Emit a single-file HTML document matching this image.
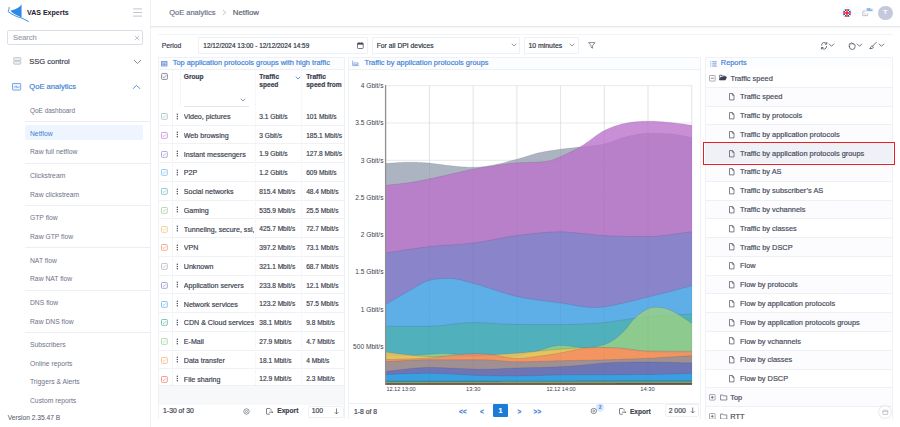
<!DOCTYPE html>
<html><head><meta charset="utf-8">
<style>
*{box-sizing:border-box;margin:0;padding:0}
html,body{width:900px;height:427px;overflow:hidden;background:#fff;font-family:"Liberation Sans",sans-serif;color:#3b3f4f}
.a{position:absolute;white-space:nowrap}
.side{position:absolute;z-index:2;left:0;top:0;width:151.2px;height:427px;background:#fff;border-right:1.2px solid #eeeff2}
.si{position:absolute;white-space:nowrap;left:30px;font-size:6.75px;color:#6e7386;line-height:8px;-webkit-text-stroke:0px}
.div{position:absolute;left:25px;width:125px;height:1px;background:#eceef5}
.hdr{position:absolute;left:150px;top:0;width:750px;height:26px;background:#fff;box-shadow:0 1px 0 rgba(0,0,0,0.05),0 2px 1px rgba(0,0,0,0.035)}
.panel{position:absolute;background:#fff;border:1px solid #eff1f7}
.ph{position:absolute;left:0;top:0;right:0;height:12px;background:#fcfdff;border-bottom:1px solid #edf0f6}
.pt{position:absolute;white-space:nowrap;font-size:7.4px;color:#3e7fd6;line-height:9px;margin-top:-0.8px}
.row{position:absolute;left:0;width:187px;height:18.75px;border-bottom:1px solid #f0f2f7}
.cb{position:absolute;left:4px;width:6px;height:6px;border:0.9px solid;border-radius:1px}
.cell{position:absolute;white-space:nowrap;font-size:7.3px;color:#3b3f4f;line-height:9px}
.rr{position:absolute;left:0;width:187px;height:18.78px;border-bottom:1px solid #eef0f5}
.rt{position:absolute;white-space:nowrap;left:34.5px;top:4.5px;font-size:7.42px;color:#464a5a;line-height:9px}
.fi{position:absolute;left:24px;top:5px;width:4.4px;height:6px;border:0.8px solid #4a4e5c;border-radius:0.5px 1.5px 0.5px 0.5px}
svg text{font-family:"Liberation Sans",sans-serif}
body div{-webkit-text-stroke:0.18px currentColor}
</style></head><body>

<!-- SIDEBAR -->
<div class="side">
  <svg class="a" style="left:0;top:0" width="34" height="26" viewBox="0 0 34 26">
    <path d="M21.5 4.1C20.2 7.4 15.8 9.6 11 10.4L10.3 10.6C12.5 13.4 16.2 15.6 21.6 17.4Z" fill="#2c8ae6"/>
    <path d="M9.2 7.1C9.2 9 8.8 10.5 8 11.5C11.8 14.6 16.8 16.9 21.8 18.1L28.8 21.6" fill="none" stroke="#2c8ae6" stroke-width="1" opacity="0.9"/>
  </svg>
  <div class="a" style="left:27px;top:8px;font-size:7.05px;font-weight:bold;color:#1e2130;line-height:9px;-webkit-text-stroke:0">VAS Experts</div>
  <svg class="a" style="left:132px;top:7px" width="11" height="11"><path d="M1 1.9h9M1 5.5h9M1 9.1h9" stroke="#b4b8c4" stroke-width="0.8"/></svg>
  <div class="a" style="left:7.2px;top:30.2px;width:135.8px;height:14.6px;border:1px solid #d9dee9;border-radius:2px"></div>
  <div class="a" style="left:13px;top:33px;font-size:7.5px;color:#9ca1b2;line-height:9px">Search</div>
  <svg class="a" style="left:134px;top:35px" width="6" height="6"><path d="M0.8 0.8L5.2 5.2M5.2 0.8L0.8 5.2" stroke="#a8acb8" stroke-width="0.7"/></svg>

  <svg class="a" style="left:12.5px;top:57px" width="9" height="8"><rect x="0.6" y="0.6" width="7.2" height="3" rx="0.9" fill="#eceef2" stroke="#b0b4be" stroke-width="0.7"/><rect x="0.6" y="4.2" width="7.2" height="3" rx="0.9" fill="#eceef2" stroke="#b0b4be" stroke-width="0.7"/></svg>
  <div class="a" style="left:29.3px;top:57.2px;font-size:7.5px;color:#3d4152;line-height:9px">SSG control</div>
  <svg class="a" style="left:133px;top:59px" width="9" height="6"><path d="M1 1L4.5 4.5L8 1" fill="none" stroke="#7d8292" stroke-width="0.9"/></svg>

  <svg class="a" style="left:12.2px;top:82.6px" width="10" height="8"><rect x="0.5" y="0.5" width="8.2" height="6.6" rx="0.5" fill="#eef4fd" stroke="#5b93de" stroke-width="0.8"/><path d="M1.8 4h1.7l0.7-1.2 0.9 2.2 0.8-1h1.8" fill="none" stroke="#5b93de" stroke-width="0.65"/></svg>
  <div class="a" style="left:29.3px;top:81.8px;font-size:7.6px;color:#3e7fd6;line-height:9px">QoE analytics</div>
  <svg class="a" style="left:131.5px;top:84px" width="9" height="6"><path d="M1 4.8L4.5 1.3L8 4.8" fill="none" stroke="#3e7fd6" stroke-width="0.9"/></svg>

  <div class="si" style="top:106.9px;font-size:6.45px">QoE dashboard</div>
  <div class="div" style="top:120.7px"></div>
  <div class="a" style="left:24.6px;top:125.4px;width:118.4px;height:14.6px;background:#eef5fe;border-radius:2px"></div>
  <div class="si" style="top:129.6px;color:#3e7fd6">Netflow</div>
  <div class="si" style="top:148.4px">Raw full netflow</div>
  <div class="div" style="top:162.9px"></div>
  <div class="si" style="top:171.9px">Clickstream</div>
  <div class="si" style="top:190.6px">Raw clickstream</div>
  <div class="div" style="top:205.1px"></div>
  <div class="si" style="top:214.0px">GTP flow</div>
  <div class="si" style="top:232.7px">Raw GTP flow</div>
  <div class="div" style="top:247.2px"></div>
  <div class="si" style="top:256.6px">NAT flow</div>
  <div class="si" style="top:275.4px">Raw NAT flow</div>
  <div class="div" style="top:289.9px"></div>
  <div class="si" style="top:298.8px">DNS flow</div>
  <div class="si" style="top:317.6px">Raw DNS flow</div>
  <div class="div" style="top:332.1px"></div>
  <div class="si" style="top:340.8px">Subscribers</div>
  <div class="si" style="top:359.6px">Online reports</div>
  <div class="si" style="top:378.3px">Triggers &amp; Alerts</div>
  <div class="si" style="top:397.1px">Custom reports</div>
  <div class="a" style="left:7.7px;top:413.7px;font-size:6.65px;color:#585d6e;line-height:8px;-webkit-text-stroke:0.05px currentColor">Version 2.35.47 B</div>
</div>

<!-- HEADER -->
<div class="hdr">
  <div class="a" style="left:19.2px;top:7.9px;font-size:7.5px;color:#6b7084;line-height:9px">QoE analytics</div>
  <svg class="a" style="left:72px;top:9px" width="5" height="7"><path d="M1 1L3.8 3.5L1 6" fill="none" stroke="#a8acb8" stroke-width="0.7"/></svg>
  <div class="a" style="left:82.8px;top:7.9px;font-size:7.85px;color:#5a5f72;line-height:9px">Netflow</div>
  <!-- flag -->
  <svg class="a" style="left:691px;top:7px" width="12" height="12" viewBox="0 0 12 12">
    <circle cx="6" cy="6" r="5.4" fill="#fff" stroke="#f0f1f5" stroke-width="0.6"/>
    <defs><clipPath id="fc"><circle cx="6" cy="6" r="3.9"/></clipPath></defs>
    <g clip-path="url(#fc)"><rect width="12" height="12" fill="#3a4aa0"/>
    <path d="M0 0L12 12M12 0L0 12" stroke="#fff" stroke-width="1"/>
    <path d="M6 0V12M0 6H12" stroke="#fff" stroke-width="1.8"/>
    <path d="M6 0V12M0 6H12" stroke="#e0202c" stroke-width="1.3"/></g>
  </svg>
  <svg class="a" style="left:711px;top:7px" width="15" height="11" viewBox="0 0 15 11">
    <path d="M4.6 4.1H2.3a0.5 0.5 0 0 0-0.5 0.5V8.2a0.5 0.5 0 0 0 0.5 0.5H6.2a0.5 0.5 0 0 0 0.5-0.5V6.6" fill="none" stroke="#a3a8b6" stroke-width="0.75"/>
    <path d="M3 6.4L4.2 7.2L5.4 6.4" fill="none" stroke="#a3a8b6" stroke-width="0.55"/>
    <rect x="4.2" y="1.2" width="8.6" height="3.4" rx="1.7" fill="#d8e9fc"/>
    <text x="8.5" y="4" font-size="3.2" fill="#3f8be0" text-anchor="middle" font-weight="bold">99+</text>
  </svg>
  <div class="a" style="left:728.2px;top:5.7px;width:14.6px;height:14.6px;border-radius:50%;background:#c4cadb"></div>
  <div class="a" style="left:733.4px;top:9.2px;font-size:5.8px;font-weight:bold;color:#fff;line-height:7px">T</div>
</div>

<!-- TOOLBAR -->
<div class="a" style="left:157.8px;top:33.5px;width:735px;height:1px;background:#f2f4f9"></div>
<div class="a" style="left:161.7px;top:42.3px;font-size:6.75px;color:#3b3f4f;line-height:8px">Period</div>
<div class="a" style="left:198.3px;top:37.3px;width:170px;height:16.3px;border:1px solid #eef0f6;border-radius:1px"></div>
<div class="a" style="left:203.3px;top:42.3px;font-size:6.44px;color:#2f3342;line-height:8px">12/12/2024 13:00 - 12/12/2024 14:59</div>
<svg class="a" style="left:357px;top:42px" width="7" height="7"><rect x="0.5" y="1.1" width="5.7" height="5.4" rx="0.7" fill="#fff" stroke="#4a4f62" stroke-width="0.75"/><rect x="0.5" y="1.1" width="5.7" height="1.5" fill="#3a3f55"/><path d="M2 0.2v1.5M4.7 0.2v1.5" stroke="#3a3f55" stroke-width="0.8"/></svg>
<div class="a" style="left:372.2px;top:37.3px;width:148.2px;height:16.3px;border:1px solid #eef0f6;border-radius:1px"></div>
<div class="a" style="left:376.7px;top:42.3px;font-size:6.79px;color:#2f3342;line-height:8px">For all DPI devices</div>
<svg class="a" style="left:510.5px;top:43px" width="6" height="4"><path d="M0.7 0.7L3 3L5.3 0.7" fill="none" stroke="#6a6e7c" stroke-width="0.7"/></svg>
<div class="a" style="left:524.4px;top:37.3px;width:54.5px;height:16.3px;border:1px solid #eef0f6;border-radius:1px"></div>
<div class="a" style="left:528.4px;top:42.3px;font-size:6.91px;color:#2f3342;line-height:8px">10 minutes</div>
<svg class="a" style="left:569px;top:43px" width="6" height="4"><path d="M0.7 0.7L3 3L5.3 0.7" fill="none" stroke="#6a6e7c" stroke-width="0.7"/></svg>
<svg class="a" style="left:588px;top:42px" width="8" height="7"><path d="M0.6 0.6H7L4.6 3.5V6.2L3 5.3V3.5Z" fill="none" stroke="#5a5e6c" stroke-width="0.7"/></svg>
<!-- right toolbar icons -->
<svg class="a" style="left:815px;top:36px" width="75" height="20" viewBox="0 0 75 20">
  <g fill="none" stroke="#4e5262" stroke-width="0.8" stroke-linecap="round">
    <path d="M6.6 9.2A2.7 2.7 0 0 1 11.5 7.6M11.6 10.4A2.7 2.7 0 0 1 6.7 12"/>
    <path d="M11.8 6.5V8.1H10.2M6.4 13.1V11.5H8"/>
    <path d="M14.2 8L16.5 10.3L18.8 8"/>
    <path d="M34.3 10.4V8.3a0.75 0.75 0 0 1 1.5 0V7.6a0.75 0.75 0 0 1 1.5 0v0.5a0.75 0.75 0 0 1 1.5 0v0.8a0.75 0.75 0 0 1 1.3 0V10.6a2.9 2.9 0 0 1-2.9 2.9H37.2A2.9 2.9 0 0 1 34.3 10.6Z"/>
    <path d="M42.2 8L44.5 10.3L46.8 8"/>
    <path d="M55.2 12.6C55.4 11.2 56.1 10.2 57.1 10.2C57.9 10.2 58.5 10.8 58.3 11.5C57.8 12.4 56.5 12.8 55.2 12.6Z"/>
    <path d="M57.6 10.1L61.2 6.4"/>
    <path d="M64.2 8L66.5 10.3L68.8 8"/>
  </g>
</svg>
<!-- LEFT TABLE PANEL -->
<div class="panel" style="left:157.5px;top:56.7px;width:187.3px;height:362px;overflow:hidden;border-bottom:none">
  <div class="ph"></div>
  <svg class="a" style="left:2.9px;top:3.2px" width="7" height="6"><rect x="0.4" y="0.4" width="5.6" height="4.6" fill="#dfe6fb" stroke="#5a86d6" stroke-width="0.7"/><path d="M0.4 1.9h5.6M3.2 1.9v3.1M0.4 3.4h5.6" stroke="#5a86d6" stroke-width="0.6"/></svg>
  <div class="pt" style="left:14.2px;top:1.5px">Top application protocols groups with high traffic</div>
  <!-- header -->
  <svg class="a" style="left:2.6px;top:15.4px" width="8" height="8"><rect x="0.6" y="0.6" width="5.8" height="5.8" rx="0.8" fill="#fff" stroke="#6e7280" stroke-width="0.8"/><path d="M1.8 3.6L3.1 4.8L5.3 2.2" fill="none" stroke="#6e7280" stroke-width="0.7"/></svg>
  <div class="a" style="left:13.8px;top:11.5px;width:0;height:316px;border-left:0.8px dotted #e8ebf2"></div>
  <div class="a" style="left:21.1px;top:11.5px;width:0;height:37px;border-left:0.8px dotted #e8ebf2"></div>
  <div class="a" style="left:96.2px;top:11.5px;width:0;height:316px;border-left:0.8px dotted #eef0f5"></div>
  <div class="a" style="left:142.6px;top:11.5px;width:0;height:316px;border-left:0.8px dotted #eef0f5"></div>
  <div class="a" style="left:186px;top:11.5px;width:0;height:316px;border-left:0.8px dotted #eef0f5"></div>
  <div class="cell" style="left:25.3px;top:14.8px;font-weight:bold;font-size:6.6px">Group</div>
  <svg class="a" style="left:81.6px;top:40.4px" width="6" height="4"><path d="M0.7 0.7L3 3L5.3 0.7" fill="none" stroke="#6a6e7c" stroke-width="0.7"/></svg>
  <div class="a" style="left:25.3px;top:48.3px;width:65px;height:1px;background:#dfe4ee"></div>
  <div class="cell" style="left:100.8px;top:15.4px;font-weight:bold;font-size:6.6px;line-height:7.9px">Traffic<br>speed</div>
  <svg class="a" style="left:136.6px;top:18.8px" width="6" height="4"><path d="M0.7 0.7L3 3L5.3 0.7" fill="none" stroke="#3e7fd6" stroke-width="0.8"/></svg>
  <div class="cell" style="left:147.7px;top:15.4px;font-weight:bold;font-size:6.6px;line-height:7.9px">Traffic<br>speed from</div>
  <div class="row" style="top:49.10px"><svg class="a" style="left:2.9px;top:6.4px" width="7" height="7"><g opacity="0.75"><rect x="0.5" y="0.5" width="5.8" height="5.8" rx="0.8" fill="#fff" stroke="#8ea8b4" stroke-width="0.8"/><path d="M1.8 3.5L2.9 4.5L4.9 2.3" fill="none" stroke="#8ea8b4" stroke-width="0.7"/></g></svg><svg class="a" style="left:17.3px;top:5.8px" width="3" height="8"><circle cx="1.3" cy="1.2" r="0.75" fill="#4a4e5c"/><circle cx="1.3" cy="3.5" r="0.75" fill="#4a4e5c"/><circle cx="1.3" cy="5.8" r="0.75" fill="#4a4e5c"/></svg><div class="cell" style="left:25.3px;top:6.4px;width:70.5px;overflow:hidden;font-size:7.1px">Video, pictures</div><div class="cell" style="left:100.8px;top:5.2px;font-size:6.6px">3.1 Gbit/s</div><div class="cell" style="left:147.7px;top:5.2px;font-size:6.6px">101 Mbit/s</div></div>
<div class="row" style="top:67.85px"><svg class="a" style="left:2.9px;top:6.4px" width="7" height="7"><g opacity="0.75"><rect x="0.5" y="0.5" width="5.8" height="5.8" rx="0.8" fill="#fff" stroke="#b75fc9" stroke-width="0.8"/><path d="M1.8 3.5L2.9 4.5L4.9 2.3" fill="none" stroke="#b75fc9" stroke-width="0.7"/></g></svg><svg class="a" style="left:17.3px;top:5.8px" width="3" height="8"><circle cx="1.3" cy="1.2" r="0.75" fill="#4a4e5c"/><circle cx="1.3" cy="3.5" r="0.75" fill="#4a4e5c"/><circle cx="1.3" cy="5.8" r="0.75" fill="#4a4e5c"/></svg><div class="cell" style="left:25.3px;top:6.4px;width:70.5px;overflow:hidden;font-size:7.1px">Web browsing</div><div class="cell" style="left:100.8px;top:5.2px;font-size:6.6px">3 Gbit/s</div><div class="cell" style="left:147.7px;top:5.2px;font-size:6.6px">185.1 Mbit/s</div></div>
<div class="row" style="top:86.60px"><svg class="a" style="left:2.9px;top:6.4px" width="7" height="7"><g opacity="0.75"><rect x="0.5" y="0.5" width="5.8" height="5.8" rx="0.8" fill="#fff" stroke="#7b76c4" stroke-width="0.8"/><path d="M1.8 3.5L2.9 4.5L4.9 2.3" fill="none" stroke="#7b76c4" stroke-width="0.7"/></g></svg><svg class="a" style="left:17.3px;top:5.8px" width="3" height="8"><circle cx="1.3" cy="1.2" r="0.75" fill="#4a4e5c"/><circle cx="1.3" cy="3.5" r="0.75" fill="#4a4e5c"/><circle cx="1.3" cy="5.8" r="0.75" fill="#4a4e5c"/></svg><div class="cell" style="left:25.3px;top:6.4px;width:70.5px;overflow:hidden;font-size:7.1px">Instant messengers</div><div class="cell" style="left:100.8px;top:5.2px;font-size:6.6px">1.9 Gbit/s</div><div class="cell" style="left:147.7px;top:5.2px;font-size:6.6px">127.8 Mbit/s</div></div>
<div class="row" style="top:105.35px"><svg class="a" style="left:2.9px;top:6.4px" width="7" height="7"><g opacity="0.75"><rect x="0.5" y="0.5" width="5.8" height="5.8" rx="0.8" fill="#fff" stroke="#4ba8e8" stroke-width="0.8"/><path d="M1.8 3.5L2.9 4.5L4.9 2.3" fill="none" stroke="#4ba8e8" stroke-width="0.7"/></g></svg><svg class="a" style="left:17.3px;top:5.8px" width="3" height="8"><circle cx="1.3" cy="1.2" r="0.75" fill="#4a4e5c"/><circle cx="1.3" cy="3.5" r="0.75" fill="#4a4e5c"/><circle cx="1.3" cy="5.8" r="0.75" fill="#4a4e5c"/></svg><div class="cell" style="left:25.3px;top:6.4px;width:70.5px;overflow:hidden;font-size:7.1px">P2P</div><div class="cell" style="left:100.8px;top:5.2px;font-size:6.6px">1.2 Gbit/s</div><div class="cell" style="left:147.7px;top:5.2px;font-size:6.6px">609 Mbit/s</div></div>
<div class="row" style="top:124.10px"><svg class="a" style="left:2.9px;top:6.4px" width="7" height="7"><g opacity="0.75"><rect x="0.5" y="0.5" width="5.8" height="5.8" rx="0.8" fill="#fff" stroke="#40aab6" stroke-width="0.8"/><path d="M1.8 3.5L2.9 4.5L4.9 2.3" fill="none" stroke="#40aab6" stroke-width="0.7"/></g></svg><svg class="a" style="left:17.3px;top:5.8px" width="3" height="8"><circle cx="1.3" cy="1.2" r="0.75" fill="#4a4e5c"/><circle cx="1.3" cy="3.5" r="0.75" fill="#4a4e5c"/><circle cx="1.3" cy="5.8" r="0.75" fill="#4a4e5c"/></svg><div class="cell" style="left:25.3px;top:6.4px;width:70.5px;overflow:hidden;font-size:7.1px">Social networks</div><div class="cell" style="left:100.8px;top:5.2px;font-size:6.6px">815.4 Mbit/s</div><div class="cell" style="left:147.7px;top:5.2px;font-size:6.6px">48.4 Mbit/s</div></div>
<div class="row" style="top:142.85px"><svg class="a" style="left:2.9px;top:6.4px" width="7" height="7"><g opacity="0.75"><rect x="0.5" y="0.5" width="5.8" height="5.8" rx="0.8" fill="#fff" stroke="#82c47e" stroke-width="0.8"/><path d="M1.8 3.5L2.9 4.5L4.9 2.3" fill="none" stroke="#82c47e" stroke-width="0.7"/></g></svg><svg class="a" style="left:17.3px;top:5.8px" width="3" height="8"><circle cx="1.3" cy="1.2" r="0.75" fill="#4a4e5c"/><circle cx="1.3" cy="3.5" r="0.75" fill="#4a4e5c"/><circle cx="1.3" cy="5.8" r="0.75" fill="#4a4e5c"/></svg><div class="cell" style="left:25.3px;top:6.4px;width:70.5px;overflow:hidden;font-size:7.1px">Gaming</div><div class="cell" style="left:100.8px;top:5.2px;font-size:6.6px">535.9 Mbit/s</div><div class="cell" style="left:147.7px;top:5.2px;font-size:6.6px">25.5 Mbit/s</div></div>
<div class="row" style="top:161.60px"><svg class="a" style="left:2.9px;top:6.4px" width="7" height="7"><g opacity="0.75"><rect x="0.5" y="0.5" width="5.8" height="5.8" rx="0.8" fill="#fff" stroke="#e9b54c" stroke-width="0.8"/><path d="M1.8 3.5L2.9 4.5L4.9 2.3" fill="none" stroke="#e9b54c" stroke-width="0.7"/></g></svg><svg class="a" style="left:17.3px;top:5.8px" width="3" height="8"><circle cx="1.3" cy="1.2" r="0.75" fill="#4a4e5c"/><circle cx="1.3" cy="3.5" r="0.75" fill="#4a4e5c"/><circle cx="1.3" cy="5.8" r="0.75" fill="#4a4e5c"/></svg><div class="cell" style="left:25.3px;top:6.4px;width:70.5px;overflow:hidden;font-size:7.1px">Tunneling, secure, ssl,</div><div class="cell" style="left:100.8px;top:5.2px;font-size:6.6px">425.7 Mbit/s</div><div class="cell" style="left:147.7px;top:5.2px;font-size:6.6px">72.7 Mbit/s</div></div>
<div class="row" style="top:180.35px"><svg class="a" style="left:2.9px;top:6.4px" width="7" height="7"><g opacity="0.75"><rect x="0.5" y="0.5" width="5.8" height="5.8" rx="0.8" fill="#fff" stroke="#f0784a" stroke-width="0.8"/><path d="M1.8 3.5L2.9 4.5L4.9 2.3" fill="none" stroke="#f0784a" stroke-width="0.7"/></g></svg><svg class="a" style="left:17.3px;top:5.8px" width="3" height="8"><circle cx="1.3" cy="1.2" r="0.75" fill="#4a4e5c"/><circle cx="1.3" cy="3.5" r="0.75" fill="#4a4e5c"/><circle cx="1.3" cy="5.8" r="0.75" fill="#4a4e5c"/></svg><div class="cell" style="left:25.3px;top:6.4px;width:70.5px;overflow:hidden;font-size:7.1px">VPN</div><div class="cell" style="left:100.8px;top:5.2px;font-size:6.6px">397.2 Mbit/s</div><div class="cell" style="left:147.7px;top:5.2px;font-size:6.6px">73.1 Mbit/s</div></div>
<div class="row" style="top:199.10px"><svg class="a" style="left:2.9px;top:6.4px" width="7" height="7"><g opacity="0.75"><rect x="0.5" y="0.5" width="5.8" height="5.8" rx="0.8" fill="#fff" stroke="#9e9bab" stroke-width="0.8"/><path d="M1.8 3.5L2.9 4.5L4.9 2.3" fill="none" stroke="#9e9bab" stroke-width="0.7"/></g></svg><svg class="a" style="left:17.3px;top:5.8px" width="3" height="8"><circle cx="1.3" cy="1.2" r="0.75" fill="#4a4e5c"/><circle cx="1.3" cy="3.5" r="0.75" fill="#4a4e5c"/><circle cx="1.3" cy="5.8" r="0.75" fill="#4a4e5c"/></svg><div class="cell" style="left:25.3px;top:6.4px;width:70.5px;overflow:hidden;font-size:7.1px">Unknown</div><div class="cell" style="left:100.8px;top:5.2px;font-size:6.6px">321.1 Mbit/s</div><div class="cell" style="left:147.7px;top:5.2px;font-size:6.6px">68.7 Mbit/s</div></div>
<div class="row" style="top:217.85px"><svg class="a" style="left:2.9px;top:6.4px" width="7" height="7"><g opacity="0.75"><rect x="0.5" y="0.5" width="5.8" height="5.8" rx="0.8" fill="#fff" stroke="#6a70ba" stroke-width="0.8"/><path d="M1.8 3.5L2.9 4.5L4.9 2.3" fill="none" stroke="#6a70ba" stroke-width="0.7"/></g></svg><svg class="a" style="left:17.3px;top:5.8px" width="3" height="8"><circle cx="1.3" cy="1.2" r="0.75" fill="#4a4e5c"/><circle cx="1.3" cy="3.5" r="0.75" fill="#4a4e5c"/><circle cx="1.3" cy="5.8" r="0.75" fill="#4a4e5c"/></svg><div class="cell" style="left:25.3px;top:6.4px;width:70.5px;overflow:hidden;font-size:7.1px">Application servers</div><div class="cell" style="left:100.8px;top:5.2px;font-size:6.6px">233.8 Mbit/s</div><div class="cell" style="left:147.7px;top:5.2px;font-size:6.6px">12.1 Mbit/s</div></div>
<div class="row" style="top:236.60px"><svg class="a" style="left:2.9px;top:6.4px" width="7" height="7"><g opacity="0.75"><rect x="0.5" y="0.5" width="5.8" height="5.8" rx="0.8" fill="#fff" stroke="#3a9fe2" stroke-width="0.8"/><path d="M1.8 3.5L2.9 4.5L4.9 2.3" fill="none" stroke="#3a9fe2" stroke-width="0.7"/></g></svg><svg class="a" style="left:17.3px;top:5.8px" width="3" height="8"><circle cx="1.3" cy="1.2" r="0.75" fill="#4a4e5c"/><circle cx="1.3" cy="3.5" r="0.75" fill="#4a4e5c"/><circle cx="1.3" cy="5.8" r="0.75" fill="#4a4e5c"/></svg><div class="cell" style="left:25.3px;top:6.4px;width:70.5px;overflow:hidden;font-size:7.1px">Network services</div><div class="cell" style="left:100.8px;top:5.2px;font-size:6.6px">123.2 Mbit/s</div><div class="cell" style="left:147.7px;top:5.2px;font-size:6.6px">57.5 Mbit/s</div></div>
<div class="row" style="top:255.35px"><svg class="a" style="left:2.9px;top:6.4px" width="7" height="7"><g opacity="0.75"><rect x="0.5" y="0.5" width="5.8" height="5.8" rx="0.8" fill="#fff" stroke="#2e9a8e" stroke-width="0.8"/><path d="M1.8 3.5L2.9 4.5L4.9 2.3" fill="none" stroke="#2e9a8e" stroke-width="0.7"/></g></svg><svg class="a" style="left:17.3px;top:5.8px" width="3" height="8"><circle cx="1.3" cy="1.2" r="0.75" fill="#4a4e5c"/><circle cx="1.3" cy="3.5" r="0.75" fill="#4a4e5c"/><circle cx="1.3" cy="5.8" r="0.75" fill="#4a4e5c"/></svg><div class="cell" style="left:25.3px;top:6.4px;width:70.5px;overflow:hidden;font-size:7.1px">CDN &amp; Cloud services</div><div class="cell" style="left:100.8px;top:5.2px;font-size:6.6px">38.1 Mbit/s</div><div class="cell" style="left:147.7px;top:5.2px;font-size:6.6px">9.8 Mbit/s</div></div>
<div class="row" style="top:274.10px"><svg class="a" style="left:2.9px;top:6.4px" width="7" height="7"><g opacity="0.75"><rect x="0.5" y="0.5" width="5.8" height="5.8" rx="0.8" fill="#fff" stroke="#80c47b" stroke-width="0.8"/><path d="M1.8 3.5L2.9 4.5L4.9 2.3" fill="none" stroke="#80c47b" stroke-width="0.7"/></g></svg><svg class="a" style="left:17.3px;top:5.8px" width="3" height="8"><circle cx="1.3" cy="1.2" r="0.75" fill="#4a4e5c"/><circle cx="1.3" cy="3.5" r="0.75" fill="#4a4e5c"/><circle cx="1.3" cy="5.8" r="0.75" fill="#4a4e5c"/></svg><div class="cell" style="left:25.3px;top:6.4px;width:70.5px;overflow:hidden;font-size:7.1px">E-Mail</div><div class="cell" style="left:100.8px;top:5.2px;font-size:6.6px">27.9 Mbit/s</div><div class="cell" style="left:147.7px;top:5.2px;font-size:6.6px">4.7 Mbit/s</div></div>
<div class="row" style="top:292.85px"><svg class="a" style="left:2.9px;top:6.4px" width="7" height="7"><g opacity="0.75"><rect x="0.5" y="0.5" width="5.8" height="5.8" rx="0.8" fill="#fff" stroke="#f0a052" stroke-width="0.8"/><path d="M1.8 3.5L2.9 4.5L4.9 2.3" fill="none" stroke="#f0a052" stroke-width="0.7"/></g></svg><svg class="a" style="left:17.3px;top:5.8px" width="3" height="8"><circle cx="1.3" cy="1.2" r="0.75" fill="#4a4e5c"/><circle cx="1.3" cy="3.5" r="0.75" fill="#4a4e5c"/><circle cx="1.3" cy="5.8" r="0.75" fill="#4a4e5c"/></svg><div class="cell" style="left:25.3px;top:6.4px;width:70.5px;overflow:hidden;font-size:7.1px">Data transfer</div><div class="cell" style="left:100.8px;top:5.2px;font-size:6.6px">18.1 Mbit/s</div><div class="cell" style="left:147.7px;top:5.2px;font-size:6.6px">4 Mbit/s</div></div>
<div class="row" style="top:311.60px"><svg class="a" style="left:2.9px;top:6.4px" width="7" height="7"><g opacity="0.75"><rect x="0.5" y="0.5" width="5.8" height="5.8" rx="0.8" fill="#fff" stroke="#ea5a4c" stroke-width="0.8"/><path d="M1.8 3.5L2.9 4.5L4.9 2.3" fill="none" stroke="#ea5a4c" stroke-width="0.7"/></g></svg><svg class="a" style="left:17.3px;top:5.8px" width="3" height="8"><circle cx="1.3" cy="1.2" r="0.75" fill="#4a4e5c"/><circle cx="1.3" cy="3.5" r="0.75" fill="#4a4e5c"/><circle cx="1.3" cy="5.8" r="0.75" fill="#4a4e5c"/></svg><div class="cell" style="left:25.3px;top:6.4px;width:70.5px;overflow:hidden;font-size:7.1px">File sharing</div><div class="cell" style="left:100.8px;top:5.2px;font-size:6.6px">12.9 Mbit/s</div><div class="cell" style="left:147.7px;top:5.2px;font-size:6.6px">2.3 Mbit/s</div></div>
  <div class="a" style="left:0;top:327.6px;width:187px;height:19.6px;background:#f7f8fa;border-top:1px solid #eef0f5"></div>
  <div class="a" style="left:4.6px;top:349.8px;font-size:6.8px;color:#3b3f4f;line-height:8px">1-30 of 30</div>
  <svg class="a" style="left:84.5px;top:350.7px" width="7" height="7"><circle cx="3.5" cy="3.5" r="2.7" fill="none" stroke="#777b88" stroke-width="0.8"/><circle cx="3.5" cy="3.5" r="1" fill="none" stroke="#777b88" stroke-width="0.7"/></svg>
  <svg class="a" style="left:107.3px;top:350.8px" width="8" height="7"><path d="M3.9 0.5H1a0.5 0.5 0 0 0-0.5 0.5V5.7a0.5 0.5 0 0 0 0.5 0.5H3.8M3.9 0.5L5.2 1.8V2.6M3.1 4.2H6.8M6 3.4L6.8 4.2L6 5" fill="none" stroke="#4a4e5c" stroke-width="0.7"/></svg>
  <div class="a" style="left:118.7px;top:349.6px;font-size:6.7px;font-weight:bold;color:#3b3f4f;line-height:8px">Export</div>
  <div class="a" style="left:149.2px;top:347.9px;width:36.7px;height:12.6px;border:1px solid #edf0f5;border-radius:2px"></div>
  <div class="a" style="left:153.2px;top:349.8px;font-size:6.8px;color:#3b3f4f;line-height:8px">100</div>
  <svg class="a" style="left:175.5px;top:350.2px" width="5" height="7"><path d="M2.5 0.5V6M0.7 4.2L2.5 6L4.3 4.2" fill="none" stroke="#4a4e5c" stroke-width="0.7"/></svg>
</div>

<!-- CHART PANEL -->
<div class="panel" style="left:348.3px;top:56.7px;width:353.1px;height:362px;overflow:hidden;border-bottom:none">
  <div class="ph"></div>
  <svg class="a" style="left:3px;top:2.3px" width="8" height="7"><path d="M0.7 0.6V5.6H6.7" fill="none" stroke="#6a8bd8" stroke-width="0.7"/><path d="M1.9 4.6V3.2L3.4 2.4L4.6 3.2L6 2.6V4.6Z" fill="#dfe6fb" stroke="#6a8bd8" stroke-width="0.55"/></svg>
  <div class="pt" style="left:15.1px;top:1.5px">Traffic by application protocols groups</div>
  <div class="a" style="left:0;top:345.4px;width:353px;height:1px;background:#eef0f5"></div>
  <div class="a" style="left:4.7px;top:350px;font-size:6.8px;color:#3b3f4f;line-height:8px">1-8 of 8</div>
</div>
<svg class="a" style="left:0;top:0" width="900" height="427" viewBox="0 0 900 427">
  <rect x="386" y="85.7" width="306" height="298.3" fill="#fff"/>
  <line x1="386" y1="85.7" x2="692" y2="85.7" stroke="#e3e3e3" stroke-width="0.8"/>
<line x1="386" y1="123.0" x2="692" y2="123.0" stroke="#e3e3e3" stroke-width="0.8"/>
<line x1="386" y1="160.3" x2="692" y2="160.3" stroke="#e3e3e3" stroke-width="0.8"/>
<line x1="386" y1="197.6" x2="692" y2="197.6" stroke="#e3e3e3" stroke-width="0.8"/>
<line x1="386" y1="234.9" x2="692" y2="234.9" stroke="#e3e3e3" stroke-width="0.8"/>
<line x1="386" y1="272.2" x2="692" y2="272.2" stroke="#e3e3e3" stroke-width="0.8"/>
<line x1="386" y1="309.4" x2="692" y2="309.4" stroke="#e3e3e3" stroke-width="0.8"/>
<line x1="386" y1="346.7" x2="692" y2="346.7" stroke="#e3e3e3" stroke-width="0.8"/>
<line x1="429.4" y1="85.7" x2="429.4" y2="384" stroke="#e3e3e3" stroke-width="0.8"/>
<line x1="473.1" y1="85.7" x2="473.1" y2="384" stroke="#e3e3e3" stroke-width="0.8"/>
<line x1="516.9" y1="85.7" x2="516.9" y2="384" stroke="#e3e3e3" stroke-width="0.8"/>
<line x1="560.6" y1="85.7" x2="560.6" y2="384" stroke="#e3e3e3" stroke-width="0.8"/>
<line x1="604.3" y1="85.7" x2="604.3" y2="384" stroke="#e3e3e3" stroke-width="0.8"/>
<line x1="648.0" y1="85.7" x2="648.0" y2="384" stroke="#e3e3e3" stroke-width="0.8"/>
<line x1="691.8" y1="85.7" x2="691.8" y2="384" stroke="#e3e3e3" stroke-width="0.8"/>
  <path d="M386.0 384.8 L386.0 163.40 L387.0 163.35 L388.0 163.29 L389.0 163.23 L390.0 163.17 L391.0 163.11 L392.0 163.04 L393.0 162.98 L394.0 162.91 L395.0 162.84 L396.0 162.78 L397.0 162.71 L398.0 162.65 L399.0 162.59 L400.0 162.53 L401.0 162.47 L402.0 162.42 L403.0 162.37 L404.0 162.33 L405.0 162.29 L406.0 162.26 L407.0 162.24 L408.0 162.22 L409.0 162.20 L410.0 162.20 L411.0 162.20 L412.0 162.21 L413.0 162.23 L414.0 162.25 L415.0 162.27 L416.0 162.30 L417.0 162.34 L418.0 162.38 L419.0 162.42 L420.0 162.47 L421.0 162.53 L422.0 162.58 L423.0 162.65 L424.0 162.71 L425.0 162.78 L426.0 162.86 L427.0 162.94 L428.0 163.02 L429.0 163.10 L430.0 163.19 L431.0 163.29 L432.0 163.40 L433.0 163.51 L434.0 163.63 L435.0 163.76 L436.0 163.89 L437.0 164.02 L438.0 164.16 L439.0 164.30 L440.0 164.44 L441.0 164.58 L442.0 164.72 L443.0 164.86 L444.0 164.99 L445.0 165.13 L446.0 165.25 L447.0 165.37 L448.0 165.49 L449.0 165.60 L450.0 165.70 L451.0 165.80 L452.0 165.90 L453.0 165.99 L454.0 166.09 L455.0 166.19 L456.0 166.29 L457.0 166.38 L458.0 166.48 L459.0 166.57 L460.0 166.65 L461.0 166.74 L462.0 166.82 L463.0 166.89 L464.0 166.96 L465.0 167.03 L466.0 167.09 L467.0 167.14 L468.0 167.19 L469.0 167.23 L470.0 167.26 L471.0 167.28 L472.0 167.30 L473.0 167.30 L474.0 167.29 L475.0 167.27 L476.0 167.24 L477.0 167.20 L478.0 167.14 L479.0 167.07 L480.0 166.99 L481.0 166.90 L482.0 166.80 L483.0 166.69 L484.0 166.58 L485.0 166.45 L486.0 166.31 L487.0 166.17 L488.0 166.02 L489.0 165.86 L490.0 165.70 L491.0 165.53 L492.0 165.35 L493.0 165.16 L494.0 164.96 L495.0 164.76 L496.0 164.55 L497.0 164.33 L498.0 164.11 L499.0 163.88 L500.0 163.64 L501.0 163.40 L502.0 163.16 L503.0 162.91 L504.0 162.66 L505.0 162.40 L506.0 162.14 L507.0 161.88 L508.0 161.62 L509.0 161.35 L510.0 161.09 L511.0 160.82 L512.0 160.55 L513.0 160.28 L514.0 160.02 L515.0 159.75 L516.0 159.48 L517.0 159.22 L518.0 158.95 L519.0 158.67 L520.0 158.38 L521.0 158.09 L522.0 157.79 L523.0 157.49 L524.0 157.18 L525.0 156.88 L526.0 156.57 L527.0 156.26 L528.0 155.95 L529.0 155.64 L530.0 155.33 L531.0 155.03 L532.0 154.73 L533.0 154.43 L534.0 154.14 L535.0 153.86 L536.0 153.59 L537.0 153.33 L538.0 153.07 L539.0 152.83 L540.0 152.60 L541.0 152.38 L542.0 152.17 L543.0 151.97 L544.0 151.77 L545.0 151.59 L546.0 151.41 L547.0 151.24 L548.0 151.07 L549.0 150.91 L550.0 150.75 L551.0 150.60 L552.0 150.45 L553.0 150.31 L554.0 150.16 L555.0 150.02 L556.0 149.89 L557.0 149.75 L558.0 149.61 L559.0 149.48 L560.0 149.34 L561.0 149.20 L562.0 149.06 L563.0 148.93 L564.0 148.81 L565.0 148.68 L566.0 148.56 L567.0 148.45 L568.0 148.33 L569.0 148.22 L570.0 148.11 L571.0 148.00 L572.0 147.90 L573.0 147.79 L574.0 147.68 L575.0 147.57 L576.0 147.46 L577.0 147.35 L578.0 147.24 L579.0 147.12 L580.0 147.00 L581.0 146.88 L582.0 146.77 L583.0 146.67 L584.0 146.57 L585.0 146.47 L586.0 146.38 L587.0 146.28 L588.0 146.19 L589.0 146.10 L590.0 146.01 L591.0 145.91 L592.0 145.81 L593.0 145.71 L594.0 145.60 L595.0 145.49 L596.0 145.37 L597.0 145.24 L598.0 145.10 L599.0 144.95 L600.0 144.79 L601.0 144.62 L602.0 144.43 L603.0 144.23 L604.0 144.01 L605.0 143.78 L606.0 143.52 L607.0 143.24 L608.0 142.93 L609.0 142.60 L610.0 142.26 L611.0 141.91 L612.0 141.54 L613.0 141.16 L614.0 140.78 L615.0 140.39 L616.0 140.01 L617.0 139.63 L618.0 139.25 L619.0 138.88 L620.0 138.53 L621.0 138.18 L622.0 137.85 L623.0 137.55 L624.0 137.26 L625.0 137.00 L626.0 136.75 L627.0 136.51 L628.0 136.27 L629.0 136.03 L630.0 135.80 L631.0 135.57 L632.0 135.35 L633.0 135.13 L634.0 134.93 L635.0 134.73 L636.0 134.54 L637.0 134.36 L638.0 134.19 L639.0 134.03 L640.0 133.88 L641.0 133.75 L642.0 133.62 L643.0 133.52 L644.0 133.42 L645.0 133.34 L646.0 133.28 L647.0 133.24 L648.0 133.21 L649.0 133.20 L650.0 133.20 L651.0 133.20 L652.0 133.20 L653.0 133.20 L654.0 133.21 L655.0 133.21 L656.0 133.22 L657.0 133.23 L658.0 133.24 L659.0 133.25 L660.0 133.27 L661.0 133.29 L662.0 133.32 L663.0 133.35 L664.0 133.38 L665.0 133.42 L666.0 133.47 L667.0 133.51 L668.0 133.57 L669.0 133.63 L670.0 133.70 L671.0 133.78 L672.0 133.88 L673.0 133.99 L674.0 134.12 L675.0 134.26 L676.0 134.41 L677.0 134.58 L678.0 134.75 L679.0 134.94 L680.0 135.13 L681.0 135.32 L682.0 135.52 L683.0 135.73 L684.0 135.93 L685.0 136.14 L686.0 136.34 L687.0 136.55 L688.0 136.75 L689.0 136.95 L690.0 137.14 L691.0 137.32 L692.0 137.50 L692.0 384.8 Z" fill="#98a1b1" fill-opacity="0.8"/>
<path d="M386.0 163.40 L387.0 163.35 L388.0 163.29 L389.0 163.23 L390.0 163.17 L391.0 163.11 L392.0 163.04 L393.0 162.98 L394.0 162.91 L395.0 162.84 L396.0 162.78 L397.0 162.71 L398.0 162.65 L399.0 162.59 L400.0 162.53 L401.0 162.47 L402.0 162.42 L403.0 162.37 L404.0 162.33 L405.0 162.29 L406.0 162.26 L407.0 162.24 L408.0 162.22 L409.0 162.20 L410.0 162.20 L411.0 162.20 L412.0 162.21 L413.0 162.23 L414.0 162.25 L415.0 162.27 L416.0 162.30 L417.0 162.34 L418.0 162.38 L419.0 162.42 L420.0 162.47 L421.0 162.53 L422.0 162.58 L423.0 162.65 L424.0 162.71 L425.0 162.78 L426.0 162.86 L427.0 162.94 L428.0 163.02 L429.0 163.10 L430.0 163.19 L431.0 163.29 L432.0 163.40 L433.0 163.51 L434.0 163.63 L435.0 163.76 L436.0 163.89 L437.0 164.02 L438.0 164.16 L439.0 164.30 L440.0 164.44 L441.0 164.58 L442.0 164.72 L443.0 164.86 L444.0 164.99 L445.0 165.13 L446.0 165.25 L447.0 165.37 L448.0 165.49 L449.0 165.60 L450.0 165.70 L451.0 165.80 L452.0 165.90 L453.0 165.99 L454.0 166.09 L455.0 166.19 L456.0 166.29 L457.0 166.38 L458.0 166.48 L459.0 166.57 L460.0 166.65 L461.0 166.74 L462.0 166.82 L463.0 166.89 L464.0 166.96 L465.0 167.03 L466.0 167.09 L467.0 167.14 L468.0 167.19 L469.0 167.23 L470.0 167.26 L471.0 167.28 L472.0 167.30 L473.0 167.30 L474.0 167.29 L475.0 167.27 L476.0 167.24 L477.0 167.20 L478.0 167.14 L479.0 167.07 L480.0 166.99 L481.0 166.90 L482.0 166.80 L483.0 166.69 L484.0 166.58 L485.0 166.45 L486.0 166.31 L487.0 166.17 L488.0 166.02 L489.0 165.86 L490.0 165.70 L491.0 165.53 L492.0 165.35 L493.0 165.16 L494.0 164.96 L495.0 164.76 L496.0 164.55 L497.0 164.33 L498.0 164.11 L499.0 163.88 L500.0 163.64 L501.0 163.40 L502.0 163.16 L503.0 162.91 L504.0 162.66 L505.0 162.40 L506.0 162.14 L507.0 161.88 L508.0 161.62 L509.0 161.35 L510.0 161.09 L511.0 160.82 L512.0 160.55 L513.0 160.28 L514.0 160.02 L515.0 159.75 L516.0 159.48 L517.0 159.22 L518.0 158.95 L519.0 158.67 L520.0 158.38 L521.0 158.09 L522.0 157.79 L523.0 157.49 L524.0 157.18 L525.0 156.88 L526.0 156.57 L527.0 156.26 L528.0 155.95 L529.0 155.64 L530.0 155.33 L531.0 155.03 L532.0 154.73 L533.0 154.43 L534.0 154.14 L535.0 153.86 L536.0 153.59 L537.0 153.33 L538.0 153.07 L539.0 152.83 L540.0 152.60 L541.0 152.38 L542.0 152.17 L543.0 151.97 L544.0 151.77 L545.0 151.59 L546.0 151.41 L547.0 151.24 L548.0 151.07 L549.0 150.91 L550.0 150.75 L551.0 150.60 L552.0 150.45 L553.0 150.31 L554.0 150.16 L555.0 150.02 L556.0 149.89 L557.0 149.75 L558.0 149.61 L559.0 149.48 L560.0 149.34 L561.0 149.20 L562.0 149.06 L563.0 148.93 L564.0 148.81 L565.0 148.68 L566.0 148.56 L567.0 148.45 L568.0 148.33 L569.0 148.22 L570.0 148.11 L571.0 148.00 L572.0 147.90 L573.0 147.79 L574.0 147.68 L575.0 147.57 L576.0 147.46 L577.0 147.35 L578.0 147.24 L579.0 147.12 L580.0 147.00 L581.0 146.88 L582.0 146.77 L583.0 146.67 L584.0 146.57 L585.0 146.47 L586.0 146.38 L587.0 146.28 L588.0 146.19 L589.0 146.10 L590.0 146.01 L591.0 145.91 L592.0 145.81 L593.0 145.71 L594.0 145.60 L595.0 145.49 L596.0 145.37 L597.0 145.24 L598.0 145.10 L599.0 144.95 L600.0 144.79 L601.0 144.62 L602.0 144.43 L603.0 144.23 L604.0 144.01 L605.0 143.78 L606.0 143.52 L607.0 143.24 L608.0 142.93 L609.0 142.60 L610.0 142.26 L611.0 141.91 L612.0 141.54 L613.0 141.16 L614.0 140.78 L615.0 140.39 L616.0 140.01 L617.0 139.63 L618.0 139.25 L619.0 138.88 L620.0 138.53 L621.0 138.18 L622.0 137.85 L623.0 137.55 L624.0 137.26 L625.0 137.00 L626.0 136.75 L627.0 136.51 L628.0 136.27 L629.0 136.03 L630.0 135.80 L631.0 135.57 L632.0 135.35 L633.0 135.13 L634.0 134.93 L635.0 134.73 L636.0 134.54 L637.0 134.36 L638.0 134.19 L639.0 134.03 L640.0 133.88 L641.0 133.75 L642.0 133.62 L643.0 133.52 L644.0 133.42 L645.0 133.34 L646.0 133.28 L647.0 133.24 L648.0 133.21 L649.0 133.20 L650.0 133.20 L651.0 133.20 L652.0 133.20 L653.0 133.20 L654.0 133.21 L655.0 133.21 L656.0 133.22 L657.0 133.23 L658.0 133.24 L659.0 133.25 L660.0 133.27 L661.0 133.29 L662.0 133.32 L663.0 133.35 L664.0 133.38 L665.0 133.42 L666.0 133.47 L667.0 133.51 L668.0 133.57 L669.0 133.63 L670.0 133.70 L671.0 133.78 L672.0 133.88 L673.0 133.99 L674.0 134.12 L675.0 134.26 L676.0 134.41 L677.0 134.58 L678.0 134.75 L679.0 134.94 L680.0 135.13 L681.0 135.32 L682.0 135.52 L683.0 135.73 L684.0 135.93 L685.0 136.14 L686.0 136.34 L687.0 136.55 L688.0 136.75 L689.0 136.95 L690.0 137.14 L691.0 137.32 L692.0 137.50" fill="none" stroke="rgba(40,40,60,0.22)" stroke-width="0.6"/>
<path d="M386.0 384.8 L386.0 185.30 L387.0 185.18 L388.0 185.07 L389.0 184.96 L390.0 184.85 L391.0 184.74 L392.0 184.64 L393.0 184.53 L394.0 184.43 L395.0 184.32 L396.0 184.22 L397.0 184.11 L398.0 184.00 L399.0 183.89 L400.0 183.78 L401.0 183.67 L402.0 183.55 L403.0 183.44 L404.0 183.31 L405.0 183.19 L406.0 183.06 L407.0 182.93 L408.0 182.79 L409.0 182.65 L410.0 182.50 L411.0 182.35 L412.0 182.19 L413.0 182.03 L414.0 181.86 L415.0 181.69 L416.0 181.52 L417.0 181.34 L418.0 181.16 L419.0 180.97 L420.0 180.78 L421.0 180.59 L422.0 180.40 L423.0 180.20 L424.0 180.01 L425.0 179.81 L426.0 179.61 L427.0 179.41 L428.0 179.20 L429.0 179.00 L430.0 178.79 L431.0 178.58 L432.0 178.37 L433.0 178.16 L434.0 177.94 L435.0 177.72 L436.0 177.49 L437.0 177.27 L438.0 177.04 L439.0 176.81 L440.0 176.58 L441.0 176.35 L442.0 176.12 L443.0 175.89 L444.0 175.66 L445.0 175.43 L446.0 175.20 L447.0 174.98 L448.0 174.75 L449.0 174.52 L450.0 174.30 L451.0 174.08 L452.0 173.85 L453.0 173.62 L454.0 173.39 L455.0 173.16 L456.0 172.93 L457.0 172.70 L458.0 172.47 L459.0 172.24 L460.0 172.01 L461.0 171.78 L462.0 171.55 L463.0 171.32 L464.0 171.10 L465.0 170.88 L466.0 170.65 L467.0 170.44 L468.0 170.22 L469.0 170.01 L470.0 169.80 L471.0 169.60 L472.0 169.40 L473.0 169.20 L474.0 169.01 L475.0 168.82 L476.0 168.64 L477.0 168.46 L478.0 168.29 L479.0 168.12 L480.0 167.95 L481.0 167.78 L482.0 167.62 L483.0 167.46 L484.0 167.31 L485.0 167.15 L486.0 167.00 L487.0 166.85 L488.0 166.70 L489.0 166.55 L490.0 166.40 L491.0 166.25 L492.0 166.10 L493.0 165.95 L494.0 165.80 L495.0 165.66 L496.0 165.51 L497.0 165.36 L498.0 165.21 L499.0 165.07 L500.0 164.92 L501.0 164.78 L502.0 164.63 L503.0 164.50 L504.0 164.36 L505.0 164.22 L506.0 164.09 L507.0 163.96 L508.0 163.83 L509.0 163.71 L510.0 163.59 L511.0 163.48 L512.0 163.36 L513.0 163.26 L514.0 163.15 L515.0 163.06 L516.0 162.96 L517.0 162.87 L518.0 162.80 L519.0 162.73 L520.0 162.67 L521.0 162.61 L522.0 162.57 L523.0 162.53 L524.0 162.50 L525.0 162.47 L526.0 162.44 L527.0 162.41 L528.0 162.39 L529.0 162.37 L530.0 162.35 L531.0 162.32 L532.0 162.30 L533.0 162.27 L534.0 162.23 L535.0 162.20 L536.0 162.15 L537.0 162.10 L538.0 162.04 L539.0 161.98 L540.0 161.90 L541.0 161.82 L542.0 161.75 L543.0 161.68 L544.0 161.60 L545.0 161.51 L546.0 161.41 L547.0 161.28 L548.0 161.12 L549.0 160.93 L550.0 160.70 L551.0 160.43 L552.0 160.13 L553.0 159.80 L554.0 159.44 L555.0 159.06 L556.0 158.66 L557.0 158.24 L558.0 157.82 L559.0 157.38 L560.0 156.94 L561.0 156.50 L562.0 156.06 L563.0 155.61 L564.0 155.16 L565.0 154.70 L566.0 154.24 L567.0 153.78 L568.0 153.31 L569.0 152.83 L570.0 152.34 L571.0 151.85 L572.0 151.35 L573.0 150.84 L574.0 150.32 L575.0 149.79 L576.0 149.26 L577.0 148.71 L578.0 148.15 L579.0 147.58 L580.0 147.00 L581.0 146.40 L582.0 145.77 L583.0 145.13 L584.0 144.46 L585.0 143.77 L586.0 143.07 L587.0 142.36 L588.0 141.64 L589.0 140.91 L590.0 140.17 L591.0 139.44 L592.0 138.70 L593.0 137.96 L594.0 137.23 L595.0 136.51 L596.0 135.80 L597.0 135.10 L598.0 134.41 L599.0 133.75 L600.0 133.10 L601.0 132.47 L602.0 131.87 L603.0 131.30 L604.0 130.76 L605.0 130.25 L606.0 129.76 L607.0 129.28 L608.0 128.83 L609.0 128.39 L610.0 127.98 L611.0 127.57 L612.0 127.19 L613.0 126.82 L614.0 126.46 L615.0 126.12 L616.0 125.79 L617.0 125.48 L618.0 125.18 L619.0 124.89 L620.0 124.62 L621.0 124.35 L622.0 124.10 L623.0 123.86 L624.0 123.62 L625.0 123.40 L626.0 123.19 L627.0 122.99 L628.0 122.80 L629.0 122.63 L630.0 122.47 L631.0 122.32 L632.0 122.18 L633.0 122.05 L634.0 121.93 L635.0 121.83 L636.0 121.73 L637.0 121.64 L638.0 121.56 L639.0 121.50 L640.0 121.43 L641.0 121.38 L642.0 121.34 L643.0 121.30 L644.0 121.27 L645.0 121.24 L646.0 121.22 L647.0 121.21 L648.0 121.20 L649.0 121.20 L650.0 121.20 L651.0 121.22 L652.0 121.24 L653.0 121.27 L654.0 121.30 L655.0 121.34 L656.0 121.39 L657.0 121.44 L658.0 121.50 L659.0 121.57 L660.0 121.64 L661.0 121.71 L662.0 121.79 L663.0 121.87 L664.0 121.95 L665.0 122.04 L666.0 122.13 L667.0 122.22 L668.0 122.31 L669.0 122.41 L670.0 122.50 L671.0 122.60 L672.0 122.70 L673.0 122.81 L674.0 122.92 L675.0 123.04 L676.0 123.16 L677.0 123.28 L678.0 123.41 L679.0 123.54 L680.0 123.68 L681.0 123.81 L682.0 123.95 L683.0 124.08 L684.0 124.22 L685.0 124.36 L686.0 124.50 L687.0 124.63 L688.0 124.77 L689.0 124.91 L690.0 125.04 L691.0 125.17 L692.0 125.30 L692.0 384.8 Z" fill="#bb73cc" fill-opacity="0.8"/>
<path d="M386.0 185.30 L387.0 185.18 L388.0 185.07 L389.0 184.96 L390.0 184.85 L391.0 184.74 L392.0 184.64 L393.0 184.53 L394.0 184.43 L395.0 184.32 L396.0 184.22 L397.0 184.11 L398.0 184.00 L399.0 183.89 L400.0 183.78 L401.0 183.67 L402.0 183.55 L403.0 183.44 L404.0 183.31 L405.0 183.19 L406.0 183.06 L407.0 182.93 L408.0 182.79 L409.0 182.65 L410.0 182.50 L411.0 182.35 L412.0 182.19 L413.0 182.03 L414.0 181.86 L415.0 181.69 L416.0 181.52 L417.0 181.34 L418.0 181.16 L419.0 180.97 L420.0 180.78 L421.0 180.59 L422.0 180.40 L423.0 180.20 L424.0 180.01 L425.0 179.81 L426.0 179.61 L427.0 179.41 L428.0 179.20 L429.0 179.00 L430.0 178.79 L431.0 178.58 L432.0 178.37 L433.0 178.16 L434.0 177.94 L435.0 177.72 L436.0 177.49 L437.0 177.27 L438.0 177.04 L439.0 176.81 L440.0 176.58 L441.0 176.35 L442.0 176.12 L443.0 175.89 L444.0 175.66 L445.0 175.43 L446.0 175.20 L447.0 174.98 L448.0 174.75 L449.0 174.52 L450.0 174.30 L451.0 174.08 L452.0 173.85 L453.0 173.62 L454.0 173.39 L455.0 173.16 L456.0 172.93 L457.0 172.70 L458.0 172.47 L459.0 172.24 L460.0 172.01 L461.0 171.78 L462.0 171.55 L463.0 171.32 L464.0 171.10 L465.0 170.88 L466.0 170.65 L467.0 170.44 L468.0 170.22 L469.0 170.01 L470.0 169.80 L471.0 169.60 L472.0 169.40 L473.0 169.20 L474.0 169.01 L475.0 168.82 L476.0 168.64 L477.0 168.46 L478.0 168.29 L479.0 168.12 L480.0 167.95 L481.0 167.78 L482.0 167.62 L483.0 167.46 L484.0 167.31 L485.0 167.15 L486.0 167.00 L487.0 166.85 L488.0 166.70 L489.0 166.55 L490.0 166.40 L491.0 166.25 L492.0 166.10 L493.0 165.95 L494.0 165.80 L495.0 165.66 L496.0 165.51 L497.0 165.36 L498.0 165.21 L499.0 165.07 L500.0 164.92 L501.0 164.78 L502.0 164.63 L503.0 164.50 L504.0 164.36 L505.0 164.22 L506.0 164.09 L507.0 163.96 L508.0 163.83 L509.0 163.71 L510.0 163.59 L511.0 163.48 L512.0 163.36 L513.0 163.26 L514.0 163.15 L515.0 163.06 L516.0 162.96 L517.0 162.87 L518.0 162.80 L519.0 162.73 L520.0 162.67 L521.0 162.61 L522.0 162.57 L523.0 162.53 L524.0 162.50 L525.0 162.47 L526.0 162.44 L527.0 162.41 L528.0 162.39 L529.0 162.37 L530.0 162.35 L531.0 162.32 L532.0 162.30 L533.0 162.27 L534.0 162.23 L535.0 162.20 L536.0 162.15 L537.0 162.10 L538.0 162.04 L539.0 161.98 L540.0 161.90 L541.0 161.82 L542.0 161.75 L543.0 161.68 L544.0 161.60 L545.0 161.51 L546.0 161.41 L547.0 161.28 L548.0 161.12 L549.0 160.93 L550.0 160.70 L551.0 160.43 L552.0 160.13 L553.0 159.80 L554.0 159.44 L555.0 159.06 L556.0 158.66 L557.0 158.24 L558.0 157.82 L559.0 157.38 L560.0 156.94 L561.0 156.50 L562.0 156.06 L563.0 155.61 L564.0 155.16 L565.0 154.70 L566.0 154.24 L567.0 153.78 L568.0 153.31 L569.0 152.83 L570.0 152.34 L571.0 151.85 L572.0 151.35 L573.0 150.84 L574.0 150.32 L575.0 149.79 L576.0 149.26 L577.0 148.71 L578.0 148.15 L579.0 147.58 L580.0 147.00 L581.0 146.40 L582.0 145.77 L583.0 145.13 L584.0 144.46 L585.0 143.77 L586.0 143.07 L587.0 142.36 L588.0 141.64 L589.0 140.91 L590.0 140.17 L591.0 139.44 L592.0 138.70 L593.0 137.96 L594.0 137.23 L595.0 136.51 L596.0 135.80 L597.0 135.10 L598.0 134.41 L599.0 133.75 L600.0 133.10 L601.0 132.47 L602.0 131.87 L603.0 131.30 L604.0 130.76 L605.0 130.25 L606.0 129.76 L607.0 129.28 L608.0 128.83 L609.0 128.39 L610.0 127.98 L611.0 127.57 L612.0 127.19 L613.0 126.82 L614.0 126.46 L615.0 126.12 L616.0 125.79 L617.0 125.48 L618.0 125.18 L619.0 124.89 L620.0 124.62 L621.0 124.35 L622.0 124.10 L623.0 123.86 L624.0 123.62 L625.0 123.40 L626.0 123.19 L627.0 122.99 L628.0 122.80 L629.0 122.63 L630.0 122.47 L631.0 122.32 L632.0 122.18 L633.0 122.05 L634.0 121.93 L635.0 121.83 L636.0 121.73 L637.0 121.64 L638.0 121.56 L639.0 121.50 L640.0 121.43 L641.0 121.38 L642.0 121.34 L643.0 121.30 L644.0 121.27 L645.0 121.24 L646.0 121.22 L647.0 121.21 L648.0 121.20 L649.0 121.20 L650.0 121.20 L651.0 121.22 L652.0 121.24 L653.0 121.27 L654.0 121.30 L655.0 121.34 L656.0 121.39 L657.0 121.44 L658.0 121.50 L659.0 121.57 L660.0 121.64 L661.0 121.71 L662.0 121.79 L663.0 121.87 L664.0 121.95 L665.0 122.04 L666.0 122.13 L667.0 122.22 L668.0 122.31 L669.0 122.41 L670.0 122.50 L671.0 122.60 L672.0 122.70 L673.0 122.81 L674.0 122.92 L675.0 123.04 L676.0 123.16 L677.0 123.28 L678.0 123.41 L679.0 123.54 L680.0 123.68 L681.0 123.81 L682.0 123.95 L683.0 124.08 L684.0 124.22 L685.0 124.36 L686.0 124.50 L687.0 124.63 L688.0 124.77 L689.0 124.91 L690.0 125.04 L691.0 125.17 L692.0 125.30" fill="none" stroke="rgba(40,40,60,0.22)" stroke-width="0.6"/>
<path d="M386.0 384.8 L386.0 252.90 L387.0 252.76 L388.0 252.61 L389.0 252.46 L390.0 252.31 L391.0 252.16 L392.0 252.01 L393.0 251.86 L394.0 251.71 L395.0 251.56 L396.0 251.40 L397.0 251.25 L398.0 251.10 L399.0 250.94 L400.0 250.79 L401.0 250.63 L402.0 250.48 L403.0 250.33 L404.0 250.17 L405.0 250.02 L406.0 249.87 L407.0 249.71 L408.0 249.56 L409.0 249.41 L410.0 249.26 L411.0 249.11 L412.0 248.96 L413.0 248.82 L414.0 248.67 L415.0 248.53 L416.0 248.38 L417.0 248.24 L418.0 248.10 L419.0 247.96 L420.0 247.83 L421.0 247.69 L422.0 247.56 L423.0 247.43 L424.0 247.30 L425.0 247.18 L426.0 247.05 L427.0 246.93 L428.0 246.82 L429.0 246.70 L430.0 246.59 L431.0 246.48 L432.0 246.38 L433.0 246.28 L434.0 246.18 L435.0 246.09 L436.0 246.00 L437.0 245.92 L438.0 245.84 L439.0 245.76 L440.0 245.68 L441.0 245.60 L442.0 245.53 L443.0 245.46 L444.0 245.39 L445.0 245.32 L446.0 245.25 L447.0 245.19 L448.0 245.12 L449.0 245.05 L450.0 244.99 L451.0 244.92 L452.0 244.86 L453.0 244.79 L454.0 244.72 L455.0 244.65 L456.0 244.58 L457.0 244.51 L458.0 244.44 L459.0 244.37 L460.0 244.29 L461.0 244.21 L462.0 244.13 L463.0 244.05 L464.0 243.96 L465.0 243.87 L466.0 243.77 L467.0 243.68 L468.0 243.57 L469.0 243.47 L470.0 243.36 L471.0 243.24 L472.0 243.12 L473.0 243.00 L474.0 242.87 L475.0 242.73 L476.0 242.59 L477.0 242.45 L478.0 242.30 L479.0 242.14 L480.0 241.98 L481.0 241.82 L482.0 241.65 L483.0 241.48 L484.0 241.30 L485.0 241.13 L486.0 240.95 L487.0 240.76 L488.0 240.58 L489.0 240.39 L490.0 240.20 L491.0 240.02 L492.0 239.82 L493.0 239.63 L494.0 239.44 L495.0 239.25 L496.0 239.06 L497.0 238.87 L498.0 238.68 L499.0 238.48 L500.0 238.30 L501.0 238.11 L502.0 237.92 L503.0 237.74 L504.0 237.55 L505.0 237.37 L506.0 237.20 L507.0 237.02 L508.0 236.85 L509.0 236.68 L510.0 236.52 L511.0 236.36 L512.0 236.20 L513.0 236.05 L514.0 235.91 L515.0 235.77 L516.0 235.63 L517.0 235.50 L518.0 235.37 L519.0 235.25 L520.0 235.12 L521.0 234.99 L522.0 234.87 L523.0 234.74 L524.0 234.62 L525.0 234.50 L526.0 234.37 L527.0 234.25 L528.0 234.13 L529.0 234.02 L530.0 233.90 L531.0 233.79 L532.0 233.67 L533.0 233.56 L534.0 233.46 L535.0 233.35 L536.0 233.25 L537.0 233.14 L538.0 233.05 L539.0 232.95 L540.0 232.86 L541.0 232.77 L542.0 232.68 L543.0 232.60 L544.0 232.52 L545.0 232.44 L546.0 232.37 L547.0 232.30 L548.0 232.23 L549.0 232.17 L550.0 232.12 L551.0 232.06 L552.0 232.01 L553.0 231.97 L554.0 231.93 L555.0 231.90 L556.0 231.87 L557.0 231.84 L558.0 231.82 L559.0 231.81 L560.0 231.80 L561.0 231.80 L562.0 231.81 L563.0 231.83 L564.0 231.86 L565.0 231.90 L566.0 231.95 L567.0 232.02 L568.0 232.09 L569.0 232.17 L570.0 232.25 L571.0 232.35 L572.0 232.44 L573.0 232.55 L574.0 232.65 L575.0 232.76 L576.0 232.87 L577.0 232.98 L578.0 233.09 L579.0 233.20 L580.0 233.30 L581.0 233.41 L582.0 233.51 L583.0 233.61 L584.0 233.70 L585.0 233.79 L586.0 233.89 L587.0 233.99 L588.0 234.09 L589.0 234.19 L590.0 234.30 L591.0 234.41 L592.0 234.52 L593.0 234.63 L594.0 234.73 L595.0 234.84 L596.0 234.94 L597.0 235.05 L598.0 235.15 L599.0 235.24 L600.0 235.33 L601.0 235.42 L602.0 235.50 L603.0 235.57 L604.0 235.64 L605.0 235.70 L606.0 235.75 L607.0 235.81 L608.0 235.86 L609.0 235.90 L610.0 235.95 L611.0 235.99 L612.0 236.03 L613.0 236.07 L614.0 236.10 L615.0 236.14 L616.0 236.17 L617.0 236.20 L618.0 236.23 L619.0 236.25 L620.0 236.28 L621.0 236.30 L622.0 236.32 L623.0 236.34 L624.0 236.36 L625.0 236.38 L626.0 236.39 L627.0 236.41 L628.0 236.42 L629.0 236.43 L630.0 236.44 L631.0 236.45 L632.0 236.46 L633.0 236.47 L634.0 236.47 L635.0 236.48 L636.0 236.48 L637.0 236.49 L638.0 236.49 L639.0 236.49 L640.0 236.49 L641.0 236.50 L642.0 236.50 L643.0 236.50 L644.0 236.50 L645.0 236.50 L646.0 236.50 L647.0 236.50 L648.0 236.50 L649.0 236.50 L650.0 236.48 L651.0 236.46 L652.0 236.42 L653.0 236.38 L654.0 236.33 L655.0 236.28 L656.0 236.21 L657.0 236.14 L658.0 236.06 L659.0 235.97 L660.0 235.88 L661.0 235.79 L662.0 235.68 L663.0 235.57 L664.0 235.46 L665.0 235.34 L666.0 235.22 L667.0 235.10 L668.0 234.97 L669.0 234.84 L670.0 234.70 L671.0 234.56 L672.0 234.42 L673.0 234.28 L674.0 234.14 L675.0 233.99 L676.0 233.85 L677.0 233.70 L678.0 233.56 L679.0 233.41 L680.0 233.27 L681.0 233.12 L682.0 232.98 L683.0 232.84 L684.0 232.70 L685.0 232.57 L686.0 232.43 L687.0 232.30 L688.0 232.17 L689.0 232.05 L690.0 231.93 L691.0 231.81 L692.0 231.70 L692.0 384.8 Z" fill="#7e86cb" fill-opacity="0.8"/>
<path d="M386.0 252.90 L387.0 252.76 L388.0 252.61 L389.0 252.46 L390.0 252.31 L391.0 252.16 L392.0 252.01 L393.0 251.86 L394.0 251.71 L395.0 251.56 L396.0 251.40 L397.0 251.25 L398.0 251.10 L399.0 250.94 L400.0 250.79 L401.0 250.63 L402.0 250.48 L403.0 250.33 L404.0 250.17 L405.0 250.02 L406.0 249.87 L407.0 249.71 L408.0 249.56 L409.0 249.41 L410.0 249.26 L411.0 249.11 L412.0 248.96 L413.0 248.82 L414.0 248.67 L415.0 248.53 L416.0 248.38 L417.0 248.24 L418.0 248.10 L419.0 247.96 L420.0 247.83 L421.0 247.69 L422.0 247.56 L423.0 247.43 L424.0 247.30 L425.0 247.18 L426.0 247.05 L427.0 246.93 L428.0 246.82 L429.0 246.70 L430.0 246.59 L431.0 246.48 L432.0 246.38 L433.0 246.28 L434.0 246.18 L435.0 246.09 L436.0 246.00 L437.0 245.92 L438.0 245.84 L439.0 245.76 L440.0 245.68 L441.0 245.60 L442.0 245.53 L443.0 245.46 L444.0 245.39 L445.0 245.32 L446.0 245.25 L447.0 245.19 L448.0 245.12 L449.0 245.05 L450.0 244.99 L451.0 244.92 L452.0 244.86 L453.0 244.79 L454.0 244.72 L455.0 244.65 L456.0 244.58 L457.0 244.51 L458.0 244.44 L459.0 244.37 L460.0 244.29 L461.0 244.21 L462.0 244.13 L463.0 244.05 L464.0 243.96 L465.0 243.87 L466.0 243.77 L467.0 243.68 L468.0 243.57 L469.0 243.47 L470.0 243.36 L471.0 243.24 L472.0 243.12 L473.0 243.00 L474.0 242.87 L475.0 242.73 L476.0 242.59 L477.0 242.45 L478.0 242.30 L479.0 242.14 L480.0 241.98 L481.0 241.82 L482.0 241.65 L483.0 241.48 L484.0 241.30 L485.0 241.13 L486.0 240.95 L487.0 240.76 L488.0 240.58 L489.0 240.39 L490.0 240.20 L491.0 240.02 L492.0 239.82 L493.0 239.63 L494.0 239.44 L495.0 239.25 L496.0 239.06 L497.0 238.87 L498.0 238.68 L499.0 238.48 L500.0 238.30 L501.0 238.11 L502.0 237.92 L503.0 237.74 L504.0 237.55 L505.0 237.37 L506.0 237.20 L507.0 237.02 L508.0 236.85 L509.0 236.68 L510.0 236.52 L511.0 236.36 L512.0 236.20 L513.0 236.05 L514.0 235.91 L515.0 235.77 L516.0 235.63 L517.0 235.50 L518.0 235.37 L519.0 235.25 L520.0 235.12 L521.0 234.99 L522.0 234.87 L523.0 234.74 L524.0 234.62 L525.0 234.50 L526.0 234.37 L527.0 234.25 L528.0 234.13 L529.0 234.02 L530.0 233.90 L531.0 233.79 L532.0 233.67 L533.0 233.56 L534.0 233.46 L535.0 233.35 L536.0 233.25 L537.0 233.14 L538.0 233.05 L539.0 232.95 L540.0 232.86 L541.0 232.77 L542.0 232.68 L543.0 232.60 L544.0 232.52 L545.0 232.44 L546.0 232.37 L547.0 232.30 L548.0 232.23 L549.0 232.17 L550.0 232.12 L551.0 232.06 L552.0 232.01 L553.0 231.97 L554.0 231.93 L555.0 231.90 L556.0 231.87 L557.0 231.84 L558.0 231.82 L559.0 231.81 L560.0 231.80 L561.0 231.80 L562.0 231.81 L563.0 231.83 L564.0 231.86 L565.0 231.90 L566.0 231.95 L567.0 232.02 L568.0 232.09 L569.0 232.17 L570.0 232.25 L571.0 232.35 L572.0 232.44 L573.0 232.55 L574.0 232.65 L575.0 232.76 L576.0 232.87 L577.0 232.98 L578.0 233.09 L579.0 233.20 L580.0 233.30 L581.0 233.41 L582.0 233.51 L583.0 233.61 L584.0 233.70 L585.0 233.79 L586.0 233.89 L587.0 233.99 L588.0 234.09 L589.0 234.19 L590.0 234.30 L591.0 234.41 L592.0 234.52 L593.0 234.63 L594.0 234.73 L595.0 234.84 L596.0 234.94 L597.0 235.05 L598.0 235.15 L599.0 235.24 L600.0 235.33 L601.0 235.42 L602.0 235.50 L603.0 235.57 L604.0 235.64 L605.0 235.70 L606.0 235.75 L607.0 235.81 L608.0 235.86 L609.0 235.90 L610.0 235.95 L611.0 235.99 L612.0 236.03 L613.0 236.07 L614.0 236.10 L615.0 236.14 L616.0 236.17 L617.0 236.20 L618.0 236.23 L619.0 236.25 L620.0 236.28 L621.0 236.30 L622.0 236.32 L623.0 236.34 L624.0 236.36 L625.0 236.38 L626.0 236.39 L627.0 236.41 L628.0 236.42 L629.0 236.43 L630.0 236.44 L631.0 236.45 L632.0 236.46 L633.0 236.47 L634.0 236.47 L635.0 236.48 L636.0 236.48 L637.0 236.49 L638.0 236.49 L639.0 236.49 L640.0 236.49 L641.0 236.50 L642.0 236.50 L643.0 236.50 L644.0 236.50 L645.0 236.50 L646.0 236.50 L647.0 236.50 L648.0 236.50 L649.0 236.50 L650.0 236.48 L651.0 236.46 L652.0 236.42 L653.0 236.38 L654.0 236.33 L655.0 236.28 L656.0 236.21 L657.0 236.14 L658.0 236.06 L659.0 235.97 L660.0 235.88 L661.0 235.79 L662.0 235.68 L663.0 235.57 L664.0 235.46 L665.0 235.34 L666.0 235.22 L667.0 235.10 L668.0 234.97 L669.0 234.84 L670.0 234.70 L671.0 234.56 L672.0 234.42 L673.0 234.28 L674.0 234.14 L675.0 233.99 L676.0 233.85 L677.0 233.70 L678.0 233.56 L679.0 233.41 L680.0 233.27 L681.0 233.12 L682.0 232.98 L683.0 232.84 L684.0 232.70 L685.0 232.57 L686.0 232.43 L687.0 232.30 L688.0 232.17 L689.0 232.05 L690.0 231.93 L691.0 231.81 L692.0 231.70" fill="none" stroke="rgba(40,40,60,0.22)" stroke-width="0.6"/>
<path d="M386.0 384.8 L386.0 304.30 L387.0 303.72 L388.0 303.13 L389.0 302.54 L390.0 301.95 L391.0 301.36 L392.0 300.76 L393.0 300.17 L394.0 299.58 L395.0 298.98 L396.0 298.39 L397.0 297.80 L398.0 297.21 L399.0 296.62 L400.0 296.03 L401.0 295.44 L402.0 294.86 L403.0 294.27 L404.0 293.69 L405.0 293.12 L406.0 292.55 L407.0 291.98 L408.0 291.41 L409.0 290.85 L410.0 290.30 L411.0 289.74 L412.0 289.16 L413.0 288.57 L414.0 287.97 L415.0 287.37 L416.0 286.76 L417.0 286.16 L418.0 285.56 L419.0 284.97 L420.0 284.40 L421.0 283.84 L422.0 283.30 L423.0 282.78 L424.0 282.30 L425.0 281.84 L426.0 281.42 L427.0 281.04 L428.0 280.70 L429.0 280.40 L430.0 280.14 L431.0 279.91 L432.0 279.70 L433.0 279.51 L434.0 279.34 L435.0 279.19 L436.0 279.06 L437.0 278.95 L438.0 278.85 L439.0 278.77 L440.0 278.71 L441.0 278.65 L442.0 278.61 L443.0 278.57 L444.0 278.54 L445.0 278.53 L446.0 278.51 L447.0 278.51 L448.0 278.50 L449.0 278.50 L450.0 278.50 L451.0 278.52 L452.0 278.56 L453.0 278.64 L454.0 278.74 L455.0 278.87 L456.0 279.02 L457.0 279.19 L458.0 279.38 L459.0 279.58 L460.0 279.81 L461.0 280.05 L462.0 280.29 L463.0 280.55 L464.0 280.82 L465.0 281.10 L466.0 281.38 L467.0 281.66 L468.0 281.94 L469.0 282.22 L470.0 282.50 L471.0 282.77 L472.0 283.04 L473.0 283.30 L474.0 283.56 L475.0 283.82 L476.0 284.10 L477.0 284.37 L478.0 284.66 L479.0 284.95 L480.0 285.25 L481.0 285.55 L482.0 285.85 L483.0 286.16 L484.0 286.47 L485.0 286.79 L486.0 287.11 L487.0 287.43 L488.0 287.76 L489.0 288.09 L490.0 288.41 L491.0 288.74 L492.0 289.07 L493.0 289.41 L494.0 289.74 L495.0 290.07 L496.0 290.40 L497.0 290.73 L498.0 291.05 L499.0 291.38 L500.0 291.70 L501.0 292.02 L502.0 292.34 L503.0 292.66 L504.0 292.97 L505.0 293.27 L506.0 293.58 L507.0 293.87 L508.0 294.17 L509.0 294.45 L510.0 294.73 L511.0 295.01 L512.0 295.28 L513.0 295.54 L514.0 295.79 L515.0 296.03 L516.0 296.27 L517.0 296.50 L518.0 296.72 L519.0 296.93 L520.0 297.14 L521.0 297.34 L522.0 297.54 L523.0 297.73 L524.0 297.92 L525.0 298.10 L526.0 298.27 L527.0 298.44 L528.0 298.61 L529.0 298.77 L530.0 298.93 L531.0 299.08 L532.0 299.23 L533.0 299.38 L534.0 299.52 L535.0 299.66 L536.0 299.80 L537.0 299.94 L538.0 300.07 L539.0 300.20 L540.0 300.33 L541.0 300.46 L542.0 300.58 L543.0 300.71 L544.0 300.83 L545.0 300.96 L546.0 301.08 L547.0 301.20 L548.0 301.32 L549.0 301.44 L550.0 301.57 L551.0 301.69 L552.0 301.81 L553.0 301.94 L554.0 302.07 L555.0 302.19 L556.0 302.32 L557.0 302.45 L558.0 302.59 L559.0 302.72 L560.0 302.86 L561.0 303.00 L562.0 303.15 L563.0 303.30 L564.0 303.46 L565.0 303.62 L566.0 303.79 L567.0 303.96 L568.0 304.14 L569.0 304.32 L570.0 304.50 L571.0 304.68 L572.0 304.86 L573.0 305.04 L574.0 305.22 L575.0 305.40 L576.0 305.58 L577.0 305.75 L578.0 305.92 L579.0 306.08 L580.0 306.24 L581.0 306.40 L582.0 306.54 L583.0 306.68 L584.0 306.81 L585.0 306.93 L586.0 307.04 L587.0 307.14 L588.0 307.23 L589.0 307.31 L590.0 307.38 L591.0 307.43 L592.0 307.47 L593.0 307.49 L594.0 307.50 L595.0 307.49 L596.0 307.47 L597.0 307.44 L598.0 307.40 L599.0 307.34 L600.0 307.27 L601.0 307.18 L602.0 307.08 L603.0 306.97 L604.0 306.84 L605.0 306.70 L606.0 306.55 L607.0 306.39 L608.0 306.22 L609.0 306.05 L610.0 305.88 L611.0 305.70 L612.0 305.51 L613.0 305.32 L614.0 305.12 L615.0 304.92 L616.0 304.72 L617.0 304.51 L618.0 304.29 L619.0 304.08 L620.0 303.86 L621.0 303.63 L622.0 303.40 L623.0 303.17 L624.0 302.94 L625.0 302.70 L626.0 302.46 L627.0 302.22 L628.0 301.98 L629.0 301.74 L630.0 301.49 L631.0 301.24 L632.0 300.99 L633.0 300.74 L634.0 300.49 L635.0 300.24 L636.0 299.99 L637.0 299.74 L638.0 299.48 L639.0 299.23 L640.0 298.98 L641.0 298.73 L642.0 298.48 L643.0 298.23 L644.0 297.98 L645.0 297.73 L646.0 297.49 L647.0 297.24 L648.0 297.00 L649.0 296.76 L650.0 296.51 L651.0 296.27 L652.0 296.02 L653.0 295.78 L654.0 295.53 L655.0 295.28 L656.0 295.03 L657.0 294.78 L658.0 294.53 L659.0 294.27 L660.0 294.02 L661.0 293.76 L662.0 293.51 L663.0 293.25 L664.0 292.99 L665.0 292.73 L666.0 292.48 L667.0 292.22 L668.0 291.96 L669.0 291.70 L670.0 291.44 L671.0 291.18 L672.0 290.91 L673.0 290.65 L674.0 290.39 L675.0 290.13 L676.0 289.87 L677.0 289.60 L678.0 289.34 L679.0 289.08 L680.0 288.82 L681.0 288.56 L682.0 288.30 L683.0 288.03 L684.0 287.77 L685.0 287.51 L686.0 287.25 L687.0 286.99 L688.0 286.73 L689.0 286.47 L690.0 286.21 L691.0 285.96 L692.0 285.70 L692.0 384.8 Z" fill="#53b8ef" fill-opacity="0.8"/>
<path d="M386.0 304.30 L387.0 303.72 L388.0 303.13 L389.0 302.54 L390.0 301.95 L391.0 301.36 L392.0 300.76 L393.0 300.17 L394.0 299.58 L395.0 298.98 L396.0 298.39 L397.0 297.80 L398.0 297.21 L399.0 296.62 L400.0 296.03 L401.0 295.44 L402.0 294.86 L403.0 294.27 L404.0 293.69 L405.0 293.12 L406.0 292.55 L407.0 291.98 L408.0 291.41 L409.0 290.85 L410.0 290.30 L411.0 289.74 L412.0 289.16 L413.0 288.57 L414.0 287.97 L415.0 287.37 L416.0 286.76 L417.0 286.16 L418.0 285.56 L419.0 284.97 L420.0 284.40 L421.0 283.84 L422.0 283.30 L423.0 282.78 L424.0 282.30 L425.0 281.84 L426.0 281.42 L427.0 281.04 L428.0 280.70 L429.0 280.40 L430.0 280.14 L431.0 279.91 L432.0 279.70 L433.0 279.51 L434.0 279.34 L435.0 279.19 L436.0 279.06 L437.0 278.95 L438.0 278.85 L439.0 278.77 L440.0 278.71 L441.0 278.65 L442.0 278.61 L443.0 278.57 L444.0 278.54 L445.0 278.53 L446.0 278.51 L447.0 278.51 L448.0 278.50 L449.0 278.50 L450.0 278.50 L451.0 278.52 L452.0 278.56 L453.0 278.64 L454.0 278.74 L455.0 278.87 L456.0 279.02 L457.0 279.19 L458.0 279.38 L459.0 279.58 L460.0 279.81 L461.0 280.05 L462.0 280.29 L463.0 280.55 L464.0 280.82 L465.0 281.10 L466.0 281.38 L467.0 281.66 L468.0 281.94 L469.0 282.22 L470.0 282.50 L471.0 282.77 L472.0 283.04 L473.0 283.30 L474.0 283.56 L475.0 283.82 L476.0 284.10 L477.0 284.37 L478.0 284.66 L479.0 284.95 L480.0 285.25 L481.0 285.55 L482.0 285.85 L483.0 286.16 L484.0 286.47 L485.0 286.79 L486.0 287.11 L487.0 287.43 L488.0 287.76 L489.0 288.09 L490.0 288.41 L491.0 288.74 L492.0 289.07 L493.0 289.41 L494.0 289.74 L495.0 290.07 L496.0 290.40 L497.0 290.73 L498.0 291.05 L499.0 291.38 L500.0 291.70 L501.0 292.02 L502.0 292.34 L503.0 292.66 L504.0 292.97 L505.0 293.27 L506.0 293.58 L507.0 293.87 L508.0 294.17 L509.0 294.45 L510.0 294.73 L511.0 295.01 L512.0 295.28 L513.0 295.54 L514.0 295.79 L515.0 296.03 L516.0 296.27 L517.0 296.50 L518.0 296.72 L519.0 296.93 L520.0 297.14 L521.0 297.34 L522.0 297.54 L523.0 297.73 L524.0 297.92 L525.0 298.10 L526.0 298.27 L527.0 298.44 L528.0 298.61 L529.0 298.77 L530.0 298.93 L531.0 299.08 L532.0 299.23 L533.0 299.38 L534.0 299.52 L535.0 299.66 L536.0 299.80 L537.0 299.94 L538.0 300.07 L539.0 300.20 L540.0 300.33 L541.0 300.46 L542.0 300.58 L543.0 300.71 L544.0 300.83 L545.0 300.96 L546.0 301.08 L547.0 301.20 L548.0 301.32 L549.0 301.44 L550.0 301.57 L551.0 301.69 L552.0 301.81 L553.0 301.94 L554.0 302.07 L555.0 302.19 L556.0 302.32 L557.0 302.45 L558.0 302.59 L559.0 302.72 L560.0 302.86 L561.0 303.00 L562.0 303.15 L563.0 303.30 L564.0 303.46 L565.0 303.62 L566.0 303.79 L567.0 303.96 L568.0 304.14 L569.0 304.32 L570.0 304.50 L571.0 304.68 L572.0 304.86 L573.0 305.04 L574.0 305.22 L575.0 305.40 L576.0 305.58 L577.0 305.75 L578.0 305.92 L579.0 306.08 L580.0 306.24 L581.0 306.40 L582.0 306.54 L583.0 306.68 L584.0 306.81 L585.0 306.93 L586.0 307.04 L587.0 307.14 L588.0 307.23 L589.0 307.31 L590.0 307.38 L591.0 307.43 L592.0 307.47 L593.0 307.49 L594.0 307.50 L595.0 307.49 L596.0 307.47 L597.0 307.44 L598.0 307.40 L599.0 307.34 L600.0 307.27 L601.0 307.18 L602.0 307.08 L603.0 306.97 L604.0 306.84 L605.0 306.70 L606.0 306.55 L607.0 306.39 L608.0 306.22 L609.0 306.05 L610.0 305.88 L611.0 305.70 L612.0 305.51 L613.0 305.32 L614.0 305.12 L615.0 304.92 L616.0 304.72 L617.0 304.51 L618.0 304.29 L619.0 304.08 L620.0 303.86 L621.0 303.63 L622.0 303.40 L623.0 303.17 L624.0 302.94 L625.0 302.70 L626.0 302.46 L627.0 302.22 L628.0 301.98 L629.0 301.74 L630.0 301.49 L631.0 301.24 L632.0 300.99 L633.0 300.74 L634.0 300.49 L635.0 300.24 L636.0 299.99 L637.0 299.74 L638.0 299.48 L639.0 299.23 L640.0 298.98 L641.0 298.73 L642.0 298.48 L643.0 298.23 L644.0 297.98 L645.0 297.73 L646.0 297.49 L647.0 297.24 L648.0 297.00 L649.0 296.76 L650.0 296.51 L651.0 296.27 L652.0 296.02 L653.0 295.78 L654.0 295.53 L655.0 295.28 L656.0 295.03 L657.0 294.78 L658.0 294.53 L659.0 294.27 L660.0 294.02 L661.0 293.76 L662.0 293.51 L663.0 293.25 L664.0 292.99 L665.0 292.73 L666.0 292.48 L667.0 292.22 L668.0 291.96 L669.0 291.70 L670.0 291.44 L671.0 291.18 L672.0 290.91 L673.0 290.65 L674.0 290.39 L675.0 290.13 L676.0 289.87 L677.0 289.60 L678.0 289.34 L679.0 289.08 L680.0 288.82 L681.0 288.56 L682.0 288.30 L683.0 288.03 L684.0 287.77 L685.0 287.51 L686.0 287.25 L687.0 286.99 L688.0 286.73 L689.0 286.47 L690.0 286.21 L691.0 285.96 L692.0 285.70" fill="none" stroke="rgba(40,40,60,0.22)" stroke-width="0.6"/>
<path d="M386.0 384.8 L386.0 326.30 L387.0 326.30 L388.0 326.30 L389.0 326.30 L390.0 326.30 L391.0 326.30 L392.0 326.30 L393.0 326.30 L394.0 326.30 L395.0 326.30 L396.0 326.30 L397.0 326.30 L398.0 326.30 L399.0 326.30 L400.0 326.30 L401.0 326.30 L402.0 326.30 L403.0 326.30 L404.0 326.30 L405.0 326.30 L406.0 326.30 L407.0 326.30 L408.0 326.30 L409.0 326.30 L410.0 326.30 L411.0 326.30 L412.0 326.30 L413.0 326.30 L414.0 326.30 L415.0 326.30 L416.0 326.30 L417.0 326.30 L418.0 326.30 L419.0 326.30 L420.0 326.30 L421.0 326.30 L422.0 326.30 L423.0 326.30 L424.0 326.30 L425.0 326.30 L426.0 326.30 L427.0 326.30 L428.0 326.30 L429.0 326.30 L430.0 326.29 L431.0 326.28 L432.0 326.25 L433.0 326.21 L434.0 326.17 L435.0 326.11 L436.0 326.05 L437.0 325.98 L438.0 325.90 L439.0 325.81 L440.0 325.72 L441.0 325.62 L442.0 325.52 L443.0 325.41 L444.0 325.30 L445.0 325.19 L446.0 325.07 L447.0 324.95 L448.0 324.83 L449.0 324.70 L450.0 324.58 L451.0 324.45 L452.0 324.32 L453.0 324.20 L454.0 324.07 L455.0 323.95 L456.0 323.83 L457.0 323.71 L458.0 323.60 L459.0 323.49 L460.0 323.38 L461.0 323.28 L462.0 323.18 L463.0 323.09 L464.0 323.00 L465.0 322.92 L466.0 322.85 L467.0 322.79 L468.0 322.73 L469.0 322.69 L470.0 322.65 L471.0 322.62 L472.0 322.61 L473.0 322.60 L474.0 322.60 L475.0 322.61 L476.0 322.62 L477.0 322.64 L478.0 322.66 L479.0 322.69 L480.0 322.72 L481.0 322.76 L482.0 322.80 L483.0 322.84 L484.0 322.88 L485.0 322.93 L486.0 322.98 L487.0 323.03 L488.0 323.09 L489.0 323.15 L490.0 323.20 L491.0 323.26 L492.0 323.33 L493.0 323.39 L494.0 323.45 L495.0 323.51 L496.0 323.58 L497.0 323.64 L498.0 323.70 L499.0 323.76 L500.0 323.82 L501.0 323.88 L502.0 323.94 L503.0 324.00 L504.0 324.06 L505.0 324.11 L506.0 324.16 L507.0 324.21 L508.0 324.26 L509.0 324.30 L510.0 324.34 L511.0 324.37 L512.0 324.41 L513.0 324.43 L514.0 324.46 L515.0 324.48 L516.0 324.49 L517.0 324.50 L518.0 324.51 L519.0 324.51 L520.0 324.52 L521.0 324.52 L522.0 324.53 L523.0 324.54 L524.0 324.54 L525.0 324.55 L526.0 324.55 L527.0 324.55 L528.0 324.56 L529.0 324.56 L530.0 324.57 L531.0 324.57 L532.0 324.57 L533.0 324.57 L534.0 324.58 L535.0 324.58 L536.0 324.58 L537.0 324.58 L538.0 324.59 L539.0 324.59 L540.0 324.59 L541.0 324.59 L542.0 324.59 L543.0 324.59 L544.0 324.59 L545.0 324.60 L546.0 324.60 L547.0 324.60 L548.0 324.60 L549.0 324.60 L550.0 324.60 L551.0 324.60 L552.0 324.60 L553.0 324.60 L554.0 324.60 L555.0 324.60 L556.0 324.60 L557.0 324.60 L558.0 324.60 L559.0 324.60 L560.0 324.60 L561.0 324.60 L562.0 324.60 L563.0 324.59 L564.0 324.59 L565.0 324.58 L566.0 324.56 L567.0 324.55 L568.0 324.53 L569.0 324.51 L570.0 324.49 L571.0 324.46 L572.0 324.43 L573.0 324.40 L574.0 324.37 L575.0 324.34 L576.0 324.30 L577.0 324.26 L578.0 324.22 L579.0 324.18 L580.0 324.14 L581.0 324.09 L582.0 324.05 L583.0 324.00 L584.0 323.95 L585.0 323.90 L586.0 323.85 L587.0 323.80 L588.0 323.74 L589.0 323.69 L590.0 323.63 L591.0 323.57 L592.0 323.52 L593.0 323.46 L594.0 323.40 L595.0 323.34 L596.0 323.28 L597.0 323.21 L598.0 323.14 L599.0 323.06 L600.0 322.98 L601.0 322.89 L602.0 322.80 L603.0 322.71 L604.0 322.61 L605.0 322.50 L606.0 322.39 L607.0 322.27 L608.0 322.15 L609.0 322.03 L610.0 321.90 L611.0 321.77 L612.0 321.64 L613.0 321.50 L614.0 321.36 L615.0 321.22 L616.0 321.08 L617.0 320.93 L618.0 320.78 L619.0 320.64 L620.0 320.48 L621.0 320.33 L622.0 320.18 L623.0 320.03 L624.0 319.87 L625.0 319.72 L626.0 319.57 L627.0 319.41 L628.0 319.26 L629.0 319.11 L630.0 318.95 L631.0 318.80 L632.0 318.65 L633.0 318.50 L634.0 318.36 L635.0 318.21 L636.0 318.07 L637.0 317.93 L638.0 317.79 L639.0 317.66 L640.0 317.52 L641.0 317.40 L642.0 317.27 L643.0 317.15 L644.0 317.03 L645.0 316.92 L646.0 316.81 L647.0 316.70 L648.0 316.60 L649.0 316.50 L650.0 316.41 L651.0 316.32 L652.0 316.23 L653.0 316.15 L654.0 316.07 L655.0 315.99 L656.0 315.92 L657.0 315.85 L658.0 315.78 L659.0 315.71 L660.0 315.64 L661.0 315.58 L662.0 315.52 L663.0 315.46 L664.0 315.40 L665.0 315.35 L666.0 315.29 L667.0 315.24 L668.0 315.19 L669.0 315.13 L670.0 315.09 L671.0 315.04 L672.0 314.99 L673.0 314.94 L674.0 314.89 L675.0 314.85 L676.0 314.80 L677.0 314.75 L678.0 314.71 L679.0 314.66 L680.0 314.62 L681.0 314.57 L682.0 314.52 L683.0 314.47 L684.0 314.43 L685.0 314.38 L686.0 314.33 L687.0 314.28 L688.0 314.22 L689.0 314.17 L690.0 314.11 L691.0 314.06 L692.0 314.00 L692.0 384.8 Z" fill="#4cb2b2" fill-opacity="0.8"/>
<path d="M386.0 326.30 L387.0 326.30 L388.0 326.30 L389.0 326.30 L390.0 326.30 L391.0 326.30 L392.0 326.30 L393.0 326.30 L394.0 326.30 L395.0 326.30 L396.0 326.30 L397.0 326.30 L398.0 326.30 L399.0 326.30 L400.0 326.30 L401.0 326.30 L402.0 326.30 L403.0 326.30 L404.0 326.30 L405.0 326.30 L406.0 326.30 L407.0 326.30 L408.0 326.30 L409.0 326.30 L410.0 326.30 L411.0 326.30 L412.0 326.30 L413.0 326.30 L414.0 326.30 L415.0 326.30 L416.0 326.30 L417.0 326.30 L418.0 326.30 L419.0 326.30 L420.0 326.30 L421.0 326.30 L422.0 326.30 L423.0 326.30 L424.0 326.30 L425.0 326.30 L426.0 326.30 L427.0 326.30 L428.0 326.30 L429.0 326.30 L430.0 326.29 L431.0 326.28 L432.0 326.25 L433.0 326.21 L434.0 326.17 L435.0 326.11 L436.0 326.05 L437.0 325.98 L438.0 325.90 L439.0 325.81 L440.0 325.72 L441.0 325.62 L442.0 325.52 L443.0 325.41 L444.0 325.30 L445.0 325.19 L446.0 325.07 L447.0 324.95 L448.0 324.83 L449.0 324.70 L450.0 324.58 L451.0 324.45 L452.0 324.32 L453.0 324.20 L454.0 324.07 L455.0 323.95 L456.0 323.83 L457.0 323.71 L458.0 323.60 L459.0 323.49 L460.0 323.38 L461.0 323.28 L462.0 323.18 L463.0 323.09 L464.0 323.00 L465.0 322.92 L466.0 322.85 L467.0 322.79 L468.0 322.73 L469.0 322.69 L470.0 322.65 L471.0 322.62 L472.0 322.61 L473.0 322.60 L474.0 322.60 L475.0 322.61 L476.0 322.62 L477.0 322.64 L478.0 322.66 L479.0 322.69 L480.0 322.72 L481.0 322.76 L482.0 322.80 L483.0 322.84 L484.0 322.88 L485.0 322.93 L486.0 322.98 L487.0 323.03 L488.0 323.09 L489.0 323.15 L490.0 323.20 L491.0 323.26 L492.0 323.33 L493.0 323.39 L494.0 323.45 L495.0 323.51 L496.0 323.58 L497.0 323.64 L498.0 323.70 L499.0 323.76 L500.0 323.82 L501.0 323.88 L502.0 323.94 L503.0 324.00 L504.0 324.06 L505.0 324.11 L506.0 324.16 L507.0 324.21 L508.0 324.26 L509.0 324.30 L510.0 324.34 L511.0 324.37 L512.0 324.41 L513.0 324.43 L514.0 324.46 L515.0 324.48 L516.0 324.49 L517.0 324.50 L518.0 324.51 L519.0 324.51 L520.0 324.52 L521.0 324.52 L522.0 324.53 L523.0 324.54 L524.0 324.54 L525.0 324.55 L526.0 324.55 L527.0 324.55 L528.0 324.56 L529.0 324.56 L530.0 324.57 L531.0 324.57 L532.0 324.57 L533.0 324.57 L534.0 324.58 L535.0 324.58 L536.0 324.58 L537.0 324.58 L538.0 324.59 L539.0 324.59 L540.0 324.59 L541.0 324.59 L542.0 324.59 L543.0 324.59 L544.0 324.59 L545.0 324.60 L546.0 324.60 L547.0 324.60 L548.0 324.60 L549.0 324.60 L550.0 324.60 L551.0 324.60 L552.0 324.60 L553.0 324.60 L554.0 324.60 L555.0 324.60 L556.0 324.60 L557.0 324.60 L558.0 324.60 L559.0 324.60 L560.0 324.60 L561.0 324.60 L562.0 324.60 L563.0 324.59 L564.0 324.59 L565.0 324.58 L566.0 324.56 L567.0 324.55 L568.0 324.53 L569.0 324.51 L570.0 324.49 L571.0 324.46 L572.0 324.43 L573.0 324.40 L574.0 324.37 L575.0 324.34 L576.0 324.30 L577.0 324.26 L578.0 324.22 L579.0 324.18 L580.0 324.14 L581.0 324.09 L582.0 324.05 L583.0 324.00 L584.0 323.95 L585.0 323.90 L586.0 323.85 L587.0 323.80 L588.0 323.74 L589.0 323.69 L590.0 323.63 L591.0 323.57 L592.0 323.52 L593.0 323.46 L594.0 323.40 L595.0 323.34 L596.0 323.28 L597.0 323.21 L598.0 323.14 L599.0 323.06 L600.0 322.98 L601.0 322.89 L602.0 322.80 L603.0 322.71 L604.0 322.61 L605.0 322.50 L606.0 322.39 L607.0 322.27 L608.0 322.15 L609.0 322.03 L610.0 321.90 L611.0 321.77 L612.0 321.64 L613.0 321.50 L614.0 321.36 L615.0 321.22 L616.0 321.08 L617.0 320.93 L618.0 320.78 L619.0 320.64 L620.0 320.48 L621.0 320.33 L622.0 320.18 L623.0 320.03 L624.0 319.87 L625.0 319.72 L626.0 319.57 L627.0 319.41 L628.0 319.26 L629.0 319.11 L630.0 318.95 L631.0 318.80 L632.0 318.65 L633.0 318.50 L634.0 318.36 L635.0 318.21 L636.0 318.07 L637.0 317.93 L638.0 317.79 L639.0 317.66 L640.0 317.52 L641.0 317.40 L642.0 317.27 L643.0 317.15 L644.0 317.03 L645.0 316.92 L646.0 316.81 L647.0 316.70 L648.0 316.60 L649.0 316.50 L650.0 316.41 L651.0 316.32 L652.0 316.23 L653.0 316.15 L654.0 316.07 L655.0 315.99 L656.0 315.92 L657.0 315.85 L658.0 315.78 L659.0 315.71 L660.0 315.64 L661.0 315.58 L662.0 315.52 L663.0 315.46 L664.0 315.40 L665.0 315.35 L666.0 315.29 L667.0 315.24 L668.0 315.19 L669.0 315.13 L670.0 315.09 L671.0 315.04 L672.0 314.99 L673.0 314.94 L674.0 314.89 L675.0 314.85 L676.0 314.80 L677.0 314.75 L678.0 314.71 L679.0 314.66 L680.0 314.62 L681.0 314.57 L682.0 314.52 L683.0 314.47 L684.0 314.43 L685.0 314.38 L686.0 314.33 L687.0 314.28 L688.0 314.22 L689.0 314.17 L690.0 314.11 L691.0 314.06 L692.0 314.00" fill="none" stroke="rgba(40,40,60,0.22)" stroke-width="0.6"/>
<path d="M386.0 384.8 L386.0 356.30 L387.0 356.26 L388.0 356.22 L389.0 356.18 L390.0 356.14 L391.0 356.10 L392.0 356.06 L393.0 356.03 L394.0 355.99 L395.0 355.95 L396.0 355.91 L397.0 355.87 L398.0 355.84 L399.0 355.80 L400.0 355.76 L401.0 355.72 L402.0 355.68 L403.0 355.65 L404.0 355.61 L405.0 355.57 L406.0 355.53 L407.0 355.49 L408.0 355.45 L409.0 355.41 L410.0 355.36 L411.0 355.32 L412.0 355.28 L413.0 355.23 L414.0 355.19 L415.0 355.14 L416.0 355.10 L417.0 355.05 L418.0 355.00 L419.0 354.95 L420.0 354.89 L421.0 354.83 L422.0 354.76 L423.0 354.69 L424.0 354.62 L425.0 354.55 L426.0 354.47 L427.0 354.40 L428.0 354.32 L429.0 354.24 L430.0 354.17 L431.0 354.09 L432.0 354.02 L433.0 353.95 L434.0 353.88 L435.0 353.81 L436.0 353.75 L437.0 353.70 L438.0 353.65 L439.0 353.61 L440.0 353.57 L441.0 353.54 L442.0 353.52 L443.0 353.50 L444.0 353.50 L445.0 353.51 L446.0 353.53 L447.0 353.57 L448.0 353.62 L449.0 353.68 L450.0 353.75 L451.0 353.83 L452.0 353.93 L453.0 354.03 L454.0 354.13 L455.0 354.25 L456.0 354.36 L457.0 354.49 L458.0 354.61 L459.0 354.74 L460.0 354.87 L461.0 355.00 L462.0 355.12 L463.0 355.25 L464.0 355.37 L465.0 355.49 L466.0 355.61 L467.0 355.72 L468.0 355.82 L469.0 355.91 L470.0 356.00 L471.0 356.08 L472.0 356.17 L473.0 356.25 L474.0 356.34 L475.0 356.43 L476.0 356.52 L477.0 356.61 L478.0 356.70 L479.0 356.79 L480.0 356.88 L481.0 356.97 L482.0 357.06 L483.0 357.14 L484.0 357.22 L485.0 357.31 L486.0 357.38 L487.0 357.46 L488.0 357.53 L489.0 357.60 L490.0 357.66 L491.0 357.72 L492.0 357.78 L493.0 357.83 L494.0 357.87 L495.0 357.91 L496.0 357.94 L497.0 357.97 L498.0 357.98 L499.0 358.00 L500.0 358.00 L501.0 357.99 L502.0 357.96 L503.0 357.92 L504.0 357.85 L505.0 357.77 L506.0 357.68 L507.0 357.57 L508.0 357.45 L509.0 357.31 L510.0 357.16 L511.0 357.00 L512.0 356.83 L513.0 356.65 L514.0 356.47 L515.0 356.27 L516.0 356.07 L517.0 355.86 L518.0 355.65 L519.0 355.43 L520.0 355.21 L521.0 354.99 L522.0 354.76 L523.0 354.54 L524.0 354.31 L525.0 354.09 L526.0 353.86 L527.0 353.64 L528.0 353.42 L529.0 353.21 L530.0 353.00 L531.0 352.78 L532.0 352.55 L533.0 352.30 L534.0 352.03 L535.0 351.75 L536.0 351.45 L537.0 351.15 L538.0 350.84 L539.0 350.52 L540.0 350.19 L541.0 349.87 L542.0 349.54 L543.0 349.21 L544.0 348.88 L545.0 348.56 L546.0 348.24 L547.0 347.94 L548.0 347.64 L549.0 347.35 L550.0 347.07 L551.0 346.81 L552.0 346.57 L553.0 346.34 L554.0 346.14 L555.0 345.95 L556.0 345.79 L557.0 345.65 L558.0 345.55 L559.0 345.47 L560.0 345.42 L561.0 345.40 L562.0 345.41 L563.0 345.44 L564.0 345.50 L565.0 345.57 L566.0 345.65 L567.0 345.75 L568.0 345.87 L569.0 345.99 L570.0 346.11 L571.0 346.25 L572.0 346.38 L573.0 346.52 L574.0 346.65 L575.0 346.79 L576.0 346.91 L577.0 347.03 L578.0 347.15 L579.0 347.25 L580.0 347.33 L581.0 347.40 L582.0 347.46 L583.0 347.49 L584.0 347.50 L585.0 347.50 L586.0 347.49 L587.0 347.48 L588.0 347.46 L589.0 347.43 L590.0 347.39 L591.0 347.33 L592.0 347.25 L593.0 347.15 L594.0 347.03 L595.0 346.88 L596.0 346.71 L597.0 346.50 L598.0 346.27 L599.0 346.04 L600.0 345.79 L601.0 345.53 L602.0 345.25 L603.0 344.96 L604.0 344.64 L605.0 344.30 L606.0 343.93 L607.0 343.53 L608.0 343.10 L609.0 342.63 L610.0 342.13 L611.0 341.58 L612.0 341.00 L613.0 340.37 L614.0 339.70 L615.0 338.99 L616.0 338.25 L617.0 337.46 L618.0 336.64 L619.0 335.79 L620.0 334.90 L621.0 333.98 L622.0 333.02 L623.0 332.04 L624.0 331.04 L625.0 330.00 L626.0 328.88 L627.0 327.63 L628.0 326.31 L629.0 324.95 L630.0 323.60 L631.0 322.30 L632.0 321.08 L633.0 320.00 L634.0 319.01 L635.0 318.05 L636.0 317.12 L637.0 316.22 L638.0 315.35 L639.0 314.51 L640.0 313.71 L641.0 312.95 L642.0 312.22 L643.0 311.53 L644.0 310.88 L645.0 310.27 L646.0 309.70 L647.0 309.18 L648.0 308.70 L649.0 308.29 L650.0 307.97 L651.0 307.73 L652.0 307.56 L653.0 307.43 L654.0 307.36 L655.0 307.32 L656.0 307.30 L657.0 307.30 L658.0 307.32 L659.0 307.37 L660.0 307.45 L661.0 307.56 L662.0 307.71 L663.0 307.89 L664.0 308.10 L665.0 308.34 L666.0 308.61 L667.0 308.91 L668.0 309.25 L669.0 309.61 L670.0 310.00 L671.0 310.42 L672.0 310.88 L673.0 311.37 L674.0 311.89 L675.0 312.43 L676.0 313.00 L677.0 313.59 L678.0 314.19 L679.0 314.82 L680.0 315.46 L681.0 316.10 L682.0 316.76 L683.0 317.43 L684.0 318.10 L685.0 318.77 L686.0 319.44 L687.0 320.10 L688.0 320.76 L689.0 321.42 L690.0 322.06 L691.0 322.69 L692.0 323.30 L692.0 384.8 Z" fill="#9cd182" fill-opacity="0.8"/>
<path d="M386.0 356.30 L387.0 356.26 L388.0 356.22 L389.0 356.18 L390.0 356.14 L391.0 356.10 L392.0 356.06 L393.0 356.03 L394.0 355.99 L395.0 355.95 L396.0 355.91 L397.0 355.87 L398.0 355.84 L399.0 355.80 L400.0 355.76 L401.0 355.72 L402.0 355.68 L403.0 355.65 L404.0 355.61 L405.0 355.57 L406.0 355.53 L407.0 355.49 L408.0 355.45 L409.0 355.41 L410.0 355.36 L411.0 355.32 L412.0 355.28 L413.0 355.23 L414.0 355.19 L415.0 355.14 L416.0 355.10 L417.0 355.05 L418.0 355.00 L419.0 354.95 L420.0 354.89 L421.0 354.83 L422.0 354.76 L423.0 354.69 L424.0 354.62 L425.0 354.55 L426.0 354.47 L427.0 354.40 L428.0 354.32 L429.0 354.24 L430.0 354.17 L431.0 354.09 L432.0 354.02 L433.0 353.95 L434.0 353.88 L435.0 353.81 L436.0 353.75 L437.0 353.70 L438.0 353.65 L439.0 353.61 L440.0 353.57 L441.0 353.54 L442.0 353.52 L443.0 353.50 L444.0 353.50 L445.0 353.51 L446.0 353.53 L447.0 353.57 L448.0 353.62 L449.0 353.68 L450.0 353.75 L451.0 353.83 L452.0 353.93 L453.0 354.03 L454.0 354.13 L455.0 354.25 L456.0 354.36 L457.0 354.49 L458.0 354.61 L459.0 354.74 L460.0 354.87 L461.0 355.00 L462.0 355.12 L463.0 355.25 L464.0 355.37 L465.0 355.49 L466.0 355.61 L467.0 355.72 L468.0 355.82 L469.0 355.91 L470.0 356.00 L471.0 356.08 L472.0 356.17 L473.0 356.25 L474.0 356.34 L475.0 356.43 L476.0 356.52 L477.0 356.61 L478.0 356.70 L479.0 356.79 L480.0 356.88 L481.0 356.97 L482.0 357.06 L483.0 357.14 L484.0 357.22 L485.0 357.31 L486.0 357.38 L487.0 357.46 L488.0 357.53 L489.0 357.60 L490.0 357.66 L491.0 357.72 L492.0 357.78 L493.0 357.83 L494.0 357.87 L495.0 357.91 L496.0 357.94 L497.0 357.97 L498.0 357.98 L499.0 358.00 L500.0 358.00 L501.0 357.99 L502.0 357.96 L503.0 357.92 L504.0 357.85 L505.0 357.77 L506.0 357.68 L507.0 357.57 L508.0 357.45 L509.0 357.31 L510.0 357.16 L511.0 357.00 L512.0 356.83 L513.0 356.65 L514.0 356.47 L515.0 356.27 L516.0 356.07 L517.0 355.86 L518.0 355.65 L519.0 355.43 L520.0 355.21 L521.0 354.99 L522.0 354.76 L523.0 354.54 L524.0 354.31 L525.0 354.09 L526.0 353.86 L527.0 353.64 L528.0 353.42 L529.0 353.21 L530.0 353.00 L531.0 352.78 L532.0 352.55 L533.0 352.30 L534.0 352.03 L535.0 351.75 L536.0 351.45 L537.0 351.15 L538.0 350.84 L539.0 350.52 L540.0 350.19 L541.0 349.87 L542.0 349.54 L543.0 349.21 L544.0 348.88 L545.0 348.56 L546.0 348.24 L547.0 347.94 L548.0 347.64 L549.0 347.35 L550.0 347.07 L551.0 346.81 L552.0 346.57 L553.0 346.34 L554.0 346.14 L555.0 345.95 L556.0 345.79 L557.0 345.65 L558.0 345.55 L559.0 345.47 L560.0 345.42 L561.0 345.40 L562.0 345.41 L563.0 345.44 L564.0 345.50 L565.0 345.57 L566.0 345.65 L567.0 345.75 L568.0 345.87 L569.0 345.99 L570.0 346.11 L571.0 346.25 L572.0 346.38 L573.0 346.52 L574.0 346.65 L575.0 346.79 L576.0 346.91 L577.0 347.03 L578.0 347.15 L579.0 347.25 L580.0 347.33 L581.0 347.40 L582.0 347.46 L583.0 347.49 L584.0 347.50 L585.0 347.50 L586.0 347.49 L587.0 347.48 L588.0 347.46 L589.0 347.43 L590.0 347.39 L591.0 347.33 L592.0 347.25 L593.0 347.15 L594.0 347.03 L595.0 346.88 L596.0 346.71 L597.0 346.50 L598.0 346.27 L599.0 346.04 L600.0 345.79 L601.0 345.53 L602.0 345.25 L603.0 344.96 L604.0 344.64 L605.0 344.30 L606.0 343.93 L607.0 343.53 L608.0 343.10 L609.0 342.63 L610.0 342.13 L611.0 341.58 L612.0 341.00 L613.0 340.37 L614.0 339.70 L615.0 338.99 L616.0 338.25 L617.0 337.46 L618.0 336.64 L619.0 335.79 L620.0 334.90 L621.0 333.98 L622.0 333.02 L623.0 332.04 L624.0 331.04 L625.0 330.00 L626.0 328.88 L627.0 327.63 L628.0 326.31 L629.0 324.95 L630.0 323.60 L631.0 322.30 L632.0 321.08 L633.0 320.00 L634.0 319.01 L635.0 318.05 L636.0 317.12 L637.0 316.22 L638.0 315.35 L639.0 314.51 L640.0 313.71 L641.0 312.95 L642.0 312.22 L643.0 311.53 L644.0 310.88 L645.0 310.27 L646.0 309.70 L647.0 309.18 L648.0 308.70 L649.0 308.29 L650.0 307.97 L651.0 307.73 L652.0 307.56 L653.0 307.43 L654.0 307.36 L655.0 307.32 L656.0 307.30 L657.0 307.30 L658.0 307.32 L659.0 307.37 L660.0 307.45 L661.0 307.56 L662.0 307.71 L663.0 307.89 L664.0 308.10 L665.0 308.34 L666.0 308.61 L667.0 308.91 L668.0 309.25 L669.0 309.61 L670.0 310.00 L671.0 310.42 L672.0 310.88 L673.0 311.37 L674.0 311.89 L675.0 312.43 L676.0 313.00 L677.0 313.59 L678.0 314.19 L679.0 314.82 L680.0 315.46 L681.0 316.10 L682.0 316.76 L683.0 317.43 L684.0 318.10 L685.0 318.77 L686.0 319.44 L687.0 320.10 L688.0 320.76 L689.0 321.42 L690.0 322.06 L691.0 322.69 L692.0 323.30" fill="none" stroke="rgba(40,40,60,0.22)" stroke-width="0.6"/>
<path d="M386.0 384.8 L386.0 352.10 L387.0 352.22 L388.0 352.35 L389.0 352.48 L390.0 352.61 L391.0 352.74 L392.0 352.87 L393.0 353.00 L394.0 353.14 L395.0 353.27 L396.0 353.41 L397.0 353.54 L398.0 353.68 L399.0 353.82 L400.0 353.95 L401.0 354.08 L402.0 354.22 L403.0 354.35 L404.0 354.48 L405.0 354.61 L406.0 354.73 L407.0 354.86 L408.0 354.98 L409.0 355.10 L410.0 355.21 L411.0 355.33 L412.0 355.43 L413.0 355.54 L414.0 355.64 L415.0 355.74 L416.0 355.83 L417.0 355.92 L418.0 356.00 L419.0 356.08 L420.0 356.15 L421.0 356.23 L422.0 356.29 L423.0 356.36 L424.0 356.42 L425.0 356.48 L426.0 356.53 L427.0 356.58 L428.0 356.63 L429.0 356.68 L430.0 356.72 L431.0 356.76 L432.0 356.80 L433.0 356.83 L434.0 356.86 L435.0 356.89 L436.0 356.91 L437.0 356.93 L438.0 356.95 L439.0 356.97 L440.0 356.98 L441.0 356.99 L442.0 356.99 L443.0 357.00 L444.0 357.00 L445.0 357.00 L446.0 357.00 L447.0 357.00 L448.0 356.99 L449.0 356.99 L450.0 356.98 L451.0 356.98 L452.0 356.97 L453.0 356.96 L454.0 356.95 L455.0 356.93 L456.0 356.92 L457.0 356.90 L458.0 356.89 L459.0 356.87 L460.0 356.84 L461.0 356.82 L462.0 356.79 L463.0 356.77 L464.0 356.73 L465.0 356.70 L466.0 356.67 L467.0 356.63 L468.0 356.59 L469.0 356.55 L470.0 356.50 L471.0 356.45 L472.0 356.39 L473.0 356.33 L474.0 356.27 L475.0 356.20 L476.0 356.13 L477.0 356.05 L478.0 355.98 L479.0 355.90 L480.0 355.81 L481.0 355.73 L482.0 355.65 L483.0 355.56 L484.0 355.48 L485.0 355.39 L486.0 355.31 L487.0 355.23 L488.0 355.15 L489.0 355.07 L490.0 355.00 L491.0 354.93 L492.0 354.86 L493.0 354.79 L494.0 354.72 L495.0 354.65 L496.0 354.58 L497.0 354.51 L498.0 354.44 L499.0 354.37 L500.0 354.30 L501.0 354.23 L502.0 354.16 L503.0 354.09 L504.0 354.03 L505.0 353.96 L506.0 353.90 L507.0 353.83 L508.0 353.76 L509.0 353.70 L510.0 353.63 L511.0 353.56 L512.0 353.50 L513.0 353.43 L514.0 353.36 L515.0 353.29 L516.0 353.21 L517.0 353.14 L518.0 353.06 L519.0 352.98 L520.0 352.90 L521.0 352.82 L522.0 352.73 L523.0 352.64 L524.0 352.55 L525.0 352.46 L526.0 352.36 L527.0 352.26 L528.0 352.17 L529.0 352.07 L530.0 351.97 L531.0 351.87 L532.0 351.77 L533.0 351.67 L534.0 351.57 L535.0 351.47 L536.0 351.38 L537.0 351.28 L538.0 351.18 L539.0 351.09 L540.0 351.00 L541.0 350.91 L542.0 350.82 L543.0 350.73 L544.0 350.64 L545.0 350.55 L546.0 350.46 L547.0 350.37 L548.0 350.29 L549.0 350.20 L550.0 350.11 L551.0 350.03 L552.0 349.94 L553.0 349.86 L554.0 349.77 L555.0 349.69 L556.0 349.61 L557.0 349.53 L558.0 349.45 L559.0 349.38 L560.0 349.30 L561.0 349.22 L562.0 349.15 L563.0 349.07 L564.0 348.99 L565.0 348.91 L566.0 348.84 L567.0 348.76 L568.0 348.68 L569.0 348.61 L570.0 348.54 L571.0 348.47 L572.0 348.40 L573.0 348.34 L574.0 348.27 L575.0 348.22 L576.0 348.16 L577.0 348.12 L578.0 348.07 L579.0 348.03 L580.0 348.00 L581.0 347.97 L582.0 347.95 L583.0 347.92 L584.0 347.90 L585.0 347.88 L586.0 347.87 L587.0 347.85 L588.0 347.84 L589.0 347.83 L590.0 347.83 L591.0 347.82 L592.0 347.81 L593.0 347.81 L594.0 347.81 L595.0 347.80 L596.0 347.80 L597.0 347.80 L598.0 347.80 L599.0 347.80 L600.0 347.80 L601.0 347.80 L602.0 347.82 L603.0 347.84 L604.0 347.87 L605.0 347.90 L606.0 347.94 L607.0 347.99 L608.0 348.05 L609.0 348.11 L610.0 348.18 L611.0 348.25 L612.0 348.33 L613.0 348.42 L614.0 348.50 L615.0 348.60 L616.0 348.69 L617.0 348.79 L618.0 348.90 L619.0 349.00 L620.0 349.11 L621.0 349.22 L622.0 349.34 L623.0 349.45 L624.0 349.57 L625.0 349.69 L626.0 349.81 L627.0 349.93 L628.0 350.05 L629.0 350.16 L630.0 350.28 L631.0 350.40 L632.0 350.52 L633.0 350.64 L634.0 350.75 L635.0 350.86 L636.0 350.97 L637.0 351.08 L638.0 351.18 L639.0 351.28 L640.0 351.38 L641.0 351.48 L642.0 351.57 L643.0 351.65 L644.0 351.73 L645.0 351.81 L646.0 351.88 L647.0 351.94 L648.0 352.00 L649.0 352.05 L650.0 352.10 L651.0 352.15 L652.0 352.20 L653.0 352.24 L654.0 352.28 L655.0 352.32 L656.0 352.36 L657.0 352.39 L658.0 352.42 L659.0 352.45 L660.0 352.48 L661.0 352.50 L662.0 352.53 L663.0 352.55 L664.0 352.57 L665.0 352.59 L666.0 352.61 L667.0 352.63 L668.0 352.65 L669.0 352.66 L670.0 352.68 L671.0 352.69 L672.0 352.71 L673.0 352.72 L674.0 352.73 L675.0 352.74 L676.0 352.76 L677.0 352.77 L678.0 352.78 L679.0 352.79 L680.0 352.80 L681.0 352.82 L682.0 352.83 L683.0 352.84 L684.0 352.86 L685.0 352.87 L686.0 352.89 L687.0 352.90 L688.0 352.92 L689.0 352.94 L690.0 352.96 L691.0 352.98 L692.0 353.00 L692.0 384.8 Z" fill="#f9c254" fill-opacity="0.8"/>
<path d="M386.0 352.10 L387.0 352.22 L388.0 352.35 L389.0 352.48 L390.0 352.61 L391.0 352.74 L392.0 352.87 L393.0 353.00 L394.0 353.14 L395.0 353.27 L396.0 353.41 L397.0 353.54 L398.0 353.68 L399.0 353.82 L400.0 353.95 L401.0 354.08 L402.0 354.22 L403.0 354.35 L404.0 354.48 L405.0 354.61 L406.0 354.73 L407.0 354.86 L408.0 354.98 L409.0 355.10 L410.0 355.21 L411.0 355.33 L412.0 355.43 L413.0 355.54 L414.0 355.64 L415.0 355.74 L416.0 355.83 L417.0 355.92 L418.0 356.00 L419.0 356.08 L420.0 356.15 L421.0 356.23 L422.0 356.29 L423.0 356.36 L424.0 356.42 L425.0 356.48 L426.0 356.53 L427.0 356.58 L428.0 356.63 L429.0 356.68 L430.0 356.72 L431.0 356.76 L432.0 356.80 L433.0 356.83 L434.0 356.86 L435.0 356.89 L436.0 356.91 L437.0 356.93 L438.0 356.95 L439.0 356.97 L440.0 356.98 L441.0 356.99 L442.0 356.99 L443.0 357.00 L444.0 357.00 L445.0 357.00 L446.0 357.00 L447.0 357.00 L448.0 356.99 L449.0 356.99 L450.0 356.98 L451.0 356.98 L452.0 356.97 L453.0 356.96 L454.0 356.95 L455.0 356.93 L456.0 356.92 L457.0 356.90 L458.0 356.89 L459.0 356.87 L460.0 356.84 L461.0 356.82 L462.0 356.79 L463.0 356.77 L464.0 356.73 L465.0 356.70 L466.0 356.67 L467.0 356.63 L468.0 356.59 L469.0 356.55 L470.0 356.50 L471.0 356.45 L472.0 356.39 L473.0 356.33 L474.0 356.27 L475.0 356.20 L476.0 356.13 L477.0 356.05 L478.0 355.98 L479.0 355.90 L480.0 355.81 L481.0 355.73 L482.0 355.65 L483.0 355.56 L484.0 355.48 L485.0 355.39 L486.0 355.31 L487.0 355.23 L488.0 355.15 L489.0 355.07 L490.0 355.00 L491.0 354.93 L492.0 354.86 L493.0 354.79 L494.0 354.72 L495.0 354.65 L496.0 354.58 L497.0 354.51 L498.0 354.44 L499.0 354.37 L500.0 354.30 L501.0 354.23 L502.0 354.16 L503.0 354.09 L504.0 354.03 L505.0 353.96 L506.0 353.90 L507.0 353.83 L508.0 353.76 L509.0 353.70 L510.0 353.63 L511.0 353.56 L512.0 353.50 L513.0 353.43 L514.0 353.36 L515.0 353.29 L516.0 353.21 L517.0 353.14 L518.0 353.06 L519.0 352.98 L520.0 352.90 L521.0 352.82 L522.0 352.73 L523.0 352.64 L524.0 352.55 L525.0 352.46 L526.0 352.36 L527.0 352.26 L528.0 352.17 L529.0 352.07 L530.0 351.97 L531.0 351.87 L532.0 351.77 L533.0 351.67 L534.0 351.57 L535.0 351.47 L536.0 351.38 L537.0 351.28 L538.0 351.18 L539.0 351.09 L540.0 351.00 L541.0 350.91 L542.0 350.82 L543.0 350.73 L544.0 350.64 L545.0 350.55 L546.0 350.46 L547.0 350.37 L548.0 350.29 L549.0 350.20 L550.0 350.11 L551.0 350.03 L552.0 349.94 L553.0 349.86 L554.0 349.77 L555.0 349.69 L556.0 349.61 L557.0 349.53 L558.0 349.45 L559.0 349.38 L560.0 349.30 L561.0 349.22 L562.0 349.15 L563.0 349.07 L564.0 348.99 L565.0 348.91 L566.0 348.84 L567.0 348.76 L568.0 348.68 L569.0 348.61 L570.0 348.54 L571.0 348.47 L572.0 348.40 L573.0 348.34 L574.0 348.27 L575.0 348.22 L576.0 348.16 L577.0 348.12 L578.0 348.07 L579.0 348.03 L580.0 348.00 L581.0 347.97 L582.0 347.95 L583.0 347.92 L584.0 347.90 L585.0 347.88 L586.0 347.87 L587.0 347.85 L588.0 347.84 L589.0 347.83 L590.0 347.83 L591.0 347.82 L592.0 347.81 L593.0 347.81 L594.0 347.81 L595.0 347.80 L596.0 347.80 L597.0 347.80 L598.0 347.80 L599.0 347.80 L600.0 347.80 L601.0 347.80 L602.0 347.82 L603.0 347.84 L604.0 347.87 L605.0 347.90 L606.0 347.94 L607.0 347.99 L608.0 348.05 L609.0 348.11 L610.0 348.18 L611.0 348.25 L612.0 348.33 L613.0 348.42 L614.0 348.50 L615.0 348.60 L616.0 348.69 L617.0 348.79 L618.0 348.90 L619.0 349.00 L620.0 349.11 L621.0 349.22 L622.0 349.34 L623.0 349.45 L624.0 349.57 L625.0 349.69 L626.0 349.81 L627.0 349.93 L628.0 350.05 L629.0 350.16 L630.0 350.28 L631.0 350.40 L632.0 350.52 L633.0 350.64 L634.0 350.75 L635.0 350.86 L636.0 350.97 L637.0 351.08 L638.0 351.18 L639.0 351.28 L640.0 351.38 L641.0 351.48 L642.0 351.57 L643.0 351.65 L644.0 351.73 L645.0 351.81 L646.0 351.88 L647.0 351.94 L648.0 352.00 L649.0 352.05 L650.0 352.10 L651.0 352.15 L652.0 352.20 L653.0 352.24 L654.0 352.28 L655.0 352.32 L656.0 352.36 L657.0 352.39 L658.0 352.42 L659.0 352.45 L660.0 352.48 L661.0 352.50 L662.0 352.53 L663.0 352.55 L664.0 352.57 L665.0 352.59 L666.0 352.61 L667.0 352.63 L668.0 352.65 L669.0 352.66 L670.0 352.68 L671.0 352.69 L672.0 352.71 L673.0 352.72 L674.0 352.73 L675.0 352.74 L676.0 352.76 L677.0 352.77 L678.0 352.78 L679.0 352.79 L680.0 352.80 L681.0 352.82 L682.0 352.83 L683.0 352.84 L684.0 352.86 L685.0 352.87 L686.0 352.89 L687.0 352.90 L688.0 352.92 L689.0 352.94 L690.0 352.96 L691.0 352.98 L692.0 353.00" fill="none" stroke="rgba(40,40,60,0.22)" stroke-width="0.6"/>
<path d="M386.0 384.8 L386.0 359.40 L387.0 359.37 L388.0 359.34 L389.0 359.31 L390.0 359.28 L391.0 359.26 L392.0 359.24 L393.0 359.21 L394.0 359.19 L395.0 359.17 L396.0 359.15 L397.0 359.13 L398.0 359.11 L399.0 359.10 L400.0 359.08 L401.0 359.06 L402.0 359.04 L403.0 359.02 L404.0 359.00 L405.0 358.98 L406.0 358.96 L407.0 358.94 L408.0 358.92 L409.0 358.90 L410.0 358.87 L411.0 358.85 L412.0 358.82 L413.0 358.79 L414.0 358.76 L415.0 358.73 L416.0 358.70 L417.0 358.66 L418.0 358.62 L419.0 358.58 L420.0 358.54 L421.0 358.49 L422.0 358.44 L423.0 358.39 L424.0 358.33 L425.0 358.27 L426.0 358.21 L427.0 358.14 L428.0 358.07 L429.0 358.00 L430.0 357.92 L431.0 357.83 L432.0 357.73 L433.0 357.62 L434.0 357.51 L435.0 357.39 L436.0 357.27 L437.0 357.14 L438.0 357.01 L439.0 356.87 L440.0 356.74 L441.0 356.60 L442.0 356.47 L443.0 356.33 L444.0 356.20 L445.0 356.07 L446.0 355.95 L447.0 355.83 L448.0 355.71 L449.0 355.60 L450.0 355.50 L451.0 355.40 L452.0 355.30 L453.0 355.20 L454.0 355.09 L455.0 354.99 L456.0 354.89 L457.0 354.78 L458.0 354.68 L459.0 354.58 L460.0 354.48 L461.0 354.38 L462.0 354.29 L463.0 354.20 L464.0 354.12 L465.0 354.03 L466.0 353.96 L467.0 353.89 L468.0 353.83 L469.0 353.77 L470.0 353.72 L471.0 353.68 L472.0 353.64 L473.0 353.62 L474.0 353.61 L475.0 353.60 L476.0 353.60 L477.0 353.62 L478.0 353.64 L479.0 353.68 L480.0 353.72 L481.0 353.77 L482.0 353.82 L483.0 353.89 L484.0 353.96 L485.0 354.04 L486.0 354.12 L487.0 354.21 L488.0 354.30 L489.0 354.40 L490.0 354.50 L491.0 354.61 L492.0 354.74 L493.0 354.88 L494.0 355.04 L495.0 355.21 L496.0 355.38 L497.0 355.57 L498.0 355.76 L499.0 355.95 L500.0 356.15 L501.0 356.35 L502.0 356.55 L503.0 356.75 L504.0 356.95 L505.0 357.14 L506.0 357.33 L507.0 357.50 L508.0 357.67 L509.0 357.83 L510.0 357.97 L511.0 358.10 L512.0 358.22 L513.0 358.32 L514.0 358.39 L515.0 358.45 L516.0 358.49 L517.0 358.50 L518.0 358.49 L519.0 358.47 L520.0 358.43 L521.0 358.37 L522.0 358.31 L523.0 358.23 L524.0 358.14 L525.0 358.04 L526.0 357.93 L527.0 357.81 L528.0 357.69 L529.0 357.56 L530.0 357.42 L531.0 357.28 L532.0 357.14 L533.0 357.00 L534.0 356.85 L535.0 356.70 L536.0 356.56 L537.0 356.41 L538.0 356.27 L539.0 356.13 L540.0 356.00 L541.0 355.87 L542.0 355.73 L543.0 355.60 L544.0 355.46 L545.0 355.32 L546.0 355.18 L547.0 355.03 L548.0 354.89 L549.0 354.74 L550.0 354.59 L551.0 354.44 L552.0 354.28 L553.0 354.13 L554.0 353.97 L555.0 353.81 L556.0 353.64 L557.0 353.48 L558.0 353.31 L559.0 353.14 L560.0 352.97 L561.0 352.80 L562.0 352.62 L563.0 352.43 L564.0 352.23 L565.0 352.03 L566.0 351.82 L567.0 351.60 L568.0 351.38 L569.0 351.16 L570.0 350.94 L571.0 350.71 L572.0 350.49 L573.0 350.27 L574.0 350.05 L575.0 349.84 L576.0 349.63 L577.0 349.43 L578.0 349.23 L579.0 349.05 L580.0 348.87 L581.0 348.71 L582.0 348.56 L583.0 348.42 L584.0 348.30 L585.0 348.19 L586.0 348.09 L587.0 348.00 L588.0 347.92 L589.0 347.85 L590.0 347.79 L591.0 347.74 L592.0 347.69 L593.0 347.65 L594.0 347.61 L595.0 347.59 L596.0 347.56 L597.0 347.54 L598.0 347.53 L599.0 347.52 L600.0 347.51 L601.0 347.51 L602.0 347.50 L603.0 347.50 L604.0 347.50 L605.0 347.50 L606.0 347.50 L607.0 347.51 L608.0 347.52 L609.0 347.53 L610.0 347.55 L611.0 347.57 L612.0 347.60 L613.0 347.64 L614.0 347.67 L615.0 347.71 L616.0 347.76 L617.0 347.81 L618.0 347.87 L619.0 347.93 L620.0 348.00 L621.0 348.08 L622.0 348.16 L623.0 348.26 L624.0 348.37 L625.0 348.48 L626.0 348.60 L627.0 348.73 L628.0 348.86 L629.0 348.99 L630.0 349.13 L631.0 349.27 L632.0 349.42 L633.0 349.56 L634.0 349.70 L635.0 349.84 L636.0 349.97 L637.0 350.10 L638.0 350.23 L639.0 350.35 L640.0 350.46 L641.0 350.57 L642.0 350.67 L643.0 350.75 L644.0 350.83 L645.0 350.89 L646.0 350.94 L647.0 350.98 L648.0 351.00 L649.0 351.01 L650.0 351.03 L651.0 351.04 L652.0 351.05 L653.0 351.06 L654.0 351.07 L655.0 351.08 L656.0 351.09 L657.0 351.10 L658.0 351.11 L659.0 351.11 L660.0 351.12 L661.0 351.13 L662.0 351.13 L663.0 351.14 L664.0 351.14 L665.0 351.15 L666.0 351.15 L667.0 351.16 L668.0 351.16 L669.0 351.17 L670.0 351.17 L671.0 351.17 L672.0 351.17 L673.0 351.18 L674.0 351.18 L675.0 351.18 L676.0 351.18 L677.0 351.18 L678.0 351.19 L679.0 351.19 L680.0 351.19 L681.0 351.19 L682.0 351.19 L683.0 351.19 L684.0 351.19 L685.0 351.19 L686.0 351.19 L687.0 351.20 L688.0 351.20 L689.0 351.20 L690.0 351.20 L691.0 351.20 L692.0 351.20 L692.0 384.8 Z" fill="#f58961" fill-opacity="0.8"/>
<path d="M386.0 359.40 L387.0 359.37 L388.0 359.34 L389.0 359.31 L390.0 359.28 L391.0 359.26 L392.0 359.24 L393.0 359.21 L394.0 359.19 L395.0 359.17 L396.0 359.15 L397.0 359.13 L398.0 359.11 L399.0 359.10 L400.0 359.08 L401.0 359.06 L402.0 359.04 L403.0 359.02 L404.0 359.00 L405.0 358.98 L406.0 358.96 L407.0 358.94 L408.0 358.92 L409.0 358.90 L410.0 358.87 L411.0 358.85 L412.0 358.82 L413.0 358.79 L414.0 358.76 L415.0 358.73 L416.0 358.70 L417.0 358.66 L418.0 358.62 L419.0 358.58 L420.0 358.54 L421.0 358.49 L422.0 358.44 L423.0 358.39 L424.0 358.33 L425.0 358.27 L426.0 358.21 L427.0 358.14 L428.0 358.07 L429.0 358.00 L430.0 357.92 L431.0 357.83 L432.0 357.73 L433.0 357.62 L434.0 357.51 L435.0 357.39 L436.0 357.27 L437.0 357.14 L438.0 357.01 L439.0 356.87 L440.0 356.74 L441.0 356.60 L442.0 356.47 L443.0 356.33 L444.0 356.20 L445.0 356.07 L446.0 355.95 L447.0 355.83 L448.0 355.71 L449.0 355.60 L450.0 355.50 L451.0 355.40 L452.0 355.30 L453.0 355.20 L454.0 355.09 L455.0 354.99 L456.0 354.89 L457.0 354.78 L458.0 354.68 L459.0 354.58 L460.0 354.48 L461.0 354.38 L462.0 354.29 L463.0 354.20 L464.0 354.12 L465.0 354.03 L466.0 353.96 L467.0 353.89 L468.0 353.83 L469.0 353.77 L470.0 353.72 L471.0 353.68 L472.0 353.64 L473.0 353.62 L474.0 353.61 L475.0 353.60 L476.0 353.60 L477.0 353.62 L478.0 353.64 L479.0 353.68 L480.0 353.72 L481.0 353.77 L482.0 353.82 L483.0 353.89 L484.0 353.96 L485.0 354.04 L486.0 354.12 L487.0 354.21 L488.0 354.30 L489.0 354.40 L490.0 354.50 L491.0 354.61 L492.0 354.74 L493.0 354.88 L494.0 355.04 L495.0 355.21 L496.0 355.38 L497.0 355.57 L498.0 355.76 L499.0 355.95 L500.0 356.15 L501.0 356.35 L502.0 356.55 L503.0 356.75 L504.0 356.95 L505.0 357.14 L506.0 357.33 L507.0 357.50 L508.0 357.67 L509.0 357.83 L510.0 357.97 L511.0 358.10 L512.0 358.22 L513.0 358.32 L514.0 358.39 L515.0 358.45 L516.0 358.49 L517.0 358.50 L518.0 358.49 L519.0 358.47 L520.0 358.43 L521.0 358.37 L522.0 358.31 L523.0 358.23 L524.0 358.14 L525.0 358.04 L526.0 357.93 L527.0 357.81 L528.0 357.69 L529.0 357.56 L530.0 357.42 L531.0 357.28 L532.0 357.14 L533.0 357.00 L534.0 356.85 L535.0 356.70 L536.0 356.56 L537.0 356.41 L538.0 356.27 L539.0 356.13 L540.0 356.00 L541.0 355.87 L542.0 355.73 L543.0 355.60 L544.0 355.46 L545.0 355.32 L546.0 355.18 L547.0 355.03 L548.0 354.89 L549.0 354.74 L550.0 354.59 L551.0 354.44 L552.0 354.28 L553.0 354.13 L554.0 353.97 L555.0 353.81 L556.0 353.64 L557.0 353.48 L558.0 353.31 L559.0 353.14 L560.0 352.97 L561.0 352.80 L562.0 352.62 L563.0 352.43 L564.0 352.23 L565.0 352.03 L566.0 351.82 L567.0 351.60 L568.0 351.38 L569.0 351.16 L570.0 350.94 L571.0 350.71 L572.0 350.49 L573.0 350.27 L574.0 350.05 L575.0 349.84 L576.0 349.63 L577.0 349.43 L578.0 349.23 L579.0 349.05 L580.0 348.87 L581.0 348.71 L582.0 348.56 L583.0 348.42 L584.0 348.30 L585.0 348.19 L586.0 348.09 L587.0 348.00 L588.0 347.92 L589.0 347.85 L590.0 347.79 L591.0 347.74 L592.0 347.69 L593.0 347.65 L594.0 347.61 L595.0 347.59 L596.0 347.56 L597.0 347.54 L598.0 347.53 L599.0 347.52 L600.0 347.51 L601.0 347.51 L602.0 347.50 L603.0 347.50 L604.0 347.50 L605.0 347.50 L606.0 347.50 L607.0 347.51 L608.0 347.52 L609.0 347.53 L610.0 347.55 L611.0 347.57 L612.0 347.60 L613.0 347.64 L614.0 347.67 L615.0 347.71 L616.0 347.76 L617.0 347.81 L618.0 347.87 L619.0 347.93 L620.0 348.00 L621.0 348.08 L622.0 348.16 L623.0 348.26 L624.0 348.37 L625.0 348.48 L626.0 348.60 L627.0 348.73 L628.0 348.86 L629.0 348.99 L630.0 349.13 L631.0 349.27 L632.0 349.42 L633.0 349.56 L634.0 349.70 L635.0 349.84 L636.0 349.97 L637.0 350.10 L638.0 350.23 L639.0 350.35 L640.0 350.46 L641.0 350.57 L642.0 350.67 L643.0 350.75 L644.0 350.83 L645.0 350.89 L646.0 350.94 L647.0 350.98 L648.0 351.00 L649.0 351.01 L650.0 351.03 L651.0 351.04 L652.0 351.05 L653.0 351.06 L654.0 351.07 L655.0 351.08 L656.0 351.09 L657.0 351.10 L658.0 351.11 L659.0 351.11 L660.0 351.12 L661.0 351.13 L662.0 351.13 L663.0 351.14 L664.0 351.14 L665.0 351.15 L666.0 351.15 L667.0 351.16 L668.0 351.16 L669.0 351.17 L670.0 351.17 L671.0 351.17 L672.0 351.17 L673.0 351.18 L674.0 351.18 L675.0 351.18 L676.0 351.18 L677.0 351.18 L678.0 351.19 L679.0 351.19 L680.0 351.19 L681.0 351.19 L682.0 351.19 L683.0 351.19 L684.0 351.19 L685.0 351.19 L686.0 351.19 L687.0 351.20 L688.0 351.20 L689.0 351.20 L690.0 351.20 L691.0 351.20 L692.0 351.20" fill="none" stroke="rgba(40,40,60,0.22)" stroke-width="0.6"/>
<path d="M386.0 384.8 L386.0 361.50 L387.0 361.46 L388.0 361.42 L389.0 361.37 L390.0 361.33 L391.0 361.28 L392.0 361.23 L393.0 361.19 L394.0 361.14 L395.0 361.09 L396.0 361.03 L397.0 360.98 L398.0 360.93 L399.0 360.88 L400.0 360.82 L401.0 360.77 L402.0 360.72 L403.0 360.67 L404.0 360.62 L405.0 360.56 L406.0 360.51 L407.0 360.46 L408.0 360.41 L409.0 360.36 L410.0 360.32 L411.0 360.27 L412.0 360.23 L413.0 360.18 L414.0 360.14 L415.0 360.10 L416.0 360.06 L417.0 360.03 L418.0 359.99 L419.0 359.96 L420.0 359.93 L421.0 359.91 L422.0 359.88 L423.0 359.86 L424.0 359.84 L425.0 359.83 L426.0 359.82 L427.0 359.81 L428.0 359.80 L429.0 359.80 L430.0 359.80 L431.0 359.80 L432.0 359.80 L433.0 359.80 L434.0 359.80 L435.0 359.80 L436.0 359.80 L437.0 359.80 L438.0 359.80 L439.0 359.80 L440.0 359.80 L441.0 359.80 L442.0 359.80 L443.0 359.80 L444.0 359.80 L445.0 359.80 L446.0 359.80 L447.0 359.80 L448.0 359.80 L449.0 359.80 L450.0 359.80 L451.0 359.80 L452.0 359.80 L453.0 359.80 L454.0 359.80 L455.0 359.80 L456.0 359.80 L457.0 359.80 L458.0 359.80 L459.0 359.80 L460.0 359.80 L461.0 359.80 L462.0 359.80 L463.0 359.80 L464.0 359.80 L465.0 359.80 L466.0 359.80 L467.0 359.80 L468.0 359.80 L469.0 359.80 L470.0 359.80 L471.0 359.80 L472.0 359.80 L473.0 359.80 L474.0 359.80 L475.0 359.80 L476.0 359.80 L477.0 359.80 L478.0 359.80 L479.0 359.80 L480.0 359.80 L481.0 359.80 L482.0 359.80 L483.0 359.80 L484.0 359.80 L485.0 359.81 L486.0 359.82 L487.0 359.85 L488.0 359.88 L489.0 359.92 L490.0 359.97 L491.0 360.03 L492.0 360.10 L493.0 360.17 L494.0 360.24 L495.0 360.32 L496.0 360.40 L497.0 360.49 L498.0 360.57 L499.0 360.66 L500.0 360.75 L501.0 360.85 L502.0 360.94 L503.0 361.03 L504.0 361.11 L505.0 361.20 L506.0 361.28 L507.0 361.36 L508.0 361.43 L509.0 361.50 L510.0 361.57 L511.0 361.63 L512.0 361.68 L513.0 361.72 L514.0 361.75 L515.0 361.78 L516.0 361.79 L517.0 361.80 L518.0 361.80 L519.0 361.80 L520.0 361.79 L521.0 361.78 L522.0 361.77 L523.0 361.76 L524.0 361.75 L525.0 361.73 L526.0 361.71 L527.0 361.69 L528.0 361.67 L529.0 361.65 L530.0 361.63 L531.0 361.60 L532.0 361.58 L533.0 361.55 L534.0 361.52 L535.0 361.49 L536.0 361.46 L537.0 361.43 L538.0 361.40 L539.0 361.37 L540.0 361.34 L541.0 361.30 L542.0 361.27 L543.0 361.24 L544.0 361.20 L545.0 361.17 L546.0 361.14 L547.0 361.10 L548.0 361.07 L549.0 361.04 L550.0 361.01 L551.0 360.97 L552.0 360.94 L553.0 360.91 L554.0 360.88 L555.0 360.85 L556.0 360.82 L557.0 360.80 L558.0 360.77 L559.0 360.75 L560.0 360.72 L561.0 360.70 L562.0 360.68 L563.0 360.66 L564.0 360.64 L565.0 360.62 L566.0 360.60 L567.0 360.58 L568.0 360.57 L569.0 360.55 L570.0 360.53 L571.0 360.52 L572.0 360.50 L573.0 360.49 L574.0 360.47 L575.0 360.46 L576.0 360.44 L577.0 360.42 L578.0 360.41 L579.0 360.39 L580.0 360.38 L581.0 360.36 L582.0 360.35 L583.0 360.33 L584.0 360.31 L585.0 360.29 L586.0 360.28 L587.0 360.26 L588.0 360.24 L589.0 360.22 L590.0 360.19 L591.0 360.17 L592.0 360.15 L593.0 360.13 L594.0 360.10 L595.0 360.07 L596.0 360.05 L597.0 360.02 L598.0 360.00 L599.0 359.97 L600.0 359.94 L601.0 359.92 L602.0 359.89 L603.0 359.86 L604.0 359.84 L605.0 359.81 L606.0 359.78 L607.0 359.76 L608.0 359.73 L609.0 359.70 L610.0 359.67 L611.0 359.65 L612.0 359.62 L613.0 359.59 L614.0 359.56 L615.0 359.53 L616.0 359.50 L617.0 359.47 L618.0 359.44 L619.0 359.41 L620.0 359.38 L621.0 359.35 L622.0 359.31 L623.0 359.28 L624.0 359.25 L625.0 359.22 L626.0 359.18 L627.0 359.15 L628.0 359.11 L629.0 359.08 L630.0 359.04 L631.0 359.01 L632.0 358.97 L633.0 358.93 L634.0 358.89 L635.0 358.86 L636.0 358.82 L637.0 358.78 L638.0 358.74 L639.0 358.70 L640.0 358.66 L641.0 358.61 L642.0 358.57 L643.0 358.53 L644.0 358.48 L645.0 358.44 L646.0 358.39 L647.0 358.35 L648.0 358.30 L649.0 358.25 L650.0 358.20 L651.0 358.15 L652.0 358.10 L653.0 358.05 L654.0 357.99 L655.0 357.94 L656.0 357.88 L657.0 357.83 L658.0 357.77 L659.0 357.71 L660.0 357.65 L661.0 357.59 L662.0 357.53 L663.0 357.47 L664.0 357.41 L665.0 357.35 L666.0 357.28 L667.0 357.22 L668.0 357.16 L669.0 357.09 L670.0 357.03 L671.0 356.96 L672.0 356.90 L673.0 356.83 L674.0 356.77 L675.0 356.70 L676.0 356.63 L677.0 356.57 L678.0 356.50 L679.0 356.44 L680.0 356.37 L681.0 356.30 L682.0 356.24 L683.0 356.17 L684.0 356.11 L685.0 356.04 L686.0 355.98 L687.0 355.91 L688.0 355.85 L689.0 355.79 L690.0 355.72 L691.0 355.66 L692.0 355.60 L692.0 384.8 Z" fill="#8b8f9f" fill-opacity="0.8"/>
<path d="M386.0 361.50 L387.0 361.46 L388.0 361.42 L389.0 361.37 L390.0 361.33 L391.0 361.28 L392.0 361.23 L393.0 361.19 L394.0 361.14 L395.0 361.09 L396.0 361.03 L397.0 360.98 L398.0 360.93 L399.0 360.88 L400.0 360.82 L401.0 360.77 L402.0 360.72 L403.0 360.67 L404.0 360.62 L405.0 360.56 L406.0 360.51 L407.0 360.46 L408.0 360.41 L409.0 360.36 L410.0 360.32 L411.0 360.27 L412.0 360.23 L413.0 360.18 L414.0 360.14 L415.0 360.10 L416.0 360.06 L417.0 360.03 L418.0 359.99 L419.0 359.96 L420.0 359.93 L421.0 359.91 L422.0 359.88 L423.0 359.86 L424.0 359.84 L425.0 359.83 L426.0 359.82 L427.0 359.81 L428.0 359.80 L429.0 359.80 L430.0 359.80 L431.0 359.80 L432.0 359.80 L433.0 359.80 L434.0 359.80 L435.0 359.80 L436.0 359.80 L437.0 359.80 L438.0 359.80 L439.0 359.80 L440.0 359.80 L441.0 359.80 L442.0 359.80 L443.0 359.80 L444.0 359.80 L445.0 359.80 L446.0 359.80 L447.0 359.80 L448.0 359.80 L449.0 359.80 L450.0 359.80 L451.0 359.80 L452.0 359.80 L453.0 359.80 L454.0 359.80 L455.0 359.80 L456.0 359.80 L457.0 359.80 L458.0 359.80 L459.0 359.80 L460.0 359.80 L461.0 359.80 L462.0 359.80 L463.0 359.80 L464.0 359.80 L465.0 359.80 L466.0 359.80 L467.0 359.80 L468.0 359.80 L469.0 359.80 L470.0 359.80 L471.0 359.80 L472.0 359.80 L473.0 359.80 L474.0 359.80 L475.0 359.80 L476.0 359.80 L477.0 359.80 L478.0 359.80 L479.0 359.80 L480.0 359.80 L481.0 359.80 L482.0 359.80 L483.0 359.80 L484.0 359.80 L485.0 359.81 L486.0 359.82 L487.0 359.85 L488.0 359.88 L489.0 359.92 L490.0 359.97 L491.0 360.03 L492.0 360.10 L493.0 360.17 L494.0 360.24 L495.0 360.32 L496.0 360.40 L497.0 360.49 L498.0 360.57 L499.0 360.66 L500.0 360.75 L501.0 360.85 L502.0 360.94 L503.0 361.03 L504.0 361.11 L505.0 361.20 L506.0 361.28 L507.0 361.36 L508.0 361.43 L509.0 361.50 L510.0 361.57 L511.0 361.63 L512.0 361.68 L513.0 361.72 L514.0 361.75 L515.0 361.78 L516.0 361.79 L517.0 361.80 L518.0 361.80 L519.0 361.80 L520.0 361.79 L521.0 361.78 L522.0 361.77 L523.0 361.76 L524.0 361.75 L525.0 361.73 L526.0 361.71 L527.0 361.69 L528.0 361.67 L529.0 361.65 L530.0 361.63 L531.0 361.60 L532.0 361.58 L533.0 361.55 L534.0 361.52 L535.0 361.49 L536.0 361.46 L537.0 361.43 L538.0 361.40 L539.0 361.37 L540.0 361.34 L541.0 361.30 L542.0 361.27 L543.0 361.24 L544.0 361.20 L545.0 361.17 L546.0 361.14 L547.0 361.10 L548.0 361.07 L549.0 361.04 L550.0 361.01 L551.0 360.97 L552.0 360.94 L553.0 360.91 L554.0 360.88 L555.0 360.85 L556.0 360.82 L557.0 360.80 L558.0 360.77 L559.0 360.75 L560.0 360.72 L561.0 360.70 L562.0 360.68 L563.0 360.66 L564.0 360.64 L565.0 360.62 L566.0 360.60 L567.0 360.58 L568.0 360.57 L569.0 360.55 L570.0 360.53 L571.0 360.52 L572.0 360.50 L573.0 360.49 L574.0 360.47 L575.0 360.46 L576.0 360.44 L577.0 360.42 L578.0 360.41 L579.0 360.39 L580.0 360.38 L581.0 360.36 L582.0 360.35 L583.0 360.33 L584.0 360.31 L585.0 360.29 L586.0 360.28 L587.0 360.26 L588.0 360.24 L589.0 360.22 L590.0 360.19 L591.0 360.17 L592.0 360.15 L593.0 360.13 L594.0 360.10 L595.0 360.07 L596.0 360.05 L597.0 360.02 L598.0 360.00 L599.0 359.97 L600.0 359.94 L601.0 359.92 L602.0 359.89 L603.0 359.86 L604.0 359.84 L605.0 359.81 L606.0 359.78 L607.0 359.76 L608.0 359.73 L609.0 359.70 L610.0 359.67 L611.0 359.65 L612.0 359.62 L613.0 359.59 L614.0 359.56 L615.0 359.53 L616.0 359.50 L617.0 359.47 L618.0 359.44 L619.0 359.41 L620.0 359.38 L621.0 359.35 L622.0 359.31 L623.0 359.28 L624.0 359.25 L625.0 359.22 L626.0 359.18 L627.0 359.15 L628.0 359.11 L629.0 359.08 L630.0 359.04 L631.0 359.01 L632.0 358.97 L633.0 358.93 L634.0 358.89 L635.0 358.86 L636.0 358.82 L637.0 358.78 L638.0 358.74 L639.0 358.70 L640.0 358.66 L641.0 358.61 L642.0 358.57 L643.0 358.53 L644.0 358.48 L645.0 358.44 L646.0 358.39 L647.0 358.35 L648.0 358.30 L649.0 358.25 L650.0 358.20 L651.0 358.15 L652.0 358.10 L653.0 358.05 L654.0 357.99 L655.0 357.94 L656.0 357.88 L657.0 357.83 L658.0 357.77 L659.0 357.71 L660.0 357.65 L661.0 357.59 L662.0 357.53 L663.0 357.47 L664.0 357.41 L665.0 357.35 L666.0 357.28 L667.0 357.22 L668.0 357.16 L669.0 357.09 L670.0 357.03 L671.0 356.96 L672.0 356.90 L673.0 356.83 L674.0 356.77 L675.0 356.70 L676.0 356.63 L677.0 356.57 L678.0 356.50 L679.0 356.44 L680.0 356.37 L681.0 356.30 L682.0 356.24 L683.0 356.17 L684.0 356.11 L685.0 356.04 L686.0 355.98 L687.0 355.91 L688.0 355.85 L689.0 355.79 L690.0 355.72 L691.0 355.66 L692.0 355.60" fill="none" stroke="rgba(40,40,60,0.22)" stroke-width="0.6"/>
<path d="M386.0 384.8 L386.0 371.30 L387.0 371.21 L388.0 371.12 L389.0 371.02 L390.0 370.92 L391.0 370.81 L392.0 370.71 L393.0 370.60 L394.0 370.49 L395.0 370.37 L396.0 370.26 L397.0 370.14 L398.0 370.03 L399.0 369.91 L400.0 369.79 L401.0 369.67 L402.0 369.56 L403.0 369.44 L404.0 369.32 L405.0 369.21 L406.0 369.09 L407.0 368.98 L408.0 368.87 L409.0 368.76 L410.0 368.66 L411.0 368.55 L412.0 368.45 L413.0 368.36 L414.0 368.26 L415.0 368.17 L416.0 368.09 L417.0 368.01 L418.0 367.93 L419.0 367.86 L420.0 367.80 L421.0 367.74 L422.0 367.69 L423.0 367.64 L424.0 367.60 L425.0 367.56 L426.0 367.54 L427.0 367.52 L428.0 367.50 L429.0 367.50 L430.0 367.50 L431.0 367.51 L432.0 367.51 L433.0 367.53 L434.0 367.54 L435.0 367.56 L436.0 367.58 L437.0 367.60 L438.0 367.62 L439.0 367.65 L440.0 367.68 L441.0 367.71 L442.0 367.74 L443.0 367.77 L444.0 367.81 L445.0 367.85 L446.0 367.89 L447.0 367.93 L448.0 367.97 L449.0 368.01 L450.0 368.05 L451.0 368.10 L452.0 368.14 L453.0 368.19 L454.0 368.23 L455.0 368.28 L456.0 368.33 L457.0 368.37 L458.0 368.42 L459.0 368.47 L460.0 368.51 L461.0 368.56 L462.0 368.60 L463.0 368.65 L464.0 368.69 L465.0 368.73 L466.0 368.77 L467.0 368.81 L468.0 368.85 L469.0 368.89 L470.0 368.93 L471.0 368.96 L472.0 368.99 L473.0 369.02 L474.0 369.05 L475.0 369.08 L476.0 369.10 L477.0 369.12 L478.0 369.14 L479.0 369.16 L480.0 369.17 L481.0 369.19 L482.0 369.19 L483.0 369.20 L484.0 369.20 L485.0 369.20 L486.0 369.19 L487.0 369.18 L488.0 369.17 L489.0 369.15 L490.0 369.12 L491.0 369.10 L492.0 369.07 L493.0 369.04 L494.0 369.01 L495.0 368.97 L496.0 368.93 L497.0 368.89 L498.0 368.85 L499.0 368.80 L500.0 368.76 L501.0 368.71 L502.0 368.67 L503.0 368.62 L504.0 368.57 L505.0 368.52 L506.0 368.47 L507.0 368.42 L508.0 368.38 L509.0 368.33 L510.0 368.28 L511.0 368.24 L512.0 368.19 L513.0 368.15 L514.0 368.11 L515.0 368.07 L516.0 368.03 L517.0 368.00 L518.0 367.97 L519.0 367.94 L520.0 367.91 L521.0 367.88 L522.0 367.85 L523.0 367.82 L524.0 367.80 L525.0 367.77 L526.0 367.75 L527.0 367.72 L528.0 367.70 L529.0 367.68 L530.0 367.65 L531.0 367.63 L532.0 367.61 L533.0 367.59 L534.0 367.57 L535.0 367.54 L536.0 367.52 L537.0 367.50 L538.0 367.48 L539.0 367.45 L540.0 367.43 L541.0 367.41 L542.0 367.38 L543.0 367.36 L544.0 367.33 L545.0 367.30 L546.0 367.28 L547.0 367.25 L548.0 367.22 L549.0 367.19 L550.0 367.16 L551.0 367.12 L552.0 367.09 L553.0 367.05 L554.0 367.01 L555.0 366.97 L556.0 366.93 L557.0 366.89 L558.0 366.85 L559.0 366.80 L560.0 366.75 L561.0 366.70 L562.0 366.65 L563.0 366.59 L564.0 366.53 L565.0 366.47 L566.0 366.41 L567.0 366.34 L568.0 366.27 L569.0 366.20 L570.0 366.13 L571.0 366.06 L572.0 365.98 L573.0 365.91 L574.0 365.83 L575.0 365.75 L576.0 365.67 L577.0 365.59 L578.0 365.50 L579.0 365.42 L580.0 365.34 L581.0 365.25 L582.0 365.17 L583.0 365.08 L584.0 365.00 L585.0 364.91 L586.0 364.82 L587.0 364.72 L588.0 364.62 L589.0 364.52 L590.0 364.42 L591.0 364.31 L592.0 364.20 L593.0 364.09 L594.0 363.99 L595.0 363.88 L596.0 363.77 L597.0 363.67 L598.0 363.57 L599.0 363.47 L600.0 363.38 L601.0 363.29 L602.0 363.21 L603.0 363.13 L604.0 363.06 L605.0 363.00 L606.0 362.94 L607.0 362.89 L608.0 362.83 L609.0 362.78 L610.0 362.73 L611.0 362.68 L612.0 362.64 L613.0 362.60 L614.0 362.55 L615.0 362.51 L616.0 362.48 L617.0 362.44 L618.0 362.41 L619.0 362.37 L620.0 362.34 L621.0 362.31 L622.0 362.29 L623.0 362.26 L624.0 362.24 L625.0 362.21 L626.0 362.19 L627.0 362.17 L628.0 362.15 L629.0 362.14 L630.0 362.12 L631.0 362.10 L632.0 362.09 L633.0 362.08 L634.0 362.07 L635.0 362.06 L636.0 362.05 L637.0 362.04 L638.0 362.03 L639.0 362.02 L640.0 362.02 L641.0 362.01 L642.0 362.01 L643.0 362.01 L644.0 362.00 L645.0 362.00 L646.0 362.00 L647.0 362.00 L648.0 362.00 L649.0 362.00 L650.0 362.00 L651.0 362.01 L652.0 362.01 L653.0 362.02 L654.0 362.03 L655.0 362.04 L656.0 362.05 L657.0 362.07 L658.0 362.08 L659.0 362.10 L660.0 362.12 L661.0 362.13 L662.0 362.15 L663.0 362.17 L664.0 362.19 L665.0 362.22 L666.0 362.24 L667.0 362.26 L668.0 362.29 L669.0 362.31 L670.0 362.34 L671.0 362.36 L672.0 362.39 L673.0 362.42 L674.0 362.44 L675.0 362.47 L676.0 362.50 L677.0 362.52 L678.0 362.55 L679.0 362.58 L680.0 362.61 L681.0 362.63 L682.0 362.66 L683.0 362.69 L684.0 362.71 L685.0 362.74 L686.0 362.76 L687.0 362.79 L688.0 362.81 L689.0 362.83 L690.0 362.86 L691.0 362.88 L692.0 362.90 L692.0 384.8 Z" fill="#616ebe" fill-opacity="0.8"/>
<path d="M386.0 371.30 L387.0 371.21 L388.0 371.12 L389.0 371.02 L390.0 370.92 L391.0 370.81 L392.0 370.71 L393.0 370.60 L394.0 370.49 L395.0 370.37 L396.0 370.26 L397.0 370.14 L398.0 370.03 L399.0 369.91 L400.0 369.79 L401.0 369.67 L402.0 369.56 L403.0 369.44 L404.0 369.32 L405.0 369.21 L406.0 369.09 L407.0 368.98 L408.0 368.87 L409.0 368.76 L410.0 368.66 L411.0 368.55 L412.0 368.45 L413.0 368.36 L414.0 368.26 L415.0 368.17 L416.0 368.09 L417.0 368.01 L418.0 367.93 L419.0 367.86 L420.0 367.80 L421.0 367.74 L422.0 367.69 L423.0 367.64 L424.0 367.60 L425.0 367.56 L426.0 367.54 L427.0 367.52 L428.0 367.50 L429.0 367.50 L430.0 367.50 L431.0 367.51 L432.0 367.51 L433.0 367.53 L434.0 367.54 L435.0 367.56 L436.0 367.58 L437.0 367.60 L438.0 367.62 L439.0 367.65 L440.0 367.68 L441.0 367.71 L442.0 367.74 L443.0 367.77 L444.0 367.81 L445.0 367.85 L446.0 367.89 L447.0 367.93 L448.0 367.97 L449.0 368.01 L450.0 368.05 L451.0 368.10 L452.0 368.14 L453.0 368.19 L454.0 368.23 L455.0 368.28 L456.0 368.33 L457.0 368.37 L458.0 368.42 L459.0 368.47 L460.0 368.51 L461.0 368.56 L462.0 368.60 L463.0 368.65 L464.0 368.69 L465.0 368.73 L466.0 368.77 L467.0 368.81 L468.0 368.85 L469.0 368.89 L470.0 368.93 L471.0 368.96 L472.0 368.99 L473.0 369.02 L474.0 369.05 L475.0 369.08 L476.0 369.10 L477.0 369.12 L478.0 369.14 L479.0 369.16 L480.0 369.17 L481.0 369.19 L482.0 369.19 L483.0 369.20 L484.0 369.20 L485.0 369.20 L486.0 369.19 L487.0 369.18 L488.0 369.17 L489.0 369.15 L490.0 369.12 L491.0 369.10 L492.0 369.07 L493.0 369.04 L494.0 369.01 L495.0 368.97 L496.0 368.93 L497.0 368.89 L498.0 368.85 L499.0 368.80 L500.0 368.76 L501.0 368.71 L502.0 368.67 L503.0 368.62 L504.0 368.57 L505.0 368.52 L506.0 368.47 L507.0 368.42 L508.0 368.38 L509.0 368.33 L510.0 368.28 L511.0 368.24 L512.0 368.19 L513.0 368.15 L514.0 368.11 L515.0 368.07 L516.0 368.03 L517.0 368.00 L518.0 367.97 L519.0 367.94 L520.0 367.91 L521.0 367.88 L522.0 367.85 L523.0 367.82 L524.0 367.80 L525.0 367.77 L526.0 367.75 L527.0 367.72 L528.0 367.70 L529.0 367.68 L530.0 367.65 L531.0 367.63 L532.0 367.61 L533.0 367.59 L534.0 367.57 L535.0 367.54 L536.0 367.52 L537.0 367.50 L538.0 367.48 L539.0 367.45 L540.0 367.43 L541.0 367.41 L542.0 367.38 L543.0 367.36 L544.0 367.33 L545.0 367.30 L546.0 367.28 L547.0 367.25 L548.0 367.22 L549.0 367.19 L550.0 367.16 L551.0 367.12 L552.0 367.09 L553.0 367.05 L554.0 367.01 L555.0 366.97 L556.0 366.93 L557.0 366.89 L558.0 366.85 L559.0 366.80 L560.0 366.75 L561.0 366.70 L562.0 366.65 L563.0 366.59 L564.0 366.53 L565.0 366.47 L566.0 366.41 L567.0 366.34 L568.0 366.27 L569.0 366.20 L570.0 366.13 L571.0 366.06 L572.0 365.98 L573.0 365.91 L574.0 365.83 L575.0 365.75 L576.0 365.67 L577.0 365.59 L578.0 365.50 L579.0 365.42 L580.0 365.34 L581.0 365.25 L582.0 365.17 L583.0 365.08 L584.0 365.00 L585.0 364.91 L586.0 364.82 L587.0 364.72 L588.0 364.62 L589.0 364.52 L590.0 364.42 L591.0 364.31 L592.0 364.20 L593.0 364.09 L594.0 363.99 L595.0 363.88 L596.0 363.77 L597.0 363.67 L598.0 363.57 L599.0 363.47 L600.0 363.38 L601.0 363.29 L602.0 363.21 L603.0 363.13 L604.0 363.06 L605.0 363.00 L606.0 362.94 L607.0 362.89 L608.0 362.83 L609.0 362.78 L610.0 362.73 L611.0 362.68 L612.0 362.64 L613.0 362.60 L614.0 362.55 L615.0 362.51 L616.0 362.48 L617.0 362.44 L618.0 362.41 L619.0 362.37 L620.0 362.34 L621.0 362.31 L622.0 362.29 L623.0 362.26 L624.0 362.24 L625.0 362.21 L626.0 362.19 L627.0 362.17 L628.0 362.15 L629.0 362.14 L630.0 362.12 L631.0 362.10 L632.0 362.09 L633.0 362.08 L634.0 362.07 L635.0 362.06 L636.0 362.05 L637.0 362.04 L638.0 362.03 L639.0 362.02 L640.0 362.02 L641.0 362.01 L642.0 362.01 L643.0 362.01 L644.0 362.00 L645.0 362.00 L646.0 362.00 L647.0 362.00 L648.0 362.00 L649.0 362.00 L650.0 362.00 L651.0 362.01 L652.0 362.01 L653.0 362.02 L654.0 362.03 L655.0 362.04 L656.0 362.05 L657.0 362.07 L658.0 362.08 L659.0 362.10 L660.0 362.12 L661.0 362.13 L662.0 362.15 L663.0 362.17 L664.0 362.19 L665.0 362.22 L666.0 362.24 L667.0 362.26 L668.0 362.29 L669.0 362.31 L670.0 362.34 L671.0 362.36 L672.0 362.39 L673.0 362.42 L674.0 362.44 L675.0 362.47 L676.0 362.50 L677.0 362.52 L678.0 362.55 L679.0 362.58 L680.0 362.61 L681.0 362.63 L682.0 362.66 L683.0 362.69 L684.0 362.71 L685.0 362.74 L686.0 362.76 L687.0 362.79 L688.0 362.81 L689.0 362.83 L690.0 362.86 L691.0 362.88 L692.0 362.90" fill="none" stroke="rgba(40,40,60,0.22)" stroke-width="0.6"/>
<path d="M386.0 384.8 L386.0 374.50 L387.0 374.47 L388.0 374.44 L389.0 374.41 L390.0 374.38 L391.0 374.35 L392.0 374.31 L393.0 374.28 L394.0 374.24 L395.0 374.21 L396.0 374.17 L397.0 374.13 L398.0 374.10 L399.0 374.06 L400.0 374.02 L401.0 373.99 L402.0 373.95 L403.0 373.91 L404.0 373.88 L405.0 373.84 L406.0 373.80 L407.0 373.77 L408.0 373.73 L409.0 373.70 L410.0 373.67 L411.0 373.63 L412.0 373.60 L413.0 373.57 L414.0 373.54 L415.0 373.51 L416.0 373.49 L417.0 373.46 L418.0 373.44 L419.0 373.41 L420.0 373.39 L421.0 373.38 L422.0 373.36 L423.0 373.34 L424.0 373.33 L425.0 373.32 L426.0 373.31 L427.0 373.31 L428.0 373.30 L429.0 373.30 L430.0 373.30 L431.0 373.31 L432.0 373.32 L433.0 373.33 L434.0 373.35 L435.0 373.36 L436.0 373.39 L437.0 373.41 L438.0 373.44 L439.0 373.47 L440.0 373.50 L441.0 373.54 L442.0 373.58 L443.0 373.62 L444.0 373.66 L445.0 373.70 L446.0 373.75 L447.0 373.80 L448.0 373.85 L449.0 373.90 L450.0 373.95 L451.0 374.01 L452.0 374.06 L453.0 374.12 L454.0 374.17 L455.0 374.23 L456.0 374.29 L457.0 374.35 L458.0 374.41 L459.0 374.47 L460.0 374.53 L461.0 374.59 L462.0 374.65 L463.0 374.71 L464.0 374.77 L465.0 374.82 L466.0 374.88 L467.0 374.94 L468.0 375.00 L469.0 375.05 L470.0 375.11 L471.0 375.16 L472.0 375.21 L473.0 375.26 L474.0 375.31 L475.0 375.36 L476.0 375.41 L477.0 375.45 L478.0 375.49 L479.0 375.54 L480.0 375.57 L481.0 375.61 L482.0 375.64 L483.0 375.67 L484.0 375.70 L485.0 375.73 L486.0 375.75 L487.0 375.77 L488.0 375.79 L489.0 375.81 L490.0 375.83 L491.0 375.85 L492.0 375.87 L493.0 375.88 L494.0 375.89 L495.0 375.91 L496.0 375.92 L497.0 375.93 L498.0 375.94 L499.0 375.95 L500.0 375.96 L501.0 375.96 L502.0 375.97 L503.0 375.97 L504.0 375.98 L505.0 375.98 L506.0 375.99 L507.0 375.99 L508.0 375.99 L509.0 375.99 L510.0 376.00 L511.0 376.00 L512.0 376.00 L513.0 376.00 L514.0 376.00 L515.0 376.00 L516.0 376.00 L517.0 376.00 L518.0 376.00 L519.0 375.99 L520.0 375.99 L521.0 375.98 L522.0 375.97 L523.0 375.96 L524.0 375.94 L525.0 375.92 L526.0 375.90 L527.0 375.88 L528.0 375.86 L529.0 375.84 L530.0 375.81 L531.0 375.78 L532.0 375.76 L533.0 375.73 L534.0 375.70 L535.0 375.67 L536.0 375.63 L537.0 375.60 L538.0 375.57 L539.0 375.54 L540.0 375.50 L541.0 375.47 L542.0 375.43 L543.0 375.40 L544.0 375.37 L545.0 375.33 L546.0 375.30 L547.0 375.26 L548.0 375.23 L549.0 375.20 L550.0 375.17 L551.0 375.14 L552.0 375.11 L553.0 375.08 L554.0 375.05 L555.0 375.03 L556.0 375.00 L557.0 374.98 L558.0 374.96 L559.0 374.93 L560.0 374.92 L561.0 374.90 L562.0 374.88 L563.0 374.87 L564.0 374.86 L565.0 374.85 L566.0 374.83 L567.0 374.82 L568.0 374.81 L569.0 374.80 L570.0 374.80 L571.0 374.79 L572.0 374.78 L573.0 374.78 L574.0 374.77 L575.0 374.76 L576.0 374.76 L577.0 374.75 L578.0 374.75 L579.0 374.75 L580.0 374.74 L581.0 374.74 L582.0 374.74 L583.0 374.73 L584.0 374.73 L585.0 374.73 L586.0 374.72 L587.0 374.72 L588.0 374.72 L589.0 374.72 L590.0 374.71 L591.0 374.71 L592.0 374.71 L593.0 374.70 L594.0 374.70 L595.0 374.70 L596.0 374.69 L597.0 374.69 L598.0 374.69 L599.0 374.68 L600.0 374.68 L601.0 374.68 L602.0 374.68 L603.0 374.67 L604.0 374.67 L605.0 374.67 L606.0 374.67 L607.0 374.67 L608.0 374.67 L609.0 374.66 L610.0 374.66 L611.0 374.66 L612.0 374.66 L613.0 374.66 L614.0 374.66 L615.0 374.65 L616.0 374.65 L617.0 374.65 L618.0 374.65 L619.0 374.65 L620.0 374.65 L621.0 374.64 L622.0 374.64 L623.0 374.64 L624.0 374.64 L625.0 374.64 L626.0 374.63 L627.0 374.63 L628.0 374.63 L629.0 374.62 L630.0 374.62 L631.0 374.62 L632.0 374.61 L633.0 374.61 L634.0 374.60 L635.0 374.60 L636.0 374.59 L637.0 374.59 L638.0 374.58 L639.0 374.58 L640.0 374.57 L641.0 374.56 L642.0 374.55 L643.0 374.55 L644.0 374.54 L645.0 374.53 L646.0 374.52 L647.0 374.51 L648.0 374.50 L649.0 374.49 L650.0 374.48 L651.0 374.46 L652.0 374.45 L653.0 374.43 L654.0 374.42 L655.0 374.40 L656.0 374.38 L657.0 374.37 L658.0 374.35 L659.0 374.33 L660.0 374.31 L661.0 374.28 L662.0 374.26 L663.0 374.24 L664.0 374.22 L665.0 374.19 L666.0 374.17 L667.0 374.14 L668.0 374.12 L669.0 374.09 L670.0 374.07 L671.0 374.04 L672.0 374.02 L673.0 373.99 L674.0 373.96 L675.0 373.94 L676.0 373.91 L677.0 373.88 L678.0 373.86 L679.0 373.83 L680.0 373.80 L681.0 373.78 L682.0 373.75 L683.0 373.72 L684.0 373.70 L685.0 373.67 L686.0 373.65 L687.0 373.62 L688.0 373.59 L689.0 373.57 L690.0 373.55 L691.0 373.52 L692.0 373.50 L692.0 384.8 Z" fill="#2daaed" fill-opacity="0.8"/>
<path d="M386.0 374.50 L387.0 374.47 L388.0 374.44 L389.0 374.41 L390.0 374.38 L391.0 374.35 L392.0 374.31 L393.0 374.28 L394.0 374.24 L395.0 374.21 L396.0 374.17 L397.0 374.13 L398.0 374.10 L399.0 374.06 L400.0 374.02 L401.0 373.99 L402.0 373.95 L403.0 373.91 L404.0 373.88 L405.0 373.84 L406.0 373.80 L407.0 373.77 L408.0 373.73 L409.0 373.70 L410.0 373.67 L411.0 373.63 L412.0 373.60 L413.0 373.57 L414.0 373.54 L415.0 373.51 L416.0 373.49 L417.0 373.46 L418.0 373.44 L419.0 373.41 L420.0 373.39 L421.0 373.38 L422.0 373.36 L423.0 373.34 L424.0 373.33 L425.0 373.32 L426.0 373.31 L427.0 373.31 L428.0 373.30 L429.0 373.30 L430.0 373.30 L431.0 373.31 L432.0 373.32 L433.0 373.33 L434.0 373.35 L435.0 373.36 L436.0 373.39 L437.0 373.41 L438.0 373.44 L439.0 373.47 L440.0 373.50 L441.0 373.54 L442.0 373.58 L443.0 373.62 L444.0 373.66 L445.0 373.70 L446.0 373.75 L447.0 373.80 L448.0 373.85 L449.0 373.90 L450.0 373.95 L451.0 374.01 L452.0 374.06 L453.0 374.12 L454.0 374.17 L455.0 374.23 L456.0 374.29 L457.0 374.35 L458.0 374.41 L459.0 374.47 L460.0 374.53 L461.0 374.59 L462.0 374.65 L463.0 374.71 L464.0 374.77 L465.0 374.82 L466.0 374.88 L467.0 374.94 L468.0 375.00 L469.0 375.05 L470.0 375.11 L471.0 375.16 L472.0 375.21 L473.0 375.26 L474.0 375.31 L475.0 375.36 L476.0 375.41 L477.0 375.45 L478.0 375.49 L479.0 375.54 L480.0 375.57 L481.0 375.61 L482.0 375.64 L483.0 375.67 L484.0 375.70 L485.0 375.73 L486.0 375.75 L487.0 375.77 L488.0 375.79 L489.0 375.81 L490.0 375.83 L491.0 375.85 L492.0 375.87 L493.0 375.88 L494.0 375.89 L495.0 375.91 L496.0 375.92 L497.0 375.93 L498.0 375.94 L499.0 375.95 L500.0 375.96 L501.0 375.96 L502.0 375.97 L503.0 375.97 L504.0 375.98 L505.0 375.98 L506.0 375.99 L507.0 375.99 L508.0 375.99 L509.0 375.99 L510.0 376.00 L511.0 376.00 L512.0 376.00 L513.0 376.00 L514.0 376.00 L515.0 376.00 L516.0 376.00 L517.0 376.00 L518.0 376.00 L519.0 375.99 L520.0 375.99 L521.0 375.98 L522.0 375.97 L523.0 375.96 L524.0 375.94 L525.0 375.92 L526.0 375.90 L527.0 375.88 L528.0 375.86 L529.0 375.84 L530.0 375.81 L531.0 375.78 L532.0 375.76 L533.0 375.73 L534.0 375.70 L535.0 375.67 L536.0 375.63 L537.0 375.60 L538.0 375.57 L539.0 375.54 L540.0 375.50 L541.0 375.47 L542.0 375.43 L543.0 375.40 L544.0 375.37 L545.0 375.33 L546.0 375.30 L547.0 375.26 L548.0 375.23 L549.0 375.20 L550.0 375.17 L551.0 375.14 L552.0 375.11 L553.0 375.08 L554.0 375.05 L555.0 375.03 L556.0 375.00 L557.0 374.98 L558.0 374.96 L559.0 374.93 L560.0 374.92 L561.0 374.90 L562.0 374.88 L563.0 374.87 L564.0 374.86 L565.0 374.85 L566.0 374.83 L567.0 374.82 L568.0 374.81 L569.0 374.80 L570.0 374.80 L571.0 374.79 L572.0 374.78 L573.0 374.78 L574.0 374.77 L575.0 374.76 L576.0 374.76 L577.0 374.75 L578.0 374.75 L579.0 374.75 L580.0 374.74 L581.0 374.74 L582.0 374.74 L583.0 374.73 L584.0 374.73 L585.0 374.73 L586.0 374.72 L587.0 374.72 L588.0 374.72 L589.0 374.72 L590.0 374.71 L591.0 374.71 L592.0 374.71 L593.0 374.70 L594.0 374.70 L595.0 374.70 L596.0 374.69 L597.0 374.69 L598.0 374.69 L599.0 374.68 L600.0 374.68 L601.0 374.68 L602.0 374.68 L603.0 374.67 L604.0 374.67 L605.0 374.67 L606.0 374.67 L607.0 374.67 L608.0 374.67 L609.0 374.66 L610.0 374.66 L611.0 374.66 L612.0 374.66 L613.0 374.66 L614.0 374.66 L615.0 374.65 L616.0 374.65 L617.0 374.65 L618.0 374.65 L619.0 374.65 L620.0 374.65 L621.0 374.64 L622.0 374.64 L623.0 374.64 L624.0 374.64 L625.0 374.64 L626.0 374.63 L627.0 374.63 L628.0 374.63 L629.0 374.62 L630.0 374.62 L631.0 374.62 L632.0 374.61 L633.0 374.61 L634.0 374.60 L635.0 374.60 L636.0 374.59 L637.0 374.59 L638.0 374.58 L639.0 374.58 L640.0 374.57 L641.0 374.56 L642.0 374.55 L643.0 374.55 L644.0 374.54 L645.0 374.53 L646.0 374.52 L647.0 374.51 L648.0 374.50 L649.0 374.49 L650.0 374.48 L651.0 374.46 L652.0 374.45 L653.0 374.43 L654.0 374.42 L655.0 374.40 L656.0 374.38 L657.0 374.37 L658.0 374.35 L659.0 374.33 L660.0 374.31 L661.0 374.28 L662.0 374.26 L663.0 374.24 L664.0 374.22 L665.0 374.19 L666.0 374.17 L667.0 374.14 L668.0 374.12 L669.0 374.09 L670.0 374.07 L671.0 374.04 L672.0 374.02 L673.0 373.99 L674.0 373.96 L675.0 373.94 L676.0 373.91 L677.0 373.88 L678.0 373.86 L679.0 373.83 L680.0 373.80 L681.0 373.78 L682.0 373.75 L683.0 373.72 L684.0 373.70 L685.0 373.67 L686.0 373.65 L687.0 373.62 L688.0 373.59 L689.0 373.57 L690.0 373.55 L691.0 373.52 L692.0 373.50" fill="none" stroke="rgba(40,40,60,0.22)" stroke-width="0.6"/>
<path d="M386.0 384.8 L386.0 381.00 L387.0 381.00 L388.0 381.00 L389.0 381.00 L390.0 381.00 L391.0 381.00 L392.0 381.00 L393.0 381.00 L394.0 380.99 L395.0 380.99 L396.0 380.99 L397.0 380.99 L398.0 380.99 L399.0 380.99 L400.0 380.99 L401.0 380.99 L402.0 380.99 L403.0 380.99 L404.0 380.99 L405.0 380.99 L406.0 380.99 L407.0 380.99 L408.0 380.99 L409.0 380.98 L410.0 380.98 L411.0 380.98 L412.0 380.98 L413.0 380.98 L414.0 380.98 L415.0 380.98 L416.0 380.98 L417.0 380.98 L418.0 380.98 L419.0 380.98 L420.0 380.98 L421.0 380.98 L422.0 380.98 L423.0 380.98 L424.0 380.98 L425.0 380.97 L426.0 380.97 L427.0 380.97 L428.0 380.97 L429.0 380.97 L430.0 380.97 L431.0 380.97 L432.0 380.97 L433.0 380.97 L434.0 380.97 L435.0 380.97 L436.0 380.97 L437.0 380.97 L438.0 380.97 L439.0 380.97 L440.0 380.96 L441.0 380.96 L442.0 380.96 L443.0 380.96 L444.0 380.96 L445.0 380.96 L446.0 380.96 L447.0 380.96 L448.0 380.96 L449.0 380.96 L450.0 380.96 L451.0 380.96 L452.0 380.96 L453.0 380.96 L454.0 380.96 L455.0 380.95 L456.0 380.95 L457.0 380.95 L458.0 380.95 L459.0 380.95 L460.0 380.95 L461.0 380.95 L462.0 380.95 L463.0 380.95 L464.0 380.95 L465.0 380.95 L466.0 380.95 L467.0 380.95 L468.0 380.95 L469.0 380.95 L470.0 380.95 L471.0 380.94 L472.0 380.94 L473.0 380.94 L474.0 380.94 L475.0 380.94 L476.0 380.94 L477.0 380.94 L478.0 380.94 L479.0 380.94 L480.0 380.94 L481.0 380.94 L482.0 380.94 L483.0 380.94 L484.0 380.94 L485.0 380.94 L486.0 380.93 L487.0 380.93 L488.0 380.93 L489.0 380.93 L490.0 380.93 L491.0 380.93 L492.0 380.93 L493.0 380.93 L494.0 380.93 L495.0 380.93 L496.0 380.93 L497.0 380.93 L498.0 380.93 L499.0 380.93 L500.0 380.93 L501.0 380.92 L502.0 380.92 L503.0 380.92 L504.0 380.92 L505.0 380.92 L506.0 380.92 L507.0 380.92 L508.0 380.92 L509.0 380.92 L510.0 380.92 L511.0 380.92 L512.0 380.92 L513.0 380.92 L514.0 380.92 L515.0 380.92 L516.0 380.92 L517.0 380.91 L518.0 380.91 L519.0 380.91 L520.0 380.91 L521.0 380.91 L522.0 380.91 L523.0 380.91 L524.0 380.91 L525.0 380.91 L526.0 380.91 L527.0 380.91 L528.0 380.91 L529.0 380.91 L530.0 380.91 L531.0 380.91 L532.0 380.90 L533.0 380.90 L534.0 380.90 L535.0 380.90 L536.0 380.90 L537.0 380.90 L538.0 380.90 L539.0 380.90 L540.0 380.90 L541.0 380.90 L542.0 380.90 L543.0 380.90 L544.0 380.90 L545.0 380.90 L546.0 380.90 L547.0 380.89 L548.0 380.89 L549.0 380.89 L550.0 380.89 L551.0 380.89 L552.0 380.89 L553.0 380.89 L554.0 380.89 L555.0 380.89 L556.0 380.89 L557.0 380.89 L558.0 380.89 L559.0 380.89 L560.0 380.89 L561.0 380.89 L562.0 380.88 L563.0 380.88 L564.0 380.88 L565.0 380.88 L566.0 380.88 L567.0 380.88 L568.0 380.88 L569.0 380.88 L570.0 380.88 L571.0 380.88 L572.0 380.88 L573.0 380.88 L574.0 380.88 L575.0 380.88 L576.0 380.88 L577.0 380.88 L578.0 380.87 L579.0 380.87 L580.0 380.87 L581.0 380.87 L582.0 380.87 L583.0 380.87 L584.0 380.87 L585.0 380.87 L586.0 380.87 L587.0 380.87 L588.0 380.87 L589.0 380.87 L590.0 380.87 L591.0 380.87 L592.0 380.87 L593.0 380.86 L594.0 380.86 L595.0 380.86 L596.0 380.86 L597.0 380.86 L598.0 380.86 L599.0 380.86 L600.0 380.86 L601.0 380.86 L602.0 380.86 L603.0 380.86 L604.0 380.86 L605.0 380.86 L606.0 380.86 L607.0 380.86 L608.0 380.85 L609.0 380.85 L610.0 380.85 L611.0 380.85 L612.0 380.85 L613.0 380.85 L614.0 380.85 L615.0 380.85 L616.0 380.85 L617.0 380.85 L618.0 380.85 L619.0 380.85 L620.0 380.85 L621.0 380.85 L622.0 380.85 L623.0 380.85 L624.0 380.84 L625.0 380.84 L626.0 380.84 L627.0 380.84 L628.0 380.84 L629.0 380.84 L630.0 380.84 L631.0 380.84 L632.0 380.84 L633.0 380.84 L634.0 380.84 L635.0 380.84 L636.0 380.84 L637.0 380.84 L638.0 380.84 L639.0 380.83 L640.0 380.83 L641.0 380.83 L642.0 380.83 L643.0 380.83 L644.0 380.83 L645.0 380.83 L646.0 380.83 L647.0 380.83 L648.0 380.83 L649.0 380.83 L650.0 380.83 L651.0 380.83 L652.0 380.83 L653.0 380.83 L654.0 380.82 L655.0 380.82 L656.0 380.82 L657.0 380.82 L658.0 380.82 L659.0 380.82 L660.0 380.82 L661.0 380.82 L662.0 380.82 L663.0 380.82 L664.0 380.82 L665.0 380.82 L666.0 380.82 L667.0 380.82 L668.0 380.82 L669.0 380.82 L670.0 380.81 L671.0 380.81 L672.0 380.81 L673.0 380.81 L674.0 380.81 L675.0 380.81 L676.0 380.81 L677.0 380.81 L678.0 380.81 L679.0 380.81 L680.0 380.81 L681.0 380.81 L682.0 380.81 L683.0 380.81 L684.0 380.81 L685.0 380.80 L686.0 380.80 L687.0 380.80 L688.0 380.80 L689.0 380.80 L690.0 380.80 L691.0 380.80 L692.0 380.80 L692.0 384.8 Z" fill="#2b8f8a" fill-opacity="1.0"/>
<path d="M386.0 381.00 L387.0 381.00 L388.0 381.00 L389.0 381.00 L390.0 381.00 L391.0 381.00 L392.0 381.00 L393.0 381.00 L394.0 380.99 L395.0 380.99 L396.0 380.99 L397.0 380.99 L398.0 380.99 L399.0 380.99 L400.0 380.99 L401.0 380.99 L402.0 380.99 L403.0 380.99 L404.0 380.99 L405.0 380.99 L406.0 380.99 L407.0 380.99 L408.0 380.99 L409.0 380.98 L410.0 380.98 L411.0 380.98 L412.0 380.98 L413.0 380.98 L414.0 380.98 L415.0 380.98 L416.0 380.98 L417.0 380.98 L418.0 380.98 L419.0 380.98 L420.0 380.98 L421.0 380.98 L422.0 380.98 L423.0 380.98 L424.0 380.98 L425.0 380.97 L426.0 380.97 L427.0 380.97 L428.0 380.97 L429.0 380.97 L430.0 380.97 L431.0 380.97 L432.0 380.97 L433.0 380.97 L434.0 380.97 L435.0 380.97 L436.0 380.97 L437.0 380.97 L438.0 380.97 L439.0 380.97 L440.0 380.96 L441.0 380.96 L442.0 380.96 L443.0 380.96 L444.0 380.96 L445.0 380.96 L446.0 380.96 L447.0 380.96 L448.0 380.96 L449.0 380.96 L450.0 380.96 L451.0 380.96 L452.0 380.96 L453.0 380.96 L454.0 380.96 L455.0 380.95 L456.0 380.95 L457.0 380.95 L458.0 380.95 L459.0 380.95 L460.0 380.95 L461.0 380.95 L462.0 380.95 L463.0 380.95 L464.0 380.95 L465.0 380.95 L466.0 380.95 L467.0 380.95 L468.0 380.95 L469.0 380.95 L470.0 380.95 L471.0 380.94 L472.0 380.94 L473.0 380.94 L474.0 380.94 L475.0 380.94 L476.0 380.94 L477.0 380.94 L478.0 380.94 L479.0 380.94 L480.0 380.94 L481.0 380.94 L482.0 380.94 L483.0 380.94 L484.0 380.94 L485.0 380.94 L486.0 380.93 L487.0 380.93 L488.0 380.93 L489.0 380.93 L490.0 380.93 L491.0 380.93 L492.0 380.93 L493.0 380.93 L494.0 380.93 L495.0 380.93 L496.0 380.93 L497.0 380.93 L498.0 380.93 L499.0 380.93 L500.0 380.93 L501.0 380.92 L502.0 380.92 L503.0 380.92 L504.0 380.92 L505.0 380.92 L506.0 380.92 L507.0 380.92 L508.0 380.92 L509.0 380.92 L510.0 380.92 L511.0 380.92 L512.0 380.92 L513.0 380.92 L514.0 380.92 L515.0 380.92 L516.0 380.92 L517.0 380.91 L518.0 380.91 L519.0 380.91 L520.0 380.91 L521.0 380.91 L522.0 380.91 L523.0 380.91 L524.0 380.91 L525.0 380.91 L526.0 380.91 L527.0 380.91 L528.0 380.91 L529.0 380.91 L530.0 380.91 L531.0 380.91 L532.0 380.90 L533.0 380.90 L534.0 380.90 L535.0 380.90 L536.0 380.90 L537.0 380.90 L538.0 380.90 L539.0 380.90 L540.0 380.90 L541.0 380.90 L542.0 380.90 L543.0 380.90 L544.0 380.90 L545.0 380.90 L546.0 380.90 L547.0 380.89 L548.0 380.89 L549.0 380.89 L550.0 380.89 L551.0 380.89 L552.0 380.89 L553.0 380.89 L554.0 380.89 L555.0 380.89 L556.0 380.89 L557.0 380.89 L558.0 380.89 L559.0 380.89 L560.0 380.89 L561.0 380.89 L562.0 380.88 L563.0 380.88 L564.0 380.88 L565.0 380.88 L566.0 380.88 L567.0 380.88 L568.0 380.88 L569.0 380.88 L570.0 380.88 L571.0 380.88 L572.0 380.88 L573.0 380.88 L574.0 380.88 L575.0 380.88 L576.0 380.88 L577.0 380.88 L578.0 380.87 L579.0 380.87 L580.0 380.87 L581.0 380.87 L582.0 380.87 L583.0 380.87 L584.0 380.87 L585.0 380.87 L586.0 380.87 L587.0 380.87 L588.0 380.87 L589.0 380.87 L590.0 380.87 L591.0 380.87 L592.0 380.87 L593.0 380.86 L594.0 380.86 L595.0 380.86 L596.0 380.86 L597.0 380.86 L598.0 380.86 L599.0 380.86 L600.0 380.86 L601.0 380.86 L602.0 380.86 L603.0 380.86 L604.0 380.86 L605.0 380.86 L606.0 380.86 L607.0 380.86 L608.0 380.85 L609.0 380.85 L610.0 380.85 L611.0 380.85 L612.0 380.85 L613.0 380.85 L614.0 380.85 L615.0 380.85 L616.0 380.85 L617.0 380.85 L618.0 380.85 L619.0 380.85 L620.0 380.85 L621.0 380.85 L622.0 380.85 L623.0 380.85 L624.0 380.84 L625.0 380.84 L626.0 380.84 L627.0 380.84 L628.0 380.84 L629.0 380.84 L630.0 380.84 L631.0 380.84 L632.0 380.84 L633.0 380.84 L634.0 380.84 L635.0 380.84 L636.0 380.84 L637.0 380.84 L638.0 380.84 L639.0 380.83 L640.0 380.83 L641.0 380.83 L642.0 380.83 L643.0 380.83 L644.0 380.83 L645.0 380.83 L646.0 380.83 L647.0 380.83 L648.0 380.83 L649.0 380.83 L650.0 380.83 L651.0 380.83 L652.0 380.83 L653.0 380.83 L654.0 380.82 L655.0 380.82 L656.0 380.82 L657.0 380.82 L658.0 380.82 L659.0 380.82 L660.0 380.82 L661.0 380.82 L662.0 380.82 L663.0 380.82 L664.0 380.82 L665.0 380.82 L666.0 380.82 L667.0 380.82 L668.0 380.82 L669.0 380.82 L670.0 380.81 L671.0 380.81 L672.0 380.81 L673.0 380.81 L674.0 380.81 L675.0 380.81 L676.0 380.81 L677.0 380.81 L678.0 380.81 L679.0 380.81 L680.0 380.81 L681.0 380.81 L682.0 380.81 L683.0 380.81 L684.0 380.81 L685.0 380.80 L686.0 380.80 L687.0 380.80 L688.0 380.80 L689.0 380.80 L690.0 380.80 L691.0 380.80 L692.0 380.80" fill="none" stroke="rgba(40,40,60,0.22)" stroke-width="0.6"/>
<path d="M386.0 384.8 L386.0 381.70 L387.0 381.70 L388.0 381.70 L389.0 381.70 L390.0 381.70 L391.0 381.70 L392.0 381.70 L393.0 381.70 L394.0 381.69 L395.0 381.69 L396.0 381.69 L397.0 381.69 L398.0 381.69 L399.0 381.69 L400.0 381.69 L401.0 381.69 L402.0 381.69 L403.0 381.69 L404.0 381.69 L405.0 381.69 L406.0 381.69 L407.0 381.69 L408.0 381.69 L409.0 381.68 L410.0 381.68 L411.0 381.68 L412.0 381.68 L413.0 381.68 L414.0 381.68 L415.0 381.68 L416.0 381.68 L417.0 381.68 L418.0 381.68 L419.0 381.68 L420.0 381.68 L421.0 381.68 L422.0 381.68 L423.0 381.68 L424.0 381.68 L425.0 381.67 L426.0 381.67 L427.0 381.67 L428.0 381.67 L429.0 381.67 L430.0 381.67 L431.0 381.67 L432.0 381.67 L433.0 381.67 L434.0 381.67 L435.0 381.67 L436.0 381.67 L437.0 381.67 L438.0 381.67 L439.0 381.67 L440.0 381.66 L441.0 381.66 L442.0 381.66 L443.0 381.66 L444.0 381.66 L445.0 381.66 L446.0 381.66 L447.0 381.66 L448.0 381.66 L449.0 381.66 L450.0 381.66 L451.0 381.66 L452.0 381.66 L453.0 381.66 L454.0 381.66 L455.0 381.65 L456.0 381.65 L457.0 381.65 L458.0 381.65 L459.0 381.65 L460.0 381.65 L461.0 381.65 L462.0 381.65 L463.0 381.65 L464.0 381.65 L465.0 381.65 L466.0 381.65 L467.0 381.65 L468.0 381.65 L469.0 381.65 L470.0 381.65 L471.0 381.64 L472.0 381.64 L473.0 381.64 L474.0 381.64 L475.0 381.64 L476.0 381.64 L477.0 381.64 L478.0 381.64 L479.0 381.64 L480.0 381.64 L481.0 381.64 L482.0 381.64 L483.0 381.64 L484.0 381.64 L485.0 381.64 L486.0 381.63 L487.0 381.63 L488.0 381.63 L489.0 381.63 L490.0 381.63 L491.0 381.63 L492.0 381.63 L493.0 381.63 L494.0 381.63 L495.0 381.63 L496.0 381.63 L497.0 381.63 L498.0 381.63 L499.0 381.63 L500.0 381.63 L501.0 381.62 L502.0 381.62 L503.0 381.62 L504.0 381.62 L505.0 381.62 L506.0 381.62 L507.0 381.62 L508.0 381.62 L509.0 381.62 L510.0 381.62 L511.0 381.62 L512.0 381.62 L513.0 381.62 L514.0 381.62 L515.0 381.62 L516.0 381.62 L517.0 381.61 L518.0 381.61 L519.0 381.61 L520.0 381.61 L521.0 381.61 L522.0 381.61 L523.0 381.61 L524.0 381.61 L525.0 381.61 L526.0 381.61 L527.0 381.61 L528.0 381.61 L529.0 381.61 L530.0 381.61 L531.0 381.61 L532.0 381.60 L533.0 381.60 L534.0 381.60 L535.0 381.60 L536.0 381.60 L537.0 381.60 L538.0 381.60 L539.0 381.60 L540.0 381.60 L541.0 381.60 L542.0 381.60 L543.0 381.60 L544.0 381.60 L545.0 381.60 L546.0 381.60 L547.0 381.59 L548.0 381.59 L549.0 381.59 L550.0 381.59 L551.0 381.59 L552.0 381.59 L553.0 381.59 L554.0 381.59 L555.0 381.59 L556.0 381.59 L557.0 381.59 L558.0 381.59 L559.0 381.59 L560.0 381.59 L561.0 381.59 L562.0 381.58 L563.0 381.58 L564.0 381.58 L565.0 381.58 L566.0 381.58 L567.0 381.58 L568.0 381.58 L569.0 381.58 L570.0 381.58 L571.0 381.58 L572.0 381.58 L573.0 381.58 L574.0 381.58 L575.0 381.58 L576.0 381.58 L577.0 381.58 L578.0 381.57 L579.0 381.57 L580.0 381.57 L581.0 381.57 L582.0 381.57 L583.0 381.57 L584.0 381.57 L585.0 381.57 L586.0 381.57 L587.0 381.57 L588.0 381.57 L589.0 381.57 L590.0 381.57 L591.0 381.57 L592.0 381.57 L593.0 381.56 L594.0 381.56 L595.0 381.56 L596.0 381.56 L597.0 381.56 L598.0 381.56 L599.0 381.56 L600.0 381.56 L601.0 381.56 L602.0 381.56 L603.0 381.56 L604.0 381.56 L605.0 381.56 L606.0 381.56 L607.0 381.56 L608.0 381.55 L609.0 381.55 L610.0 381.55 L611.0 381.55 L612.0 381.55 L613.0 381.55 L614.0 381.55 L615.0 381.55 L616.0 381.55 L617.0 381.55 L618.0 381.55 L619.0 381.55 L620.0 381.55 L621.0 381.55 L622.0 381.55 L623.0 381.55 L624.0 381.54 L625.0 381.54 L626.0 381.54 L627.0 381.54 L628.0 381.54 L629.0 381.54 L630.0 381.54 L631.0 381.54 L632.0 381.54 L633.0 381.54 L634.0 381.54 L635.0 381.54 L636.0 381.54 L637.0 381.54 L638.0 381.54 L639.0 381.53 L640.0 381.53 L641.0 381.53 L642.0 381.53 L643.0 381.53 L644.0 381.53 L645.0 381.53 L646.0 381.53 L647.0 381.53 L648.0 381.53 L649.0 381.53 L650.0 381.53 L651.0 381.53 L652.0 381.53 L653.0 381.53 L654.0 381.52 L655.0 381.52 L656.0 381.52 L657.0 381.52 L658.0 381.52 L659.0 381.52 L660.0 381.52 L661.0 381.52 L662.0 381.52 L663.0 381.52 L664.0 381.52 L665.0 381.52 L666.0 381.52 L667.0 381.52 L668.0 381.52 L669.0 381.52 L670.0 381.51 L671.0 381.51 L672.0 381.51 L673.0 381.51 L674.0 381.51 L675.0 381.51 L676.0 381.51 L677.0 381.51 L678.0 381.51 L679.0 381.51 L680.0 381.51 L681.0 381.51 L682.0 381.51 L683.0 381.51 L684.0 381.51 L685.0 381.50 L686.0 381.50 L687.0 381.50 L688.0 381.50 L689.0 381.50 L690.0 381.50 L691.0 381.50 L692.0 381.50 L692.0 384.8 Z" fill="#7cc67a" fill-opacity="1.0"/>
<path d="M386.0 381.70 L387.0 381.70 L388.0 381.70 L389.0 381.70 L390.0 381.70 L391.0 381.70 L392.0 381.70 L393.0 381.70 L394.0 381.69 L395.0 381.69 L396.0 381.69 L397.0 381.69 L398.0 381.69 L399.0 381.69 L400.0 381.69 L401.0 381.69 L402.0 381.69 L403.0 381.69 L404.0 381.69 L405.0 381.69 L406.0 381.69 L407.0 381.69 L408.0 381.69 L409.0 381.68 L410.0 381.68 L411.0 381.68 L412.0 381.68 L413.0 381.68 L414.0 381.68 L415.0 381.68 L416.0 381.68 L417.0 381.68 L418.0 381.68 L419.0 381.68 L420.0 381.68 L421.0 381.68 L422.0 381.68 L423.0 381.68 L424.0 381.68 L425.0 381.67 L426.0 381.67 L427.0 381.67 L428.0 381.67 L429.0 381.67 L430.0 381.67 L431.0 381.67 L432.0 381.67 L433.0 381.67 L434.0 381.67 L435.0 381.67 L436.0 381.67 L437.0 381.67 L438.0 381.67 L439.0 381.67 L440.0 381.66 L441.0 381.66 L442.0 381.66 L443.0 381.66 L444.0 381.66 L445.0 381.66 L446.0 381.66 L447.0 381.66 L448.0 381.66 L449.0 381.66 L450.0 381.66 L451.0 381.66 L452.0 381.66 L453.0 381.66 L454.0 381.66 L455.0 381.65 L456.0 381.65 L457.0 381.65 L458.0 381.65 L459.0 381.65 L460.0 381.65 L461.0 381.65 L462.0 381.65 L463.0 381.65 L464.0 381.65 L465.0 381.65 L466.0 381.65 L467.0 381.65 L468.0 381.65 L469.0 381.65 L470.0 381.65 L471.0 381.64 L472.0 381.64 L473.0 381.64 L474.0 381.64 L475.0 381.64 L476.0 381.64 L477.0 381.64 L478.0 381.64 L479.0 381.64 L480.0 381.64 L481.0 381.64 L482.0 381.64 L483.0 381.64 L484.0 381.64 L485.0 381.64 L486.0 381.63 L487.0 381.63 L488.0 381.63 L489.0 381.63 L490.0 381.63 L491.0 381.63 L492.0 381.63 L493.0 381.63 L494.0 381.63 L495.0 381.63 L496.0 381.63 L497.0 381.63 L498.0 381.63 L499.0 381.63 L500.0 381.63 L501.0 381.62 L502.0 381.62 L503.0 381.62 L504.0 381.62 L505.0 381.62 L506.0 381.62 L507.0 381.62 L508.0 381.62 L509.0 381.62 L510.0 381.62 L511.0 381.62 L512.0 381.62 L513.0 381.62 L514.0 381.62 L515.0 381.62 L516.0 381.62 L517.0 381.61 L518.0 381.61 L519.0 381.61 L520.0 381.61 L521.0 381.61 L522.0 381.61 L523.0 381.61 L524.0 381.61 L525.0 381.61 L526.0 381.61 L527.0 381.61 L528.0 381.61 L529.0 381.61 L530.0 381.61 L531.0 381.61 L532.0 381.60 L533.0 381.60 L534.0 381.60 L535.0 381.60 L536.0 381.60 L537.0 381.60 L538.0 381.60 L539.0 381.60 L540.0 381.60 L541.0 381.60 L542.0 381.60 L543.0 381.60 L544.0 381.60 L545.0 381.60 L546.0 381.60 L547.0 381.59 L548.0 381.59 L549.0 381.59 L550.0 381.59 L551.0 381.59 L552.0 381.59 L553.0 381.59 L554.0 381.59 L555.0 381.59 L556.0 381.59 L557.0 381.59 L558.0 381.59 L559.0 381.59 L560.0 381.59 L561.0 381.59 L562.0 381.58 L563.0 381.58 L564.0 381.58 L565.0 381.58 L566.0 381.58 L567.0 381.58 L568.0 381.58 L569.0 381.58 L570.0 381.58 L571.0 381.58 L572.0 381.58 L573.0 381.58 L574.0 381.58 L575.0 381.58 L576.0 381.58 L577.0 381.58 L578.0 381.57 L579.0 381.57 L580.0 381.57 L581.0 381.57 L582.0 381.57 L583.0 381.57 L584.0 381.57 L585.0 381.57 L586.0 381.57 L587.0 381.57 L588.0 381.57 L589.0 381.57 L590.0 381.57 L591.0 381.57 L592.0 381.57 L593.0 381.56 L594.0 381.56 L595.0 381.56 L596.0 381.56 L597.0 381.56 L598.0 381.56 L599.0 381.56 L600.0 381.56 L601.0 381.56 L602.0 381.56 L603.0 381.56 L604.0 381.56 L605.0 381.56 L606.0 381.56 L607.0 381.56 L608.0 381.55 L609.0 381.55 L610.0 381.55 L611.0 381.55 L612.0 381.55 L613.0 381.55 L614.0 381.55 L615.0 381.55 L616.0 381.55 L617.0 381.55 L618.0 381.55 L619.0 381.55 L620.0 381.55 L621.0 381.55 L622.0 381.55 L623.0 381.55 L624.0 381.54 L625.0 381.54 L626.0 381.54 L627.0 381.54 L628.0 381.54 L629.0 381.54 L630.0 381.54 L631.0 381.54 L632.0 381.54 L633.0 381.54 L634.0 381.54 L635.0 381.54 L636.0 381.54 L637.0 381.54 L638.0 381.54 L639.0 381.53 L640.0 381.53 L641.0 381.53 L642.0 381.53 L643.0 381.53 L644.0 381.53 L645.0 381.53 L646.0 381.53 L647.0 381.53 L648.0 381.53 L649.0 381.53 L650.0 381.53 L651.0 381.53 L652.0 381.53 L653.0 381.53 L654.0 381.52 L655.0 381.52 L656.0 381.52 L657.0 381.52 L658.0 381.52 L659.0 381.52 L660.0 381.52 L661.0 381.52 L662.0 381.52 L663.0 381.52 L664.0 381.52 L665.0 381.52 L666.0 381.52 L667.0 381.52 L668.0 381.52 L669.0 381.52 L670.0 381.51 L671.0 381.51 L672.0 381.51 L673.0 381.51 L674.0 381.51 L675.0 381.51 L676.0 381.51 L677.0 381.51 L678.0 381.51 L679.0 381.51 L680.0 381.51 L681.0 381.51 L682.0 381.51 L683.0 381.51 L684.0 381.51 L685.0 381.50 L686.0 381.50 L687.0 381.50 L688.0 381.50 L689.0 381.50 L690.0 381.50 L691.0 381.50 L692.0 381.50" fill="none" stroke="rgba(40,40,60,0.22)" stroke-width="0.6"/>
<path d="M386.0 384.8 L386.0 382.90 L387.0 382.90 L388.0 382.90 L389.0 382.90 L390.0 382.90 L391.0 382.90 L392.0 382.90 L393.0 382.90 L394.0 382.89 L395.0 382.89 L396.0 382.89 L397.0 382.89 L398.0 382.89 L399.0 382.89 L400.0 382.89 L401.0 382.89 L402.0 382.89 L403.0 382.89 L404.0 382.89 L405.0 382.89 L406.0 382.89 L407.0 382.89 L408.0 382.89 L409.0 382.88 L410.0 382.88 L411.0 382.88 L412.0 382.88 L413.0 382.88 L414.0 382.88 L415.0 382.88 L416.0 382.88 L417.0 382.88 L418.0 382.88 L419.0 382.88 L420.0 382.88 L421.0 382.88 L422.0 382.88 L423.0 382.88 L424.0 382.88 L425.0 382.87 L426.0 382.87 L427.0 382.87 L428.0 382.87 L429.0 382.87 L430.0 382.87 L431.0 382.87 L432.0 382.87 L433.0 382.87 L434.0 382.87 L435.0 382.87 L436.0 382.87 L437.0 382.87 L438.0 382.87 L439.0 382.87 L440.0 382.86 L441.0 382.86 L442.0 382.86 L443.0 382.86 L444.0 382.86 L445.0 382.86 L446.0 382.86 L447.0 382.86 L448.0 382.86 L449.0 382.86 L450.0 382.86 L451.0 382.86 L452.0 382.86 L453.0 382.86 L454.0 382.86 L455.0 382.85 L456.0 382.85 L457.0 382.85 L458.0 382.85 L459.0 382.85 L460.0 382.85 L461.0 382.85 L462.0 382.85 L463.0 382.85 L464.0 382.85 L465.0 382.85 L466.0 382.85 L467.0 382.85 L468.0 382.85 L469.0 382.85 L470.0 382.85 L471.0 382.84 L472.0 382.84 L473.0 382.84 L474.0 382.84 L475.0 382.84 L476.0 382.84 L477.0 382.84 L478.0 382.84 L479.0 382.84 L480.0 382.84 L481.0 382.84 L482.0 382.84 L483.0 382.84 L484.0 382.84 L485.0 382.84 L486.0 382.83 L487.0 382.83 L488.0 382.83 L489.0 382.83 L490.0 382.83 L491.0 382.83 L492.0 382.83 L493.0 382.83 L494.0 382.83 L495.0 382.83 L496.0 382.83 L497.0 382.83 L498.0 382.83 L499.0 382.83 L500.0 382.83 L501.0 382.82 L502.0 382.82 L503.0 382.82 L504.0 382.82 L505.0 382.82 L506.0 382.82 L507.0 382.82 L508.0 382.82 L509.0 382.82 L510.0 382.82 L511.0 382.82 L512.0 382.82 L513.0 382.82 L514.0 382.82 L515.0 382.82 L516.0 382.82 L517.0 382.81 L518.0 382.81 L519.0 382.81 L520.0 382.81 L521.0 382.81 L522.0 382.81 L523.0 382.81 L524.0 382.81 L525.0 382.81 L526.0 382.81 L527.0 382.81 L528.0 382.81 L529.0 382.81 L530.0 382.81 L531.0 382.81 L532.0 382.80 L533.0 382.80 L534.0 382.80 L535.0 382.80 L536.0 382.80 L537.0 382.80 L538.0 382.80 L539.0 382.80 L540.0 382.80 L541.0 382.80 L542.0 382.80 L543.0 382.80 L544.0 382.80 L545.0 382.80 L546.0 382.80 L547.0 382.79 L548.0 382.79 L549.0 382.79 L550.0 382.79 L551.0 382.79 L552.0 382.79 L553.0 382.79 L554.0 382.79 L555.0 382.79 L556.0 382.79 L557.0 382.79 L558.0 382.79 L559.0 382.79 L560.0 382.79 L561.0 382.79 L562.0 382.78 L563.0 382.78 L564.0 382.78 L565.0 382.78 L566.0 382.78 L567.0 382.78 L568.0 382.78 L569.0 382.78 L570.0 382.78 L571.0 382.78 L572.0 382.78 L573.0 382.78 L574.0 382.78 L575.0 382.78 L576.0 382.78 L577.0 382.78 L578.0 382.77 L579.0 382.77 L580.0 382.77 L581.0 382.77 L582.0 382.77 L583.0 382.77 L584.0 382.77 L585.0 382.77 L586.0 382.77 L587.0 382.77 L588.0 382.77 L589.0 382.77 L590.0 382.77 L591.0 382.77 L592.0 382.77 L593.0 382.76 L594.0 382.76 L595.0 382.76 L596.0 382.76 L597.0 382.76 L598.0 382.76 L599.0 382.76 L600.0 382.76 L601.0 382.76 L602.0 382.76 L603.0 382.76 L604.0 382.76 L605.0 382.76 L606.0 382.76 L607.0 382.76 L608.0 382.75 L609.0 382.75 L610.0 382.75 L611.0 382.75 L612.0 382.75 L613.0 382.75 L614.0 382.75 L615.0 382.75 L616.0 382.75 L617.0 382.75 L618.0 382.75 L619.0 382.75 L620.0 382.75 L621.0 382.75 L622.0 382.75 L623.0 382.75 L624.0 382.74 L625.0 382.74 L626.0 382.74 L627.0 382.74 L628.0 382.74 L629.0 382.74 L630.0 382.74 L631.0 382.74 L632.0 382.74 L633.0 382.74 L634.0 382.74 L635.0 382.74 L636.0 382.74 L637.0 382.74 L638.0 382.74 L639.0 382.73 L640.0 382.73 L641.0 382.73 L642.0 382.73 L643.0 382.73 L644.0 382.73 L645.0 382.73 L646.0 382.73 L647.0 382.73 L648.0 382.73 L649.0 382.73 L650.0 382.73 L651.0 382.73 L652.0 382.73 L653.0 382.73 L654.0 382.72 L655.0 382.72 L656.0 382.72 L657.0 382.72 L658.0 382.72 L659.0 382.72 L660.0 382.72 L661.0 382.72 L662.0 382.72 L663.0 382.72 L664.0 382.72 L665.0 382.72 L666.0 382.72 L667.0 382.72 L668.0 382.72 L669.0 382.72 L670.0 382.71 L671.0 382.71 L672.0 382.71 L673.0 382.71 L674.0 382.71 L675.0 382.71 L676.0 382.71 L677.0 382.71 L678.0 382.71 L679.0 382.71 L680.0 382.71 L681.0 382.71 L682.0 382.71 L683.0 382.71 L684.0 382.71 L685.0 382.70 L686.0 382.70 L687.0 382.70 L688.0 382.70 L689.0 382.70 L690.0 382.70 L691.0 382.70 L692.0 382.70 L692.0 384.8 Z" fill="#c98a5a" fill-opacity="1.0"/>
<path d="M386.0 382.90 L387.0 382.90 L388.0 382.90 L389.0 382.90 L390.0 382.90 L391.0 382.90 L392.0 382.90 L393.0 382.90 L394.0 382.89 L395.0 382.89 L396.0 382.89 L397.0 382.89 L398.0 382.89 L399.0 382.89 L400.0 382.89 L401.0 382.89 L402.0 382.89 L403.0 382.89 L404.0 382.89 L405.0 382.89 L406.0 382.89 L407.0 382.89 L408.0 382.89 L409.0 382.88 L410.0 382.88 L411.0 382.88 L412.0 382.88 L413.0 382.88 L414.0 382.88 L415.0 382.88 L416.0 382.88 L417.0 382.88 L418.0 382.88 L419.0 382.88 L420.0 382.88 L421.0 382.88 L422.0 382.88 L423.0 382.88 L424.0 382.88 L425.0 382.87 L426.0 382.87 L427.0 382.87 L428.0 382.87 L429.0 382.87 L430.0 382.87 L431.0 382.87 L432.0 382.87 L433.0 382.87 L434.0 382.87 L435.0 382.87 L436.0 382.87 L437.0 382.87 L438.0 382.87 L439.0 382.87 L440.0 382.86 L441.0 382.86 L442.0 382.86 L443.0 382.86 L444.0 382.86 L445.0 382.86 L446.0 382.86 L447.0 382.86 L448.0 382.86 L449.0 382.86 L450.0 382.86 L451.0 382.86 L452.0 382.86 L453.0 382.86 L454.0 382.86 L455.0 382.85 L456.0 382.85 L457.0 382.85 L458.0 382.85 L459.0 382.85 L460.0 382.85 L461.0 382.85 L462.0 382.85 L463.0 382.85 L464.0 382.85 L465.0 382.85 L466.0 382.85 L467.0 382.85 L468.0 382.85 L469.0 382.85 L470.0 382.85 L471.0 382.84 L472.0 382.84 L473.0 382.84 L474.0 382.84 L475.0 382.84 L476.0 382.84 L477.0 382.84 L478.0 382.84 L479.0 382.84 L480.0 382.84 L481.0 382.84 L482.0 382.84 L483.0 382.84 L484.0 382.84 L485.0 382.84 L486.0 382.83 L487.0 382.83 L488.0 382.83 L489.0 382.83 L490.0 382.83 L491.0 382.83 L492.0 382.83 L493.0 382.83 L494.0 382.83 L495.0 382.83 L496.0 382.83 L497.0 382.83 L498.0 382.83 L499.0 382.83 L500.0 382.83 L501.0 382.82 L502.0 382.82 L503.0 382.82 L504.0 382.82 L505.0 382.82 L506.0 382.82 L507.0 382.82 L508.0 382.82 L509.0 382.82 L510.0 382.82 L511.0 382.82 L512.0 382.82 L513.0 382.82 L514.0 382.82 L515.0 382.82 L516.0 382.82 L517.0 382.81 L518.0 382.81 L519.0 382.81 L520.0 382.81 L521.0 382.81 L522.0 382.81 L523.0 382.81 L524.0 382.81 L525.0 382.81 L526.0 382.81 L527.0 382.81 L528.0 382.81 L529.0 382.81 L530.0 382.81 L531.0 382.81 L532.0 382.80 L533.0 382.80 L534.0 382.80 L535.0 382.80 L536.0 382.80 L537.0 382.80 L538.0 382.80 L539.0 382.80 L540.0 382.80 L541.0 382.80 L542.0 382.80 L543.0 382.80 L544.0 382.80 L545.0 382.80 L546.0 382.80 L547.0 382.79 L548.0 382.79 L549.0 382.79 L550.0 382.79 L551.0 382.79 L552.0 382.79 L553.0 382.79 L554.0 382.79 L555.0 382.79 L556.0 382.79 L557.0 382.79 L558.0 382.79 L559.0 382.79 L560.0 382.79 L561.0 382.79 L562.0 382.78 L563.0 382.78 L564.0 382.78 L565.0 382.78 L566.0 382.78 L567.0 382.78 L568.0 382.78 L569.0 382.78 L570.0 382.78 L571.0 382.78 L572.0 382.78 L573.0 382.78 L574.0 382.78 L575.0 382.78 L576.0 382.78 L577.0 382.78 L578.0 382.77 L579.0 382.77 L580.0 382.77 L581.0 382.77 L582.0 382.77 L583.0 382.77 L584.0 382.77 L585.0 382.77 L586.0 382.77 L587.0 382.77 L588.0 382.77 L589.0 382.77 L590.0 382.77 L591.0 382.77 L592.0 382.77 L593.0 382.76 L594.0 382.76 L595.0 382.76 L596.0 382.76 L597.0 382.76 L598.0 382.76 L599.0 382.76 L600.0 382.76 L601.0 382.76 L602.0 382.76 L603.0 382.76 L604.0 382.76 L605.0 382.76 L606.0 382.76 L607.0 382.76 L608.0 382.75 L609.0 382.75 L610.0 382.75 L611.0 382.75 L612.0 382.75 L613.0 382.75 L614.0 382.75 L615.0 382.75 L616.0 382.75 L617.0 382.75 L618.0 382.75 L619.0 382.75 L620.0 382.75 L621.0 382.75 L622.0 382.75 L623.0 382.75 L624.0 382.74 L625.0 382.74 L626.0 382.74 L627.0 382.74 L628.0 382.74 L629.0 382.74 L630.0 382.74 L631.0 382.74 L632.0 382.74 L633.0 382.74 L634.0 382.74 L635.0 382.74 L636.0 382.74 L637.0 382.74 L638.0 382.74 L639.0 382.73 L640.0 382.73 L641.0 382.73 L642.0 382.73 L643.0 382.73 L644.0 382.73 L645.0 382.73 L646.0 382.73 L647.0 382.73 L648.0 382.73 L649.0 382.73 L650.0 382.73 L651.0 382.73 L652.0 382.73 L653.0 382.73 L654.0 382.72 L655.0 382.72 L656.0 382.72 L657.0 382.72 L658.0 382.72 L659.0 382.72 L660.0 382.72 L661.0 382.72 L662.0 382.72 L663.0 382.72 L664.0 382.72 L665.0 382.72 L666.0 382.72 L667.0 382.72 L668.0 382.72 L669.0 382.72 L670.0 382.71 L671.0 382.71 L672.0 382.71 L673.0 382.71 L674.0 382.71 L675.0 382.71 L676.0 382.71 L677.0 382.71 L678.0 382.71 L679.0 382.71 L680.0 382.71 L681.0 382.71 L682.0 382.71 L683.0 382.71 L684.0 382.71 L685.0 382.70 L686.0 382.70 L687.0 382.70 L688.0 382.70 L689.0 382.70 L690.0 382.70 L691.0 382.70 L692.0 382.70" fill="none" stroke="rgba(40,40,60,0.22)" stroke-width="0.6"/>
<path d="M386.0 384.8 L386.0 383.20 L387.0 383.20 L388.0 383.20 L389.0 383.20 L390.0 383.20 L391.0 383.20 L392.0 383.20 L393.0 383.20 L394.0 383.20 L395.0 383.20 L396.0 383.20 L397.0 383.20 L398.0 383.20 L399.0 383.20 L400.0 383.20 L401.0 383.20 L402.0 383.19 L403.0 383.19 L404.0 383.19 L405.0 383.19 L406.0 383.19 L407.0 383.19 L408.0 383.19 L409.0 383.19 L410.0 383.19 L411.0 383.19 L412.0 383.19 L413.0 383.19 L414.0 383.19 L415.0 383.19 L416.0 383.19 L417.0 383.19 L418.0 383.19 L419.0 383.19 L420.0 383.19 L421.0 383.19 L422.0 383.19 L423.0 383.19 L424.0 383.19 L425.0 383.19 L426.0 383.19 L427.0 383.19 L428.0 383.19 L429.0 383.19 L430.0 383.19 L431.0 383.19 L432.0 383.18 L433.0 383.18 L434.0 383.18 L435.0 383.18 L436.0 383.18 L437.0 383.18 L438.0 383.18 L439.0 383.18 L440.0 383.18 L441.0 383.18 L442.0 383.18 L443.0 383.18 L444.0 383.18 L445.0 383.18 L446.0 383.18 L447.0 383.18 L448.0 383.18 L449.0 383.18 L450.0 383.18 L451.0 383.18 L452.0 383.18 L453.0 383.18 L454.0 383.18 L455.0 383.18 L456.0 383.18 L457.0 383.18 L458.0 383.18 L459.0 383.18 L460.0 383.18 L461.0 383.18 L462.0 383.18 L463.0 383.17 L464.0 383.17 L465.0 383.17 L466.0 383.17 L467.0 383.17 L468.0 383.17 L469.0 383.17 L470.0 383.17 L471.0 383.17 L472.0 383.17 L473.0 383.17 L474.0 383.17 L475.0 383.17 L476.0 383.17 L477.0 383.17 L478.0 383.17 L479.0 383.17 L480.0 383.17 L481.0 383.17 L482.0 383.17 L483.0 383.17 L484.0 383.17 L485.0 383.17 L486.0 383.17 L487.0 383.17 L488.0 383.17 L489.0 383.17 L490.0 383.17 L491.0 383.17 L492.0 383.17 L493.0 383.17 L494.0 383.16 L495.0 383.16 L496.0 383.16 L497.0 383.16 L498.0 383.16 L499.0 383.16 L500.0 383.16 L501.0 383.16 L502.0 383.16 L503.0 383.16 L504.0 383.16 L505.0 383.16 L506.0 383.16 L507.0 383.16 L508.0 383.16 L509.0 383.16 L510.0 383.16 L511.0 383.16 L512.0 383.16 L513.0 383.16 L514.0 383.16 L515.0 383.16 L516.0 383.16 L517.0 383.16 L518.0 383.16 L519.0 383.16 L520.0 383.16 L521.0 383.16 L522.0 383.16 L523.0 383.16 L524.0 383.15 L525.0 383.15 L526.0 383.15 L527.0 383.15 L528.0 383.15 L529.0 383.15 L530.0 383.15 L531.0 383.15 L532.0 383.15 L533.0 383.15 L534.0 383.15 L535.0 383.15 L536.0 383.15 L537.0 383.15 L538.0 383.15 L539.0 383.15 L540.0 383.15 L541.0 383.15 L542.0 383.15 L543.0 383.15 L544.0 383.15 L545.0 383.15 L546.0 383.15 L547.0 383.15 L548.0 383.15 L549.0 383.15 L550.0 383.15 L551.0 383.15 L552.0 383.15 L553.0 383.15 L554.0 383.15 L555.0 383.14 L556.0 383.14 L557.0 383.14 L558.0 383.14 L559.0 383.14 L560.0 383.14 L561.0 383.14 L562.0 383.14 L563.0 383.14 L564.0 383.14 L565.0 383.14 L566.0 383.14 L567.0 383.14 L568.0 383.14 L569.0 383.14 L570.0 383.14 L571.0 383.14 L572.0 383.14 L573.0 383.14 L574.0 383.14 L575.0 383.14 L576.0 383.14 L577.0 383.14 L578.0 383.14 L579.0 383.14 L580.0 383.14 L581.0 383.14 L582.0 383.14 L583.0 383.14 L584.0 383.14 L585.0 383.13 L586.0 383.13 L587.0 383.13 L588.0 383.13 L589.0 383.13 L590.0 383.13 L591.0 383.13 L592.0 383.13 L593.0 383.13 L594.0 383.13 L595.0 383.13 L596.0 383.13 L597.0 383.13 L598.0 383.13 L599.0 383.13 L600.0 383.13 L601.0 383.13 L602.0 383.13 L603.0 383.13 L604.0 383.13 L605.0 383.13 L606.0 383.13 L607.0 383.13 L608.0 383.13 L609.0 383.13 L610.0 383.13 L611.0 383.13 L612.0 383.13 L613.0 383.13 L614.0 383.13 L615.0 383.13 L616.0 383.12 L617.0 383.12 L618.0 383.12 L619.0 383.12 L620.0 383.12 L621.0 383.12 L622.0 383.12 L623.0 383.12 L624.0 383.12 L625.0 383.12 L626.0 383.12 L627.0 383.12 L628.0 383.12 L629.0 383.12 L630.0 383.12 L631.0 383.12 L632.0 383.12 L633.0 383.12 L634.0 383.12 L635.0 383.12 L636.0 383.12 L637.0 383.12 L638.0 383.12 L639.0 383.12 L640.0 383.12 L641.0 383.12 L642.0 383.12 L643.0 383.12 L644.0 383.12 L645.0 383.12 L646.0 383.12 L647.0 383.11 L648.0 383.11 L649.0 383.11 L650.0 383.11 L651.0 383.11 L652.0 383.11 L653.0 383.11 L654.0 383.11 L655.0 383.11 L656.0 383.11 L657.0 383.11 L658.0 383.11 L659.0 383.11 L660.0 383.11 L661.0 383.11 L662.0 383.11 L663.0 383.11 L664.0 383.11 L665.0 383.11 L666.0 383.11 L667.0 383.11 L668.0 383.11 L669.0 383.11 L670.0 383.11 L671.0 383.11 L672.0 383.11 L673.0 383.11 L674.0 383.11 L675.0 383.11 L676.0 383.11 L677.0 383.10 L678.0 383.10 L679.0 383.10 L680.0 383.10 L681.0 383.10 L682.0 383.10 L683.0 383.10 L684.0 383.10 L685.0 383.10 L686.0 383.10 L687.0 383.10 L688.0 383.10 L689.0 383.10 L690.0 383.10 L691.0 383.10 L692.0 383.10 L692.0 384.8 Z" fill="#6d4f5a" fill-opacity="1.0"/>
<path d="M386.0 383.20 L387.0 383.20 L388.0 383.20 L389.0 383.20 L390.0 383.20 L391.0 383.20 L392.0 383.20 L393.0 383.20 L394.0 383.20 L395.0 383.20 L396.0 383.20 L397.0 383.20 L398.0 383.20 L399.0 383.20 L400.0 383.20 L401.0 383.20 L402.0 383.19 L403.0 383.19 L404.0 383.19 L405.0 383.19 L406.0 383.19 L407.0 383.19 L408.0 383.19 L409.0 383.19 L410.0 383.19 L411.0 383.19 L412.0 383.19 L413.0 383.19 L414.0 383.19 L415.0 383.19 L416.0 383.19 L417.0 383.19 L418.0 383.19 L419.0 383.19 L420.0 383.19 L421.0 383.19 L422.0 383.19 L423.0 383.19 L424.0 383.19 L425.0 383.19 L426.0 383.19 L427.0 383.19 L428.0 383.19 L429.0 383.19 L430.0 383.19 L431.0 383.19 L432.0 383.18 L433.0 383.18 L434.0 383.18 L435.0 383.18 L436.0 383.18 L437.0 383.18 L438.0 383.18 L439.0 383.18 L440.0 383.18 L441.0 383.18 L442.0 383.18 L443.0 383.18 L444.0 383.18 L445.0 383.18 L446.0 383.18 L447.0 383.18 L448.0 383.18 L449.0 383.18 L450.0 383.18 L451.0 383.18 L452.0 383.18 L453.0 383.18 L454.0 383.18 L455.0 383.18 L456.0 383.18 L457.0 383.18 L458.0 383.18 L459.0 383.18 L460.0 383.18 L461.0 383.18 L462.0 383.18 L463.0 383.17 L464.0 383.17 L465.0 383.17 L466.0 383.17 L467.0 383.17 L468.0 383.17 L469.0 383.17 L470.0 383.17 L471.0 383.17 L472.0 383.17 L473.0 383.17 L474.0 383.17 L475.0 383.17 L476.0 383.17 L477.0 383.17 L478.0 383.17 L479.0 383.17 L480.0 383.17 L481.0 383.17 L482.0 383.17 L483.0 383.17 L484.0 383.17 L485.0 383.17 L486.0 383.17 L487.0 383.17 L488.0 383.17 L489.0 383.17 L490.0 383.17 L491.0 383.17 L492.0 383.17 L493.0 383.17 L494.0 383.16 L495.0 383.16 L496.0 383.16 L497.0 383.16 L498.0 383.16 L499.0 383.16 L500.0 383.16 L501.0 383.16 L502.0 383.16 L503.0 383.16 L504.0 383.16 L505.0 383.16 L506.0 383.16 L507.0 383.16 L508.0 383.16 L509.0 383.16 L510.0 383.16 L511.0 383.16 L512.0 383.16 L513.0 383.16 L514.0 383.16 L515.0 383.16 L516.0 383.16 L517.0 383.16 L518.0 383.16 L519.0 383.16 L520.0 383.16 L521.0 383.16 L522.0 383.16 L523.0 383.16 L524.0 383.15 L525.0 383.15 L526.0 383.15 L527.0 383.15 L528.0 383.15 L529.0 383.15 L530.0 383.15 L531.0 383.15 L532.0 383.15 L533.0 383.15 L534.0 383.15 L535.0 383.15 L536.0 383.15 L537.0 383.15 L538.0 383.15 L539.0 383.15 L540.0 383.15 L541.0 383.15 L542.0 383.15 L543.0 383.15 L544.0 383.15 L545.0 383.15 L546.0 383.15 L547.0 383.15 L548.0 383.15 L549.0 383.15 L550.0 383.15 L551.0 383.15 L552.0 383.15 L553.0 383.15 L554.0 383.15 L555.0 383.14 L556.0 383.14 L557.0 383.14 L558.0 383.14 L559.0 383.14 L560.0 383.14 L561.0 383.14 L562.0 383.14 L563.0 383.14 L564.0 383.14 L565.0 383.14 L566.0 383.14 L567.0 383.14 L568.0 383.14 L569.0 383.14 L570.0 383.14 L571.0 383.14 L572.0 383.14 L573.0 383.14 L574.0 383.14 L575.0 383.14 L576.0 383.14 L577.0 383.14 L578.0 383.14 L579.0 383.14 L580.0 383.14 L581.0 383.14 L582.0 383.14 L583.0 383.14 L584.0 383.14 L585.0 383.13 L586.0 383.13 L587.0 383.13 L588.0 383.13 L589.0 383.13 L590.0 383.13 L591.0 383.13 L592.0 383.13 L593.0 383.13 L594.0 383.13 L595.0 383.13 L596.0 383.13 L597.0 383.13 L598.0 383.13 L599.0 383.13 L600.0 383.13 L601.0 383.13 L602.0 383.13 L603.0 383.13 L604.0 383.13 L605.0 383.13 L606.0 383.13 L607.0 383.13 L608.0 383.13 L609.0 383.13 L610.0 383.13 L611.0 383.13 L612.0 383.13 L613.0 383.13 L614.0 383.13 L615.0 383.13 L616.0 383.12 L617.0 383.12 L618.0 383.12 L619.0 383.12 L620.0 383.12 L621.0 383.12 L622.0 383.12 L623.0 383.12 L624.0 383.12 L625.0 383.12 L626.0 383.12 L627.0 383.12 L628.0 383.12 L629.0 383.12 L630.0 383.12 L631.0 383.12 L632.0 383.12 L633.0 383.12 L634.0 383.12 L635.0 383.12 L636.0 383.12 L637.0 383.12 L638.0 383.12 L639.0 383.12 L640.0 383.12 L641.0 383.12 L642.0 383.12 L643.0 383.12 L644.0 383.12 L645.0 383.12 L646.0 383.12 L647.0 383.11 L648.0 383.11 L649.0 383.11 L650.0 383.11 L651.0 383.11 L652.0 383.11 L653.0 383.11 L654.0 383.11 L655.0 383.11 L656.0 383.11 L657.0 383.11 L658.0 383.11 L659.0 383.11 L660.0 383.11 L661.0 383.11 L662.0 383.11 L663.0 383.11 L664.0 383.11 L665.0 383.11 L666.0 383.11 L667.0 383.11 L668.0 383.11 L669.0 383.11 L670.0 383.11 L671.0 383.11 L672.0 383.11 L673.0 383.11 L674.0 383.11 L675.0 383.11 L676.0 383.11 L677.0 383.10 L678.0 383.10 L679.0 383.10 L680.0 383.10 L681.0 383.10 L682.0 383.10 L683.0 383.10 L684.0 383.10 L685.0 383.10 L686.0 383.10 L687.0 383.10 L688.0 383.10 L689.0 383.10 L690.0 383.10 L691.0 383.10 L692.0 383.10" fill="none" stroke="rgba(40,40,60,0.22)" stroke-width="0.6"/>
  <line x1="429.4" y1="85.7" x2="429.4" y2="384" stroke="rgba(0,0,0,0.035)" stroke-width="0.8"/>
<line x1="473.1" y1="85.7" x2="473.1" y2="384" stroke="rgba(0,0,0,0.035)" stroke-width="0.8"/>
<line x1="516.9" y1="85.7" x2="516.9" y2="384" stroke="rgba(0,0,0,0.035)" stroke-width="0.8"/>
<line x1="560.6" y1="85.7" x2="560.6" y2="384" stroke="rgba(0,0,0,0.035)" stroke-width="0.8"/>
<line x1="604.3" y1="85.7" x2="604.3" y2="384" stroke="rgba(0,0,0,0.035)" stroke-width="0.8"/>
<line x1="648.0" y1="85.7" x2="648.0" y2="384" stroke="rgba(0,0,0,0.035)" stroke-width="0.8"/>
<line x1="691.8" y1="85.7" x2="691.8" y2="384" stroke="rgba(0,0,0,0.035)" stroke-width="0.8"/>
  <line x1="385.6" y1="85" x2="385.6" y2="385" stroke="#8f8f8f" stroke-width="1.3"/>
  <g font-size="6.6" fill="#3b3f4f">
  <text x="383.5" y="87.9" text-anchor="end">4 Gbit/s</text>
<text x="383.5" y="125.2" text-anchor="end">3.5 Gbit/s</text>
<text x="383.5" y="162.5" text-anchor="end">3 Gbit/s</text>
<text x="383.5" y="199.79999999999998" text-anchor="end">2.5 Gbit/s</text>
<text x="383.5" y="237.1" text-anchor="end">2 Gbit/s</text>
<text x="383.5" y="274.4" text-anchor="end">1.5 Gbit/s</text>
<text x="383.5" y="311.59999999999997" text-anchor="end">1 Gbit/s</text>
<text x="383.5" y="348.9" text-anchor="end">500 Mbit/s</text>
  <text x="386.4" y="390.6" font-size="5.55">12.12 13:00</text>
  <text x="466" y="390.6" font-size="5.8">13:30</text>
  <text x="546.4" y="390.6" font-size="5.55">12.12 14:00</text>
  <text x="640.3" y="390.6" font-size="5.8">14:30</text>
  </g>
</svg>
<!-- chart footer -->
<div class="a" style="left:459px;top:407.6px;font-size:6.5px;color:#3e7fd6;line-height:8px;font-weight:bold">&lt;&lt;</div>
<div class="a" style="left:480px;top:407.6px;font-size:6.5px;color:#3e7fd6;line-height:8px;font-weight:bold">&lt;</div>
<div class="a" style="left:493px;top:403.8px;width:15px;height:13.5px;background:#1d7bd8;border-radius:1px"></div>
<div class="a" style="left:498.6px;top:406.7px;font-size:7px;color:#fff;line-height:8px;font-weight:bold">1</div>
<div class="a" style="left:517.6px;top:407.6px;font-size:6.5px;color:#3e7fd6;line-height:8px;font-weight:bold">&gt;</div>
<div class="a" style="left:533.6px;top:407.6px;font-size:6.5px;color:#3e7fd6;line-height:8px;font-weight:bold">&gt;&gt;</div>
<svg class="a" style="left:589px;top:402px" width="16" height="14"><circle cx="11" cy="5.6" r="4.1" fill="#d9eafc"/><text x="11.2" y="7" font-size="5.2" font-weight="bold" fill="#3e7fd6" text-anchor="middle">2</text><circle cx="4.8" cy="9" r="2.7" fill="none" stroke="#6f7382" stroke-width="0.8"/><circle cx="4.8" cy="9" r="1" fill="none" stroke="#6f7382" stroke-width="0.7"/></svg>
<svg class="a" style="left:618.5px;top:407.8px" width="8" height="7"><path d="M3.9 0.5H1a0.5 0.5 0 0 0-0.5 0.5V5.7a0.5 0.5 0 0 0 0.5 0.5H3.8M3.9 0.5L5.2 1.8V2.6M3.1 4.2H6.8M6 3.4L6.8 4.2L6 5" fill="none" stroke="#4a4e5c" stroke-width="0.7"/></svg>
<div class="a" style="left:630px;top:407.6px;font-size:6.55px;font-weight:bold;color:#3b3f4f;line-height:8px">Export</div>
<div class="a" style="left:665.2px;top:404px;width:34px;height:13.2px;border:1px solid #edf0f5;border-radius:2px;background:#fff"></div>
<div class="a" style="left:668.7px;top:407.2px;font-size:6.8px;color:#3b3f4f;line-height:8px">2 000</div>
<svg class="a" style="left:690px;top:406.8px" width="6" height="7"><path d="M2.7 0.5V6M0.9 4.2L2.7 6L4.5 4.2" fill="none" stroke="#4a4e5c" stroke-width="0.7"/></svg>

<!-- REPORTS PANEL -->
<div class="panel" style="left:705.3px;top:56.7px;width:187.5px;height:362px;overflow:hidden;border-bottom:none">
  <div class="ph"></div>
  <svg class="a" style="left:3.5px;top:3.2px" width="7" height="6"><path d="M0.3 0.8h1M0.3 2.9h1M0.3 5h1M2.3 0.8h4.4M2.3 2.9h4.4M2.3 5h4.4" stroke="#4b7fd6" stroke-width="0.8"/></svg>
  <div class="pt" style="left:14.5px;top:1.5px">Reports</div>
  <div class="rr" style="top:11.40px;background:#fff"><svg class="a" style="left:2.9px;top:6px" width="7" height="7"><rect x="0.5" y="0.5" width="5.6" height="5.6" rx="0.5" fill="none" stroke="#888c98" stroke-width="0.7"/><path d="M1.8 3.3H4.8" stroke="#555968" stroke-width="0.7"/></svg><svg class="a" style="left:13.2px;top:5.4px" width="8" height="7"><path d="M0.5 1.2V6H6.3L7.6 3H1.8L0.5 6M0.5 1.2H2.8L3.5 2H6.2V3" fill="#3c4050" stroke="#3c4050" stroke-width="0.6" stroke-linejoin="round"/></svg><div class="rt" style="left:24.1px">Traffic speed</div></div>
<div class="rr" style="top:30.18px;background:#fcfcfe"><svg class="a" style="left:22.7px;top:5.4px" width="6" height="8"><path d="M0.5 0.5H3.3L5 2.2V6.9H0.5Z M3.3 0.5V2.2H5" fill="none" stroke="#4a4e5c" stroke-width="0.7" stroke-linejoin="round"/></svg><div class="rt" style="left:33.7px">Traffic speed</div></div>
<div class="rr" style="top:48.96px;background:#fff"><svg class="a" style="left:22.7px;top:5.4px" width="6" height="8"><path d="M0.5 0.5H3.3L5 2.2V6.9H0.5Z M3.3 0.5V2.2H5" fill="none" stroke="#4a4e5c" stroke-width="0.7" stroke-linejoin="round"/></svg><div class="rt" style="left:33.7px">Traffic by protocols</div></div>
<div class="rr" style="top:67.74px;background:#fcfcfe"><svg class="a" style="left:22.7px;top:5.4px" width="6" height="8"><path d="M0.5 0.5H3.3L5 2.2V6.9H0.5Z M3.3 0.5V2.2H5" fill="none" stroke="#4a4e5c" stroke-width="0.7" stroke-linejoin="round"/></svg><div class="rt" style="left:33.7px">Traffic by application protocols</div></div>
<div class="rr" style="top:86.52px;background:#eff1f6"><svg class="a" style="left:22.7px;top:5.4px" width="6" height="8"><path d="M0.5 0.5H3.3L5 2.2V6.9H0.5Z M3.3 0.5V2.2H5" fill="none" stroke="#4a4e5c" stroke-width="0.7" stroke-linejoin="round"/></svg><div class="rt" style="left:33.7px">Traffic by application protocols groups</div></div>
<div class="rr" style="top:105.30px;background:#fcfcfe"><svg class="a" style="left:22.7px;top:5.4px" width="6" height="8"><path d="M0.5 0.5H3.3L5 2.2V6.9H0.5Z M3.3 0.5V2.2H5" fill="none" stroke="#4a4e5c" stroke-width="0.7" stroke-linejoin="round"/></svg><div class="rt" style="left:33.7px">Traffic by AS</div></div>
<div class="rr" style="top:124.08px;background:#fff"><svg class="a" style="left:22.7px;top:5.4px" width="6" height="8"><path d="M0.5 0.5H3.3L5 2.2V6.9H0.5Z M3.3 0.5V2.2H5" fill="none" stroke="#4a4e5c" stroke-width="0.7" stroke-linejoin="round"/></svg><div class="rt" style="left:33.7px">Traffic by subscriber&rsquo;s AS</div></div>
<div class="rr" style="top:142.86px;background:#fcfcfe"><svg class="a" style="left:22.7px;top:5.4px" width="6" height="8"><path d="M0.5 0.5H3.3L5 2.2V6.9H0.5Z M3.3 0.5V2.2H5" fill="none" stroke="#4a4e5c" stroke-width="0.7" stroke-linejoin="round"/></svg><div class="rt" style="left:33.7px">Traffic by vchannels</div></div>
<div class="rr" style="top:161.64px;background:#fff"><svg class="a" style="left:22.7px;top:5.4px" width="6" height="8"><path d="M0.5 0.5H3.3L5 2.2V6.9H0.5Z M3.3 0.5V2.2H5" fill="none" stroke="#4a4e5c" stroke-width="0.7" stroke-linejoin="round"/></svg><div class="rt" style="left:33.7px">Traffic by classes</div></div>
<div class="rr" style="top:180.42px;background:#fcfcfe"><svg class="a" style="left:22.7px;top:5.4px" width="6" height="8"><path d="M0.5 0.5H3.3L5 2.2V6.9H0.5Z M3.3 0.5V2.2H5" fill="none" stroke="#4a4e5c" stroke-width="0.7" stroke-linejoin="round"/></svg><div class="rt" style="left:33.7px">Traffic by DSCP</div></div>
<div class="rr" style="top:199.20px;background:#fff"><svg class="a" style="left:22.7px;top:5.4px" width="6" height="8"><path d="M0.5 0.5H3.3L5 2.2V6.9H0.5Z M3.3 0.5V2.2H5" fill="none" stroke="#4a4e5c" stroke-width="0.7" stroke-linejoin="round"/></svg><div class="rt" style="left:33.7px">Flow</div></div>
<div class="rr" style="top:217.98px;background:#fcfcfe"><svg class="a" style="left:22.7px;top:5.4px" width="6" height="8"><path d="M0.5 0.5H3.3L5 2.2V6.9H0.5Z M3.3 0.5V2.2H5" fill="none" stroke="#4a4e5c" stroke-width="0.7" stroke-linejoin="round"/></svg><div class="rt" style="left:33.7px">Flow by protocols</div></div>
<div class="rr" style="top:236.76px;background:#fff"><svg class="a" style="left:22.7px;top:5.4px" width="6" height="8"><path d="M0.5 0.5H3.3L5 2.2V6.9H0.5Z M3.3 0.5V2.2H5" fill="none" stroke="#4a4e5c" stroke-width="0.7" stroke-linejoin="round"/></svg><div class="rt" style="left:33.7px">Flow by application protocols</div></div>
<div class="rr" style="top:255.54px;background:#fcfcfe"><svg class="a" style="left:22.7px;top:5.4px" width="6" height="8"><path d="M0.5 0.5H3.3L5 2.2V6.9H0.5Z M3.3 0.5V2.2H5" fill="none" stroke="#4a4e5c" stroke-width="0.7" stroke-linejoin="round"/></svg><div class="rt" style="left:33.7px">Flow by application protocols groups</div></div>
<div class="rr" style="top:274.32px;background:#fff"><svg class="a" style="left:22.7px;top:5.4px" width="6" height="8"><path d="M0.5 0.5H3.3L5 2.2V6.9H0.5Z M3.3 0.5V2.2H5" fill="none" stroke="#4a4e5c" stroke-width="0.7" stroke-linejoin="round"/></svg><div class="rt" style="left:33.7px">Flow by vchannels</div></div>
<div class="rr" style="top:293.10px;background:#fcfcfe"><svg class="a" style="left:22.7px;top:5.4px" width="6" height="8"><path d="M0.5 0.5H3.3L5 2.2V6.9H0.5Z M3.3 0.5V2.2H5" fill="none" stroke="#4a4e5c" stroke-width="0.7" stroke-linejoin="round"/></svg><div class="rt" style="left:33.7px">Flow by classes</div></div>
<div class="rr" style="top:311.88px;background:#fff"><svg class="a" style="left:22.7px;top:5.4px" width="6" height="8"><path d="M0.5 0.5H3.3L5 2.2V6.9H0.5Z M3.3 0.5V2.2H5" fill="none" stroke="#4a4e5c" stroke-width="0.7" stroke-linejoin="round"/></svg><div class="rt" style="left:33.7px">Flow by DSCP</div></div>
<div class="rr" style="top:330.66px;background:#fcfcfe"><svg class="a" style="left:2.9px;top:6px" width="7" height="7"><rect x="0.5" y="0.5" width="5.6" height="5.6" rx="0.5" fill="none" stroke="#888c98" stroke-width="0.7"/><path d="M1.8 3.3H4.8 M3.3 1.8V4.8" stroke="#555968" stroke-width="0.7"/></svg><svg class="a" style="left:13.7px;top:5.4px" width="8" height="7"><path d="M0.6 1H2.9L3.6 1.9H6.8V6H0.6Z" fill="none" stroke="#5a5e6c" stroke-width="0.7" stroke-linejoin="round"/></svg><div class="rt" style="left:24px">Top</div></div>
<div class="rr" style="top:349.44px;background:#fff"><svg class="a" style="left:2.9px;top:6px" width="7" height="7"><rect x="0.5" y="0.5" width="5.6" height="5.6" rx="0.5" fill="none" stroke="#888c98" stroke-width="0.7"/><path d="M1.8 3.3H4.8 M3.3 1.8V4.8" stroke="#555968" stroke-width="0.7"/></svg><svg class="a" style="left:13.7px;top:5.4px" width="8" height="7"><path d="M0.6 1H2.9L3.6 1.9H6.8V6H0.6Z" fill="none" stroke="#5a5e6c" stroke-width="0.7" stroke-linejoin="round"/></svg><div class="rt" style="left:24px">RTT</div></div>
</div>
<!-- red highlight -->
<div class="a" style="left:703.4px;top:142.1px;width:191.6px;height:22.6px;border:1.5px solid #e81e24"></div>
<!-- float button -->
<div class="a" style="left:878.7px;top:406px;width:12px;height:12px;border-radius:50%;background:#fff;box-shadow:0 0 2px rgba(0,0,0,0.25)"></div>
<svg class="a" style="left:881.5px;top:409px" width="7" height="6"><rect x="0.8" y="1.2" width="5" height="4.2" rx="0.7" fill="none" stroke="#a8adb8" stroke-width="0.7"/><path d="M0.8 2.6h5" stroke="#a8adb8" stroke-width="0.6"/></svg>
</body></html>
